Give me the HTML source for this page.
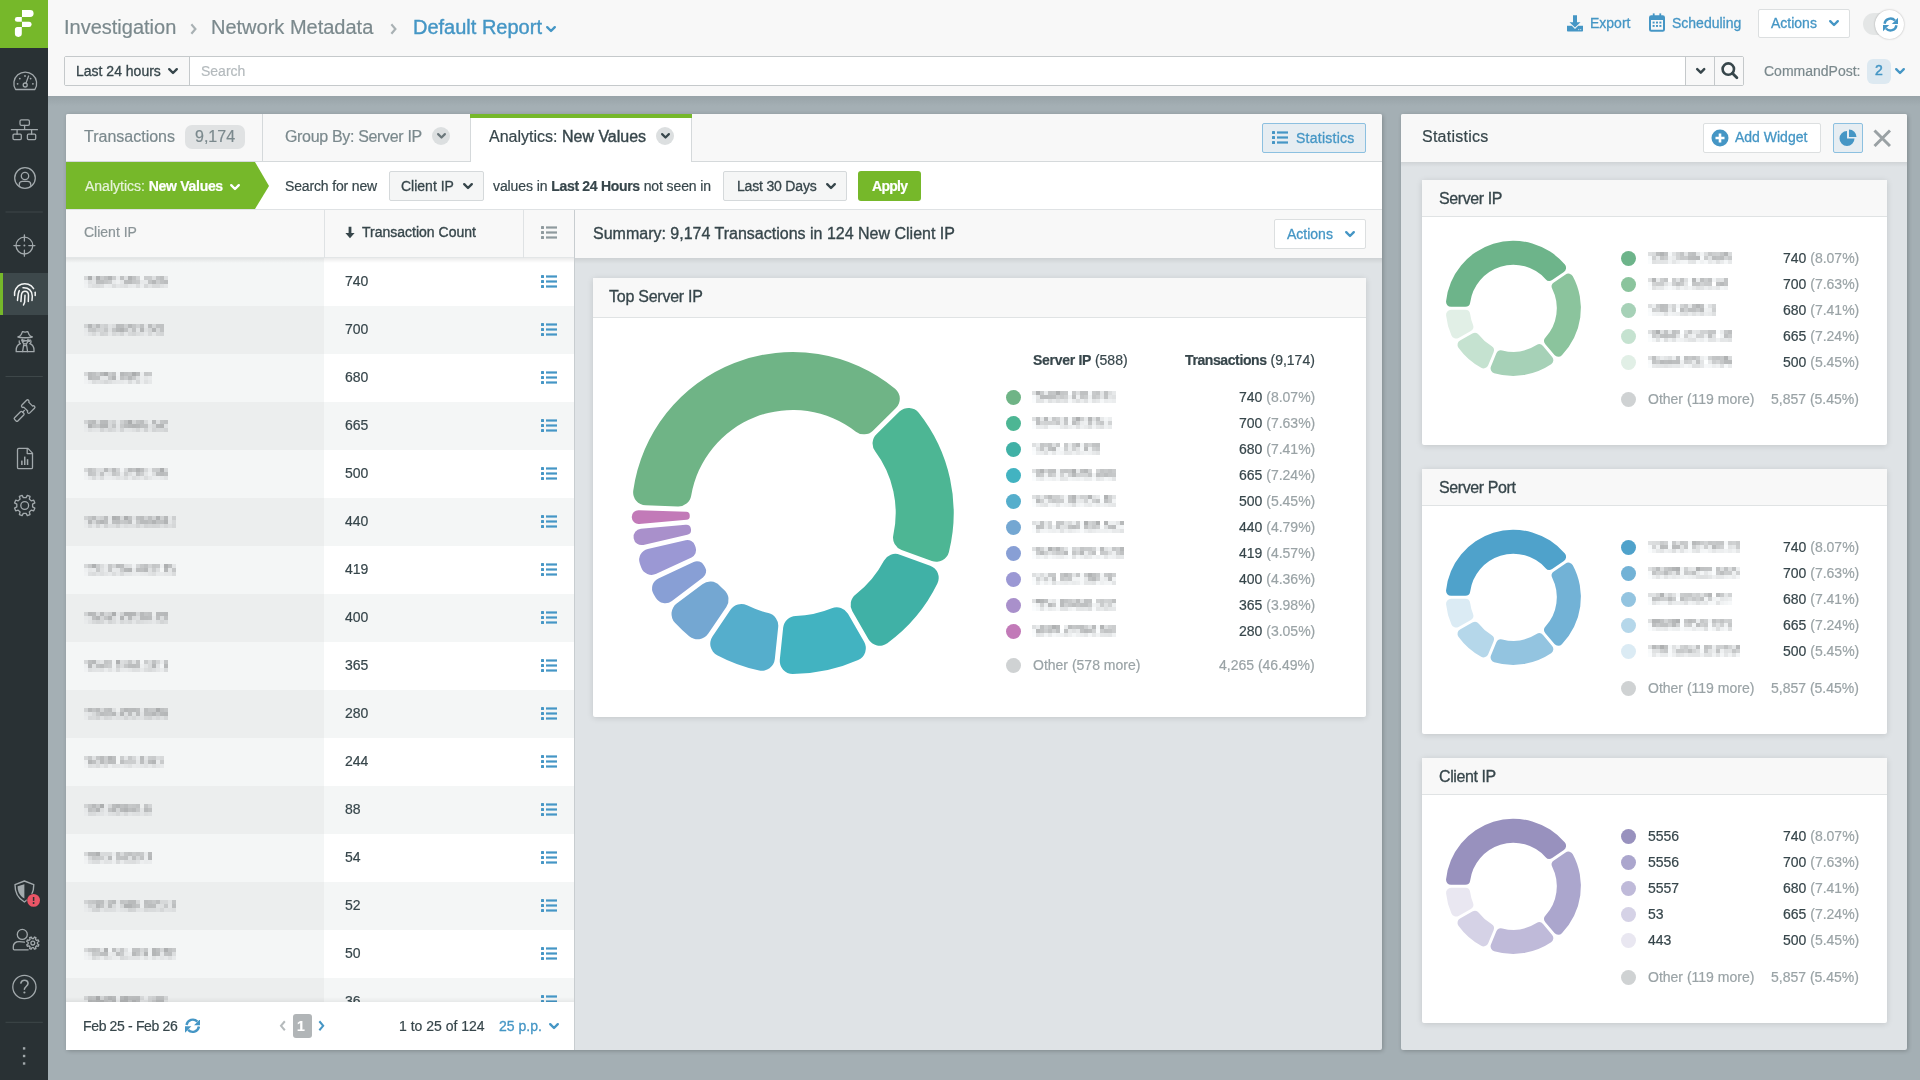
<!DOCTYPE html>
<html><head><meta charset="utf-8"><style>
html,body{margin:0;padding:0;width:1920px;height:1080px;overflow:hidden;font-family:"Liberation Sans", sans-serif;}
.b{position:absolute;}
.t{position:absolute;white-space:nowrap;-webkit-text-stroke:0.2px currentColor;will-change:transform;}
.blur{filter:blur(1.6px);opacity:.75}
b{font-weight:bold}
</style></head><body>
<div class="b" style="left:0;top:0;width:1920px;height:1080px;background:#a4afb4"></div>
<div class="b" style="left:48px;top:96px;width:1872px;height:10px;background:linear-gradient(#98a3a8,#a4afb4)"></div>
<div class="b" style="left:48px;top:0px;width:1872px;height:96px;background:#f8f8f8"></div>
<div class="t " style="left:64.0px;top:12.5px;height:28.0px;line-height:28.0px;font-size:20px;color:#7b898d;font-weight:normal;">Investigation</div>
<svg class="b" style="left:189.2px;top:21.5px" width="9.5" height="14.0" viewBox="0 0 9.5 14.0"><path d="M3.1 3.1L6.4 7.0L3.1 10.9" fill="none" stroke="#a9b1b4" stroke-width="2.2" stroke-linecap="square" stroke-linejoin="miter"/></svg>
<svg class="b" style="left:389.2px;top:21.5px" width="9.5" height="14.0" viewBox="0 0 9.5 14.0"><path d="M3.1 3.1L6.4 7.0L3.1 10.9" fill="none" stroke="#a9b1b4" stroke-width="2.2" stroke-linecap="square" stroke-linejoin="miter"/></svg>
<div class="t " style="left:211.0px;top:12.5px;height:28.0px;line-height:28.0px;font-size:20px;color:#7b898d;font-weight:normal;">Network Metadata</div>
<div class="t " style="left:413.0px;top:12.5px;height:28.0px;line-height:28.0px;font-size:20px;color:#4596c5;font-weight:normal;-webkit-text-stroke:0.4px #4596c5">Default Report</div>
<svg class="b" style="left:544.0px;top:23.9px" width="14.0" height="10.2" viewBox="0 0 14.0 10.2"><path d="M3.2 3.2L7.0 7.0L10.8 3.2" fill="none" stroke="#4596c5" stroke-width="2.4" stroke-linecap="round" stroke-linejoin="round"/></svg>
<div class="b" style="left:64px;top:56px;width:1680px;height:30px;background:#fff;border:1px solid #c5c9cb;border-radius:2px;box-sizing:border-box"></div>
<div class="b" style="left:65px;top:57px;width:124px;height:28px;background:#f8f8f8;border-right:1px solid #c5c9cb;"></div>
<div class="t " style="left:76.0px;top:62.2px;height:19.6px;line-height:19.6px;font-size:14px;color:#37464b;font-weight:normal;-webkit-text-stroke:0.3px #37464b">Last 24 hours</div>
<svg class="b" style="left:166.0px;top:66.4px" width="14.0" height="10.2" viewBox="0 0 14.0 10.2"><path d="M3.2 3.2L7.0 7.0L10.8 3.2" fill="none" stroke="#37464b" stroke-width="2.4" stroke-linecap="round" stroke-linejoin="round"/></svg>
<div class="t " style="left:201.0px;top:62.2px;height:19.6px;line-height:19.6px;font-size:14px;color:#b4babd;font-weight:normal;">Search</div>
<div class="b" style="left:1685px;top:57px;width:1px;height:28px;background:#c5c9cb"></div>
<div class="b" style="left:1686px;top:57px;width:28px;height:28px;background:#f8f8f8"></div>
<svg class="b" style="left:1694.0px;top:66.1px" width="13.5" height="9.9" viewBox="0 0 13.5 9.9"><path d="M3.2 3.2L6.8 6.6L10.2 3.2" fill="none" stroke="#37464b" stroke-width="2.5" stroke-linecap="round" stroke-linejoin="round"/></svg>
<div class="b" style="left:1714px;top:57px;width:1px;height:28px;background:#c5c9cb"></div>
<div class="b" style="left:1715px;top:57px;width:28px;height:28px;background:#f8f8f8"></div>
<svg class="b" style="left:1715px;top:57px" width="28" height="28"><circle cx="13.3" cy="12.1" r="5.7" fill="none" stroke="#37464b" stroke-width="2.6"/><path d="M17.4 16.3L21.9 20.8" stroke="#37464b" stroke-width="2.8" stroke-linecap="round"/></svg>
<div class="t " style="left:1764.0px;top:62.2px;height:19.6px;line-height:19.6px;font-size:14px;color:#7b898d;font-weight:normal;">CommandPost:</div>
<div class="b" style="left:1867px;top:59px;width:24px;height:25px;background:#dde9f1;border-radius:6px"></div>
<div class="t " style="left:1875.0px;top:61.2px;height:19.6px;line-height:19.6px;font-size:14px;color:#4596c5;font-weight:normal;-webkit-text-stroke:0.5px #4596c5">2</div>
<svg class="b" style="left:1893.0px;top:65.9px" width="14.0" height="10.2" viewBox="0 0 14.0 10.2"><path d="M3.2 3.2L7.0 7.0L10.8 3.2" fill="none" stroke="#4596c5" stroke-width="2.4" stroke-linecap="round" stroke-linejoin="round"/></svg>
<svg class="b" style="left:1567px;top:15px" width="16" height="17" viewBox="0 0 16 17"><path d="M6 0.3H10V7.3H13.5L8 12.6L2.5 7.3H6Z" fill="#4596c5"/><path d="M0 10.8H4.8L8 14L11.2 10.8H16V15.8Q16 16.6 15.2 16.6H0.8Q0 16.6 0 15.8Z" fill="#4596c5"/><rect x="11.3" y="14.2" width="0.9" height="0.9" fill="#f8f8f8"/><rect x="13.3" y="14.2" width="0.9" height="0.9" fill="#f8f8f8"/></svg>
<svg class="b" style="left:1649px;top:13px" width="16" height="19" viewBox="0 0 16 19"><rect x="1" y="3.2" width="14" height="14.6" rx="1.3" fill="none" stroke="#4596c5" stroke-width="2"/><rect x="1" y="3.2" width="14" height="3.8" fill="#4596c5"/><rect x="3.8" y="0.4" width="1.8" height="3.6" fill="#4596c5"/><rect x="10.4" y="0.4" width="1.8" height="3.6" fill="#4596c5"/><g fill="#4596c5"><rect x="3.6" y="8.6" width="2" height="1.9"/><rect x="7" y="8.6" width="2" height="1.9"/><rect x="10.4" y="8.6" width="2" height="1.9"/><rect x="3.6" y="12" width="2" height="1.9"/><rect x="7" y="12" width="2" height="1.9"/><rect x="10.4" y="12" width="2" height="1.9"/></g></svg>
<div class="t " style="left:1590.0px;top:14.2px;height:19.6px;line-height:19.6px;font-size:14px;color:#4596c5;font-weight:normal;-webkit-text-stroke:0.3px #4596c5">Export</div>
<div class="t " style="left:1672.0px;top:14.2px;height:19.6px;line-height:19.6px;font-size:14px;color:#4596c5;font-weight:normal;-webkit-text-stroke:0.3px #4596c5">Scheduling</div>
<div class="b" style="left:1758px;top:9px;width:92px;height:29px;background:#fff;border:1px solid #dcdfe0;border-radius:2px;box-sizing:border-box"></div>
<div class="t " style="left:1771.0px;top:14.2px;height:19.6px;line-height:19.6px;font-size:14px;color:#4596c5;font-weight:normal;-webkit-text-stroke:0.3px #4596c5">Actions</div>
<svg class="b" style="left:1827.0px;top:18.2px" width="14.0" height="10.2" viewBox="0 0 14.0 10.2"><path d="M3.2 3.2L7.0 7.0L10.8 3.2" fill="none" stroke="#4596c5" stroke-width="2.4" stroke-linecap="round" stroke-linejoin="round"/></svg>
<div class="b" style="left:1863px;top:12.5px;width:36px;height:22.5px;background:#e4e6e6;border-radius:11px"></div>
<div class="b" style="left:1875px;top:9.5px;width:29px;height:29px;background:#fff;border-radius:50%;box-shadow:0 0 2px rgba(0,0,0,.3)"></div>
<svg style="position:absolute;left:1882.50px;top:16.50px" width="15.00" height="15.00" viewBox="0 0 16 16"><g fill="none" stroke="#4596c5" stroke-width="2.5"><path d="M1.6 7.2A6.5 6.5 0 0 1 12.8 3.8"/><path d="M14.4 8.8A6.5 6.5 0 0 1 3.2 12.2"/></g><path d="M16 0.8V7.4H9.4Z" fill="#4596c5"/><path d="M0 15.2V8.6H6.6Z" fill="#4596c5"/></svg>
<div class="b" style="left:0px;top:0px;width:48px;height:1080px;background:#293134"></div>
<div class="b" style="left:0px;top:0px;width:48px;height:48px;background:#76b82a"></div>
<svg style="position:absolute;left:0;top:0" width="48" height="1080"><g transform="translate(8,64)" fill="none" stroke="#a2a9ac" stroke-width="1.3" stroke-linecap="round" stroke-linejoin="round"><path d="M7.6 25.5A11.4 11.4 0 1 1 26.9 25.5Z"/><circle cx="17.2" cy="21" r="2"/><path d="M18 19.1L20.6 12"/></g><circle cx="19.8" cy="78.6" r="0.9" fill="#a2a9ac"/><circle cx="25.0" cy="76.0" r="0.9" fill="#a2a9ac"/><circle cx="30.6" cy="78.6" r="0.9" fill="#a2a9ac"/><circle cx="17.6" cy="83.8" r="0.9" fill="#a2a9ac"/><circle cx="32.9" cy="83.8" r="0.9" fill="#a2a9ac"/><g transform="translate(8,112)" fill="none" stroke="#a2a9ac" stroke-width="1.3" stroke-linecap="round" stroke-linejoin="round"><rect x="12" y="7.8" width="9.4" height="5.6" rx="1.4"/><path d="M16.6 13.4V17.7M3.4 17.7H29.4M9.1 17.7V22.2M23.6 17.7V22.2"/><rect x="5" y="22.2" width="8.3" height="5.5" rx="1.1"/><rect x="19.4" y="22.2" width="8.3" height="5.5" rx="1.1"/></g><g transform="translate(8,162)" fill="none" stroke="#a2a9ac" stroke-width="1.3" stroke-linecap="round" stroke-linejoin="round"><circle cx="17" cy="16" r="10.3"/><circle cx="17" cy="14" r="3.7"/><path d="M11.3 23.3V22.2C11.3 20.3 12.8 19.3 14.5 19.3H19.5C21.2 19.3 22.7 20.3 22.7 22.2V23.3"/></g><rect x="5.5" y="211.5" width="37.3" height="1" fill="#3e4749"/><g transform="translate(8,229)" fill="none" stroke="#a2a9ac" stroke-width="1.3" stroke-linecap="round" stroke-linejoin="round"><circle cx="16.4" cy="16.6" r="8.4"/><path d="M16.4 6V12M16.4 21.2V27.2M5.9 16.6H12M20.8 16.6H26.9"/></g><circle cx="24.4" cy="245.6" r="1" fill="#a2a9ac"/><rect x="0" y="273" width="48" height="42" fill="#3d484b"/><rect x="0" y="273" width="3" height="42" fill="#76b82a"/><g transform="translate(8,278)" fill="none" stroke="#f2f4f4" stroke-width="1.5" stroke-linecap="round"><path d="M6.6 17.4A10.3 10.3 0 0 1 25.6 10.6"/><path d="M27.2 14.3V17.6"/><path d="M15 9.8C20.6 9.4 24.4 13 24.3 18.2L24 22.5"/><path d="M11.3 12.6C9.9 15.2 9.9 19 9.5 22.4"/><path d="M12.9 23.6L13.4 17C13.8 14.4 15.6 13.3 17 13.3C18.6 13.3 20.5 14.6 20.5 17.6L20.3 23.6"/><path d="M17 17.3L16.6 24.3L15.5 27"/></g><g transform="translate(8,326)" fill="none" stroke="#a2a9ac" stroke-width="1.3" stroke-linecap="round" stroke-linejoin="round"><path d="M9.8 10.9C11.5 10.6 12.6 10 13.2 8.6L14.4 5.7C15.3 5.3 16.2 6.2 17.1 6.2C18 6.2 18.9 5.3 19.8 5.7L21 8.6C21.6 10 22.7 10.6 24.4 10.9C22 12 12.2 12 9.8 10.9Z"/><path d="M14.2 13.2C14.2 15.5 15.2 17.8 17.1 17.8C19 17.8 20 15.5 20 13.2"/><path d="M11.2 14.8C11 16 11.4 17 12.2 17.6M23 14.8C23.2 16 22.8 17 22 17.6"/><path d="M12.2 17.6C9.6 18.6 8.2 21.2 8.2 24.2V25.7H26V24.2C26 21.2 24.6 18.6 22 17.6"/><path d="M15.7 18.6L14.6 25.6M18.5 18.6L19.6 25.6M16 19.5H18.2"/></g><path d="M21 339.4H24.1L25.1 340H26.9L27.9 339.4H31C30.9 340.9 30.1 342 28.9 342C27.9 342 27.4 341.5 26 341.5C24.6 341.5 24.1 342 23.1 342C21.9 342 21.1 340.9 21 339.4Z" fill="#a2a9ac"/><rect x="5.5" y="376" width="37.3" height="1" fill="#3e4749"/><g transform="translate(8,394)" fill="none" stroke="#a2a9ac" stroke-width="1.3" stroke-linecap="round" stroke-linejoin="round"><g transform="rotate(45 20.2 12.6)"><path d="M14.6 9.3Q14.6 7.9 16 7.9Q17.4 7.9 17.4 9.1H23Q23 7.9 24.4 7.9Q25.8 7.9 25.8 9.3V15.9Q25.8 17.3 24.4 17.3Q23 17.3 23 16.1H17.4Q17.4 17.3 16 17.3Q14.6 17.3 14.6 15.9Z"/></g><path d="M16.4 16.4L14.6 18.2"/><g transform="rotate(45 11.3 22.2)"><rect x="9" y="17" width="4.6" height="10.8" rx="1.2"/></g></g><g transform="translate(8,442)" fill="none" stroke="#a2a9ac" stroke-width="1.3" stroke-linecap="round" stroke-linejoin="round"><path d="M10.8 6.4H19.9L24.5 11.1V25.4Q24.5 26.7 23.2 26.7H10.8Q9.5 26.7 9.5 25.4V7.7Q9.5 6.4 10.8 6.4Z"/><path d="M19.2 6.6V11.6H24.3"/></g><g fill="#a2a9ac"><rect x="21.1" y="460.6" width="1.5" height="4.4"/><rect x="24" y="456.6" width="1.5" height="8.4"/><rect x="26.8" y="459.2" width="1.5" height="5.8"/></g><g transform="translate(8,489)" fill="none" stroke="#a2a9ac" stroke-width="1.3" stroke-linecap="round" stroke-linejoin="round"><path d="M18.08 8.62L19.31 6.33L22.04 7.46L21.30 9.95L23.25 11.90L25.74 11.16L26.87 13.89L24.58 15.12L24.58 17.88L26.87 19.11L25.74 21.84L23.25 21.10L21.30 23.05L22.04 25.54L19.31 26.67L18.08 24.38L15.32 24.38L14.09 26.67L11.36 25.54L12.10 23.05L10.15 21.10L7.66 21.84L6.53 19.11L8.82 17.88L8.82 15.12L6.53 13.89L7.66 11.16L10.15 11.90L12.10 9.95L11.36 7.46L14.09 6.33L15.32 8.62Z"/><circle cx="16.7" cy="16.5" r="3.9"/></g><g transform="translate(8,874)"><path d="M16.4 7L25.8 10.6C25.9 18.5 23 24.5 16.4 28C9.8 24.5 6.9 18.5 7 10.6Z" fill="none" stroke="#a2a9ac" stroke-width="1.4" stroke-linejoin="round"/><path d="M16.4 10.2V24.6C11.6 21.8 9.5 17.4 9.6 12.3Z" fill="#a2a9ac"/><circle cx="25.6" cy="26.4" r="6.9" fill="#293033"/><circle cx="25.6" cy="26.4" r="6.4" fill="#ea5566"/><rect x="24.85" y="23" width="1.5" height="3.9" fill="#293033"/><circle cx="25.6" cy="29" r="0.95" fill="#293033"/></g><g transform="translate(8,922)" fill="none" stroke="#a2a9ac" stroke-width="1.3" stroke-linecap="round" stroke-linejoin="round"><circle cx="14.3" cy="12.4" r="5"/><path d="M16.4 20.2C15 19.9 13.6 19.6 11.2 19.6C7.8 19.6 5.3 21.5 5.3 24.6V26.8C5.3 27.3 5.6 27.8 6.3 27.8H20.2"/><path d="M25.64 16.48L26.41 15.01L27.96 15.65L27.47 17.23L28.67 18.43L30.25 17.94L30.89 19.49L29.42 20.26L29.42 21.94L30.89 22.71L30.25 24.26L28.67 23.77L27.47 24.97L27.96 26.55L26.41 27.19L25.64 25.72L23.96 25.72L23.19 27.19L21.64 26.55L22.13 24.97L20.93 23.77L19.35 24.26L18.71 22.71L20.18 21.94L20.18 20.26L18.71 19.49L19.35 17.94L20.93 18.43L22.13 17.23L21.64 15.65L23.19 15.01L23.96 16.48Z"/><circle cx="24.8" cy="21.1" r="1.9"/></g><g transform="translate(4,967)" fill="none" stroke="#a2a9ac" stroke-width="1.3" stroke-linecap="round" stroke-linejoin="round"><circle cx="20.4" cy="20" r="11.6"/><path d="M16.9 15.9C17.5 14 18.9 13.3 20.4 13.3C22.5 13.3 24 14.6 24 16.6C24 19.3 20.4 19.7 20.4 22.3" stroke-width="1.6"/></g><circle cx="24.4" cy="992.5" r="1.1" fill="#a2a9ac"/><rect x="5.5" y="1021.8" width="37.3" height="1" fill="#3e4749"/><rect x="22.9" y="1047.2" width="2.4" height="2.4" fill="#a2a9ac"/><rect x="22.9" y="1054.8" width="2.4" height="2.4" fill="#a2a9ac"/><rect x="22.9" y="1062.3" width="2.4" height="2.4" fill="#a2a9ac"/><g fill="#fff"><path d="M22 10.1H30.2A3.4 3.4 0 0 1 30.2 16.9H22Z"/><path d="M21.8 17.1V21.8H17.2A2.35 2.35 0 0 1 17.2 17.1Z"/><path d="M22 21.8H29A2.55 2.55 0 0 1 29 26.9H22Z"/><path d="M21.8 26.9V33.6A3.3 3.3 0 0 1 18.5 36.9H18.2A3.3 3.3 0 0 1 14.9 33.6V29.4A2.5 2.5 0 0 1 17.4 26.9Z"/></g></svg>
<div class="b" style="left:66px;top:114px;width:1316px;height:936px;background:#dfe3e6;border-radius:2px;box-shadow:1px 1px 4px rgba(0,0,0,.22)"></div>
<div class="b" style="left:66px;top:114px;width:1316px;height:48px;background:#f8f8f8;border-bottom:1px solid #d5d9db;box-sizing:border-box;border-radius:2px 2px 0 0"></div>
<div class="b" style="left:262px;top:114px;width:1px;height:48px;background:#d5d9db"></div>
<div class="b" style="left:470px;top:114px;width:222px;height:48px;background:#fff;border-left:1px solid #d5d9db;border-right:1px solid #d5d9db;box-sizing:border-box"></div>
<div class="b" style="left:470px;top:114px;width:222px;height:4px;background:#76b82a"></div>
<div class="t " style="left:84.0px;top:125.8px;height:22.4px;line-height:22.4px;font-size:16px;color:#7b898d;font-weight:normal;">Transactions</div>
<div class="b" style="left:185px;top:125px;width:60px;height:24px;background:#e0e2e3;border-radius:7px"></div>
<div class="t " style="left:195.0px;top:125.8px;height:22.4px;line-height:22.4px;font-size:16px;color:#7b898d;font-weight:normal;">9,174</div>
<div class="t " style="left:285.0px;top:125.8px;height:22.4px;line-height:22.4px;font-size:16px;color:#7b898d;font-weight:normal;letter-spacing:-0.33px">Group By: Server IP</div>
<div class="b" style="left:432px;top:127px;width:18px;height:18px;background:#dcdfe0;border-radius:9px"></div>
<svg class="b" style="left:434.5px;top:131.2px" width="13.0" height="9.6" viewBox="0 0 13.0 9.6"><path d="M3.1 3.1L6.5 6.5L9.9 3.1" fill="none" stroke="#6b777b" stroke-width="2.2" stroke-linecap="round" stroke-linejoin="round"/></svg>
<div class="t " style="left:489.0px;top:125.8px;height:22.4px;line-height:22.4px;font-size:16px;color:#37464b;font-weight:normal;">Analytics: <span style="-webkit-text-stroke:0.4px #37464b">New Values</span></div>
<div class="b" style="left:656px;top:127px;width:18px;height:18px;background:#dcdfe0;border-radius:9px"></div>
<svg class="b" style="left:658.5px;top:131.2px" width="13.0" height="9.6" viewBox="0 0 13.0 9.6"><path d="M3.1 3.1L6.5 6.5L9.9 3.1" fill="none" stroke="#37464b" stroke-width="2.2" stroke-linecap="round" stroke-linejoin="round"/></svg>
<div class="b" style="left:1262px;top:123px;width:104px;height:30px;background:#e6edf2;border:1px solid #8cc0e0;border-radius:2px;box-sizing:border-box"></div>
<svg class="b" style="left:1272px;top:131px" width="16" height="13" viewBox="0 0 16 13"><rect x="0" y="0.0" width="3" height="3" rx="0.6" fill="#4596c5"/><rect x="5" y="0.3999999999999999" width="11" height="2.2" fill="#4596c5"/><rect x="0" y="5.0" width="3" height="3" rx="0.6" fill="#4596c5"/><rect x="5" y="5.4" width="11" height="2.2" fill="#4596c5"/><rect x="0" y="10.0" width="3" height="3" rx="0.6" fill="#4596c5"/><rect x="5" y="10.4" width="11" height="2.2" fill="#4596c5"/></svg>
<div class="t " style="left:1296.0px;top:129.2px;height:19.6px;line-height:19.6px;font-size:14px;color:#4596c5;font-weight:normal;letter-spacing:0.25px;-webkit-text-stroke:0.3px #4596c5">Statistics</div>
<div class="b" style="left:66px;top:162px;width:1316px;height:48px;background:#fff;border-bottom:1px solid #dfe2e4;box-sizing:border-box"></div>
<svg class="b" style="left:66px;top:162px" width="204" height="48"><path d="M0 0H189L203 24L189 47H0Z" fill="#76b82a"/></svg>
<div class="t " style="left:85.0px;top:177.2px;height:19.6px;line-height:19.6px;font-size:14px;color:#e6f2d9;font-weight:normal;">Analytics: <b style="color:#fff;letter-spacing:-0.3px">New Values</b></div>
<svg class="b" style="left:228.0px;top:181.6px" width="14.0" height="10.2" viewBox="0 0 14.0 10.2"><path d="M3.2 3.2L7.0 7.0L10.8 3.2" fill="none" stroke="#fff" stroke-width="2.4" stroke-linecap="round" stroke-linejoin="round"/></svg>
<div class="t " style="left:285.0px;top:177.2px;height:19.6px;line-height:19.6px;font-size:14px;color:#37464b;font-weight:normal;letter-spacing:-0.15px">Search for new</div>
<div class="b" style="left:389px;top:171px;width:95px;height:30px;background:#f5f6f6;border:1px solid #d5d9db;border-radius:2px;box-sizing:border-box"></div>
<div class="t " style="left:401.0px;top:177.2px;height:19.6px;line-height:19.6px;font-size:14px;color:#37464b;font-weight:normal;-webkit-text-stroke:0.3px #37464b">Client IP</div>
<svg class="b" style="left:461.4px;top:181.4px" width="14.0" height="10.2" viewBox="0 0 14.0 10.2"><path d="M3.2 3.2L7.0 7.0L10.8 3.2" fill="none" stroke="#37464b" stroke-width="2.4" stroke-linecap="round" stroke-linejoin="round"/></svg>
<div class="t " style="left:493.0px;top:177.2px;height:19.6px;line-height:19.6px;font-size:14px;color:#37464b;font-weight:normal;letter-spacing:-0.1px">values in <b style="letter-spacing:-0.3px">Last 24 Hours</b> not seen in</div>
<div class="b" style="left:723px;top:171px;width:124px;height:30px;background:#f5f6f6;border:1px solid #d5d9db;border-radius:2px;box-sizing:border-box"></div>
<div class="t " style="left:737.0px;top:177.2px;height:19.6px;line-height:19.6px;font-size:14px;color:#37464b;font-weight:normal;letter-spacing:-0.18px;-webkit-text-stroke:0.3px #37464b">Last 30 Days</div>
<svg class="b" style="left:824.3px;top:181.2px" width="14.0" height="10.2" viewBox="0 0 14.0 10.2"><path d="M3.2 3.2L7.0 7.0L10.8 3.2" fill="none" stroke="#37464b" stroke-width="2.4" stroke-linecap="round" stroke-linejoin="round"/></svg>
<div class="b" style="left:858px;top:171px;width:63px;height:30px;background:#76b82a;border-radius:3px"></div>
<div class="t " style="left:872.0px;top:177.2px;height:19.6px;line-height:19.6px;font-size:14px;color:#fff;font-weight:normal;letter-spacing:-0.7px"><b>Apply</b></div>
<div class="b" style="left:66px;top:210px;width:508px;height:48px;background:#f8f8f8;border-bottom:1px solid #e3e6e7;box-sizing:border-box"></div>
<div class="b" style="left:324px;top:210px;width:1px;height:48px;background:#dfe2e4"></div>
<div class="b" style="left:523px;top:210px;width:1px;height:48px;background:#dfe2e4"></div>
<div class="t " style="left:84.0px;top:223.2px;height:19.6px;line-height:19.6px;font-size:14px;color:#8a9497;font-weight:normal;">Client IP</div>
<div class="t " style="left:362.0px;top:223.2px;height:19.6px;line-height:19.6px;font-size:14px;color:#37464b;font-weight:normal;-webkit-text-stroke:0.35px #37464b">Transaction Count</div>
<svg class="b" style="left:344px;top:226px" width="12" height="13" viewBox="0 0 12 13"><path d="M4.6 0.8H7.4V7H10.6L6 12.2L1.4 7H4.6Z" fill="#37464b"/></svg>
<svg class="b" style="left:541px;top:226px" width="16" height="13" viewBox="0 0 16 13"><rect x="0" y="0.0" width="3" height="3" rx="0.6" fill="#8f9a9e"/><rect x="5" y="0.3999999999999999" width="11" height="2.2" fill="#8f9a9e"/><rect x="0" y="5.0" width="3" height="3" rx="0.6" fill="#8f9a9e"/><rect x="5" y="5.4" width="11" height="2.2" fill="#8f9a9e"/><rect x="0" y="10.0" width="3" height="3" rx="0.6" fill="#8f9a9e"/><rect x="5" y="10.4" width="11" height="2.2" fill="#8f9a9e"/></svg>
<div class="b" style="left:66px;top:258px;width:258px;height:48px;background:#f4f6f6"></div>
<div class="b" style="left:324px;top:258px;width:250px;height:48px;background:#ffffff"></div>
<svg style="position:absolute;left:84px;top:276px;filter:blur(0.3px)" width="84" height="12"><rect x="0" y="0" width="4" height="4" fill="rgb(214,216,217)"/><rect x="0" y="4" width="4" height="4" fill="rgb(238,240,241)"/><rect x="0" y="8" width="4" height="4" fill="rgb(240,242,243)"/><rect x="4" y="0" width="4" height="4" fill="rgb(174,176,177)"/><rect x="4" y="4" width="4" height="4" fill="rgb(220,222,223)"/><rect x="4" y="8" width="4" height="4" fill="rgb(227,229,230)"/><rect x="8" y="0" width="4" height="4" fill="rgb(222,224,225)"/><rect x="8" y="4" width="4" height="4" fill="rgb(226,228,229)"/><rect x="8" y="8" width="4" height="4" fill="rgb(221,223,224)"/><rect x="12" y="0" width="4" height="4" fill="rgb(175,177,178)"/><rect x="12" y="4" width="4" height="4" fill="rgb(189,191,192)"/><rect x="12" y="8" width="4" height="4" fill="rgb(218,220,221)"/><rect x="16" y="0" width="4" height="4" fill="rgb(201,203,204)"/><rect x="16" y="4" width="4" height="4" fill="rgb(189,191,192)"/><rect x="16" y="8" width="4" height="4" fill="rgb(221,223,224)"/><rect x="20" y="0" width="4" height="4" fill="rgb(191,193,194)"/><rect x="20" y="4" width="4" height="4" fill="rgb(196,198,199)"/><rect x="20" y="8" width="4" height="4" fill="rgb(235,237,238)"/><rect x="24" y="0" width="4" height="4" fill="rgb(178,180,181)"/><rect x="24" y="4" width="4" height="4" fill="rgb(201,203,204)"/><rect x="24" y="8" width="4" height="4" fill="rgb(233,235,236)"/><rect x="28" y="0" width="4" height="4" fill="rgb(203,205,206)"/><rect x="28" y="4" width="4" height="4" fill="rgb(232,234,235)"/><rect x="28" y="8" width="4" height="4" fill="rgb(219,221,222)"/><rect x="32" y="0" width="4" height="4" fill="rgb(234,236,237)"/><rect x="32" y="4" width="4" height="4" fill="rgb(238,240,241)"/><rect x="32" y="8" width="4" height="4" fill="rgb(228,230,231)"/><rect x="36" y="0" width="4" height="4" fill="rgb(192,194,195)"/><rect x="36" y="4" width="4" height="4" fill="rgb(229,231,232)"/><rect x="36" y="8" width="4" height="4" fill="rgb(225,227,228)"/><rect x="40" y="0" width="4" height="4" fill="rgb(222,224,225)"/><rect x="40" y="4" width="4" height="4" fill="rgb(188,190,191)"/><rect x="40" y="8" width="4" height="4" fill="rgb(221,223,224)"/><rect x="44" y="0" width="4" height="4" fill="rgb(178,180,181)"/><rect x="44" y="4" width="4" height="4" fill="rgb(186,188,189)"/><rect x="44" y="8" width="4" height="4" fill="rgb(231,233,234)"/><rect x="48" y="0" width="4" height="4" fill="rgb(193,195,196)"/><rect x="48" y="4" width="4" height="4" fill="rgb(197,199,200)"/><rect x="48" y="8" width="4" height="4" fill="rgb(233,235,236)"/><rect x="52" y="0" width="4" height="4" fill="rgb(210,212,213)"/><rect x="52" y="4" width="4" height="4" fill="rgb(201,203,204)"/><rect x="52" y="8" width="4" height="4" fill="rgb(220,222,223)"/><rect x="56" y="4" width="4" height="4" fill="rgb(231,233,234)"/><rect x="56" y="8" width="4" height="4" fill="rgb(235,237,238)"/><rect x="60" y="0" width="4" height="4" fill="rgb(203,205,206)"/><rect x="60" y="4" width="4" height="4" fill="rgb(231,233,234)"/><rect x="60" y="8" width="4" height="4" fill="rgb(214,216,217)"/><rect x="64" y="0" width="4" height="4" fill="rgb(203,205,206)"/><rect x="64" y="4" width="4" height="4" fill="rgb(195,197,198)"/><rect x="64" y="8" width="4" height="4" fill="rgb(225,227,228)"/><rect x="68" y="0" width="4" height="4" fill="rgb(222,224,225)"/><rect x="68" y="4" width="4" height="4" fill="rgb(182,184,185)"/><rect x="68" y="8" width="4" height="4" fill="rgb(215,217,218)"/><rect x="72" y="0" width="4" height="4" fill="rgb(195,197,198)"/><rect x="72" y="4" width="4" height="4" fill="rgb(203,205,206)"/><rect x="72" y="8" width="4" height="4" fill="rgb(215,217,218)"/><rect x="76" y="0" width="4" height="4" fill="rgb(189,191,192)"/><rect x="76" y="4" width="4" height="4" fill="rgb(192,194,195)"/><rect x="76" y="8" width="4" height="4" fill="rgb(223,225,226)"/><rect x="80" y="0" width="4" height="4" fill="rgb(221,223,224)"/><rect x="80" y="4" width="4" height="4" fill="rgb(188,190,191)"/><rect x="80" y="8" width="4" height="4" fill="rgb(228,230,231)"/></svg>
<div class="t " style="left:345.0px;top:272.2px;height:19.6px;line-height:19.6px;font-size:14px;color:#37464b;font-weight:normal;">740</div>
<svg class="b" style="left:541px;top:275px" width="16" height="13" viewBox="0 0 16 13"><rect x="0" y="0.0" width="3" height="3" rx="0.6" fill="#4596c5"/><rect x="5" y="0.3999999999999999" width="11" height="2.2" fill="#4596c5"/><rect x="0" y="5.0" width="3" height="3" rx="0.6" fill="#4596c5"/><rect x="5" y="5.4" width="11" height="2.2" fill="#4596c5"/><rect x="0" y="10.0" width="3" height="3" rx="0.6" fill="#4596c5"/><rect x="5" y="10.4" width="11" height="2.2" fill="#4596c5"/></svg>
<div class="b" style="left:66px;top:306px;width:258px;height:48px;background:#eceeee"></div>
<div class="b" style="left:324px;top:306px;width:250px;height:48px;background:#f4f6f6"></div>
<svg style="position:absolute;left:84px;top:324px;filter:blur(0.3px)" width="80" height="12"><rect x="0" y="0" width="4" height="4" fill="rgb(209,211,212)"/><rect x="0" y="4" width="4" height="4" fill="rgb(230,232,233)"/><rect x="0" y="8" width="4" height="4" fill="rgb(232,234,235)"/><rect x="4" y="0" width="4" height="4" fill="rgb(180,182,183)"/><rect x="4" y="4" width="4" height="4" fill="rgb(199,201,202)"/><rect x="4" y="8" width="4" height="4" fill="rgb(224,226,227)"/><rect x="8" y="0" width="4" height="4" fill="rgb(206,208,209)"/><rect x="8" y="4" width="4" height="4" fill="rgb(195,197,198)"/><rect x="8" y="8" width="4" height="4" fill="rgb(215,217,218)"/><rect x="12" y="0" width="4" height="4" fill="rgb(185,187,188)"/><rect x="12" y="4" width="4" height="4" fill="rgb(209,211,212)"/><rect x="12" y="8" width="4" height="4" fill="rgb(227,229,230)"/><rect x="16" y="0" width="4" height="4" fill="rgb(211,213,214)"/><rect x="16" y="4" width="4" height="4" fill="rgb(212,214,215)"/><rect x="16" y="8" width="4" height="4" fill="rgb(209,211,212)"/><rect x="20" y="0" width="4" height="4" fill="rgb(205,207,208)"/><rect x="20" y="4" width="4" height="4" fill="rgb(197,199,200)"/><rect x="20" y="8" width="4" height="4" fill="rgb(212,214,215)"/><rect x="24" y="0" width="4" height="4" fill="rgb(225,227,228)"/><rect x="24" y="4" width="4" height="4" fill="rgb(223,225,226)"/><rect x="24" y="8" width="4" height="4" fill="rgb(229,231,232)"/><rect x="28" y="0" width="4" height="4" fill="rgb(218,220,221)"/><rect x="28" y="4" width="4" height="4" fill="rgb(196,198,199)"/><rect x="28" y="8" width="4" height="4" fill="rgb(214,216,217)"/><rect x="32" y="0" width="4" height="4" fill="rgb(186,188,189)"/><rect x="32" y="4" width="4" height="4" fill="rgb(182,184,185)"/><rect x="32" y="8" width="4" height="4" fill="rgb(220,222,223)"/><rect x="36" y="0" width="4" height="4" fill="rgb(188,190,191)"/><rect x="36" y="4" width="4" height="4" fill="rgb(177,179,180)"/><rect x="36" y="8" width="4" height="4" fill="rgb(211,213,214)"/><rect x="40" y="0" width="4" height="4" fill="rgb(206,208,209)"/><rect x="40" y="4" width="4" height="4" fill="rgb(192,194,195)"/><rect x="40" y="8" width="4" height="4" fill="rgb(228,230,231)"/><rect x="44" y="0" width="4" height="4" fill="rgb(183,185,186)"/><rect x="44" y="4" width="4" height="4" fill="rgb(219,221,222)"/><rect x="44" y="8" width="4" height="4" fill="rgb(215,217,218)"/><rect x="48" y="0" width="4" height="4" fill="rgb(196,198,199)"/><rect x="48" y="4" width="4" height="4" fill="rgb(193,195,196)"/><rect x="48" y="8" width="4" height="4" fill="rgb(211,213,214)"/><rect x="52" y="0" width="4" height="4" fill="rgb(208,210,211)"/><rect x="52" y="4" width="4" height="4" fill="rgb(226,228,229)"/><rect x="52" y="8" width="4" height="4" fill="rgb(219,221,222)"/><rect x="56" y="0" width="4" height="4" fill="rgb(192,194,195)"/><rect x="56" y="4" width="4" height="4" fill="rgb(182,184,185)"/><rect x="56" y="8" width="4" height="4" fill="rgb(223,225,226)"/><rect x="60" y="0" width="4" height="4" fill="rgb(228,230,231)"/><rect x="60" y="4" width="4" height="4" fill="rgb(222,224,225)"/><rect x="60" y="8" width="4" height="4" fill="rgb(230,232,233)"/><rect x="64" y="0" width="4" height="4" fill="rgb(187,189,190)"/><rect x="64" y="4" width="4" height="4" fill="rgb(212,214,215)"/><rect x="64" y="8" width="4" height="4" fill="rgb(215,217,218)"/><rect x="68" y="0" width="4" height="4" fill="rgb(212,214,215)"/><rect x="68" y="4" width="4" height="4" fill="rgb(180,182,183)"/><rect x="68" y="8" width="4" height="4" fill="rgb(228,230,231)"/><rect x="72" y="0" width="4" height="4" fill="rgb(192,194,195)"/><rect x="72" y="4" width="4" height="4" fill="rgb(215,217,218)"/><rect x="72" y="8" width="4" height="4" fill="rgb(214,216,217)"/><rect x="76" y="0" width="4" height="4" fill="rgb(192,194,195)"/><rect x="76" y="4" width="4" height="4" fill="rgb(193,195,196)"/><rect x="76" y="8" width="4" height="4" fill="rgb(211,213,214)"/></svg>
<div class="t " style="left:345.0px;top:320.2px;height:19.6px;line-height:19.6px;font-size:14px;color:#37464b;font-weight:normal;">700</div>
<svg class="b" style="left:541px;top:323px" width="16" height="13" viewBox="0 0 16 13"><rect x="0" y="0.0" width="3" height="3" rx="0.6" fill="#4596c5"/><rect x="5" y="0.3999999999999999" width="11" height="2.2" fill="#4596c5"/><rect x="0" y="5.0" width="3" height="3" rx="0.6" fill="#4596c5"/><rect x="5" y="5.4" width="11" height="2.2" fill="#4596c5"/><rect x="0" y="10.0" width="3" height="3" rx="0.6" fill="#4596c5"/><rect x="5" y="10.4" width="11" height="2.2" fill="#4596c5"/></svg>
<div class="b" style="left:66px;top:354px;width:258px;height:48px;background:#f4f6f6"></div>
<div class="b" style="left:324px;top:354px;width:250px;height:48px;background:#ffffff"></div>
<svg style="position:absolute;left:84px;top:372px;filter:blur(0.3px)" width="68" height="12"><rect x="0" y="0" width="4" height="4" fill="rgb(214,216,217)"/><rect x="0" y="4" width="4" height="4" fill="rgb(238,240,241)"/><rect x="0" y="8" width="4" height="4" fill="rgb(240,242,243)"/><rect x="4" y="0" width="4" height="4" fill="rgb(186,188,189)"/><rect x="4" y="4" width="4" height="4" fill="rgb(185,187,188)"/><rect x="4" y="8" width="4" height="4" fill="rgb(234,236,237)"/><rect x="8" y="0" width="4" height="4" fill="rgb(191,193,194)"/><rect x="8" y="4" width="4" height="4" fill="rgb(191,193,194)"/><rect x="8" y="8" width="4" height="4" fill="rgb(219,221,222)"/><rect x="12" y="0" width="4" height="4" fill="rgb(202,204,205)"/><rect x="12" y="4" width="4" height="4" fill="rgb(191,193,194)"/><rect x="12" y="8" width="4" height="4" fill="rgb(224,226,227)"/><rect x="16" y="0" width="4" height="4" fill="rgb(185,187,188)"/><rect x="16" y="4" width="4" height="4" fill="rgb(229,231,232)"/><rect x="16" y="8" width="4" height="4" fill="rgb(221,223,224)"/><rect x="20" y="0" width="4" height="4" fill="rgb(171,173,174)"/><rect x="20" y="4" width="4" height="4" fill="rgb(229,231,232)"/><rect x="20" y="8" width="4" height="4" fill="rgb(214,216,217)"/><rect x="24" y="0" width="4" height="4" fill="rgb(202,204,205)"/><rect x="24" y="4" width="4" height="4" fill="rgb(198,200,201)"/><rect x="24" y="8" width="4" height="4" fill="rgb(220,222,223)"/><rect x="28" y="0" width="4" height="4" fill="rgb(192,194,195)"/><rect x="28" y="4" width="4" height="4" fill="rgb(180,182,183)"/><rect x="28" y="8" width="4" height="4" fill="rgb(227,229,230)"/><rect x="32" y="0" width="4" height="4" fill="rgb(240,242,243)"/><rect x="32" y="4" width="4" height="4" fill="rgb(237,239,240)"/><rect x="32" y="8" width="4" height="4" fill="rgb(229,231,232)"/><rect x="36" y="0" width="4" height="4" fill="rgb(182,184,185)"/><rect x="36" y="4" width="4" height="4" fill="rgb(192,194,195)"/><rect x="36" y="8" width="4" height="4" fill="rgb(230,232,233)"/><rect x="40" y="0" width="4" height="4" fill="rgb(189,191,192)"/><rect x="40" y="4" width="4" height="4" fill="rgb(201,203,204)"/><rect x="40" y="8" width="4" height="4" fill="rgb(234,236,237)"/><rect x="44" y="0" width="4" height="4" fill="rgb(193,195,196)"/><rect x="44" y="4" width="4" height="4" fill="rgb(184,186,187)"/><rect x="44" y="8" width="4" height="4" fill="rgb(218,220,221)"/><rect x="48" y="0" width="4" height="4" fill="rgb(171,173,174)"/><rect x="48" y="4" width="4" height="4" fill="rgb(199,201,202)"/><rect x="48" y="8" width="4" height="4" fill="rgb(232,234,235)"/><rect x="52" y="0" width="4" height="4" fill="rgb(185,187,188)"/><rect x="52" y="4" width="4" height="4" fill="rgb(222,224,225)"/><rect x="52" y="8" width="4" height="4" fill="rgb(214,216,217)"/><rect x="56" y="0" width="4" height="4" fill="rgb(236,238,239)"/><rect x="56" y="4" width="4" height="4" fill="rgb(235,237,238)"/><rect x="56" y="8" width="4" height="4" fill="rgb(235,237,238)"/><rect x="60" y="0" width="4" height="4" fill="rgb(197,199,200)"/><rect x="60" y="4" width="4" height="4" fill="rgb(228,230,231)"/><rect x="60" y="8" width="4" height="4" fill="rgb(223,225,226)"/><rect x="64" y="0" width="4" height="4" fill="rgb(200,202,203)"/><rect x="64" y="4" width="4" height="4" fill="rgb(233,235,236)"/><rect x="64" y="8" width="4" height="4" fill="rgb(230,232,233)"/></svg>
<div class="t " style="left:345.0px;top:368.2px;height:19.6px;line-height:19.6px;font-size:14px;color:#37464b;font-weight:normal;">680</div>
<svg class="b" style="left:541px;top:371px" width="16" height="13" viewBox="0 0 16 13"><rect x="0" y="0.0" width="3" height="3" rx="0.6" fill="#4596c5"/><rect x="5" y="0.3999999999999999" width="11" height="2.2" fill="#4596c5"/><rect x="0" y="5.0" width="3" height="3" rx="0.6" fill="#4596c5"/><rect x="5" y="5.4" width="11" height="2.2" fill="#4596c5"/><rect x="0" y="10.0" width="3" height="3" rx="0.6" fill="#4596c5"/><rect x="5" y="10.4" width="11" height="2.2" fill="#4596c5"/></svg>
<div class="b" style="left:66px;top:402px;width:258px;height:48px;background:#eceeee"></div>
<div class="b" style="left:324px;top:402px;width:250px;height:48px;background:#f4f6f6"></div>
<svg style="position:absolute;left:84px;top:420px;filter:blur(0.3px)" width="84" height="12"><rect x="0" y="0" width="4" height="4" fill="rgb(209,211,212)"/><rect x="0" y="4" width="4" height="4" fill="rgb(230,232,233)"/><rect x="0" y="8" width="4" height="4" fill="rgb(232,234,235)"/><rect x="4" y="0" width="4" height="4" fill="rgb(190,192,193)"/><rect x="4" y="4" width="4" height="4" fill="rgb(177,179,180)"/><rect x="4" y="8" width="4" height="4" fill="rgb(222,224,225)"/><rect x="8" y="0" width="4" height="4" fill="rgb(185,187,188)"/><rect x="8" y="4" width="4" height="4" fill="rgb(194,196,197)"/><rect x="8" y="8" width="4" height="4" fill="rgb(227,229,230)"/><rect x="12" y="0" width="4" height="4" fill="rgb(217,219,220)"/><rect x="12" y="4" width="4" height="4" fill="rgb(199,201,202)"/><rect x="12" y="8" width="4" height="4" fill="rgb(228,230,231)"/><rect x="16" y="0" width="4" height="4" fill="rgb(185,187,188)"/><rect x="16" y="4" width="4" height="4" fill="rgb(180,182,183)"/><rect x="16" y="8" width="4" height="4" fill="rgb(211,213,214)"/><rect x="20" y="0" width="4" height="4" fill="rgb(184,186,187)"/><rect x="20" y="4" width="4" height="4" fill="rgb(179,181,182)"/><rect x="20" y="8" width="4" height="4" fill="rgb(221,223,224)"/><rect x="24" y="0" width="4" height="4" fill="rgb(215,217,218)"/><rect x="24" y="4" width="4" height="4" fill="rgb(215,217,218)"/><rect x="24" y="8" width="4" height="4" fill="rgb(212,214,215)"/><rect x="28" y="0" width="4" height="4" fill="rgb(207,209,210)"/><rect x="28" y="4" width="4" height="4" fill="rgb(196,198,199)"/><rect x="28" y="8" width="4" height="4" fill="rgb(217,219,220)"/><rect x="32" y="0" width="4" height="4" fill="rgb(229,231,232)"/><rect x="32" y="4" width="4" height="4" fill="rgb(227,229,230)"/><rect x="32" y="8" width="4" height="4" fill="rgb(227,229,230)"/><rect x="36" y="0" width="4" height="4" fill="rgb(206,208,209)"/><rect x="36" y="4" width="4" height="4" fill="rgb(199,201,202)"/><rect x="36" y="8" width="4" height="4" fill="rgb(211,213,214)"/><rect x="40" y="0" width="4" height="4" fill="rgb(193,195,196)"/><rect x="40" y="4" width="4" height="4" fill="rgb(187,189,190)"/><rect x="40" y="8" width="4" height="4" fill="rgb(228,230,231)"/><rect x="44" y="0" width="4" height="4" fill="rgb(172,174,175)"/><rect x="44" y="4" width="4" height="4" fill="rgb(182,184,185)"/><rect x="44" y="8" width="4" height="4" fill="rgb(227,229,230)"/><rect x="48" y="0" width="4" height="4" fill="rgb(210,212,213)"/><rect x="48" y="4" width="4" height="4" fill="rgb(179,181,182)"/><rect x="48" y="8" width="4" height="4" fill="rgb(222,224,225)"/><rect x="52" y="0" width="4" height="4" fill="rgb(193,195,196)"/><rect x="52" y="4" width="4" height="4" fill="rgb(181,183,184)"/><rect x="52" y="8" width="4" height="4" fill="rgb(213,215,216)"/><rect x="56" y="0" width="4" height="4" fill="rgb(188,190,191)"/><rect x="56" y="4" width="4" height="4" fill="rgb(190,192,193)"/><rect x="56" y="8" width="4" height="4" fill="rgb(227,229,230)"/><rect x="60" y="0" width="4" height="4" fill="rgb(216,218,219)"/><rect x="60" y="4" width="4" height="4" fill="rgb(191,193,194)"/><rect x="60" y="8" width="4" height="4" fill="rgb(209,211,212)"/><rect x="64" y="0" width="4" height="4" fill="rgb(232,234,235)"/><rect x="64" y="4" width="4" height="4" fill="rgb(224,226,227)"/><rect x="64" y="8" width="4" height="4" fill="rgb(227,229,230)"/><rect x="68" y="0" width="4" height="4" fill="rgb(185,187,188)"/><rect x="68" y="4" width="4" height="4" fill="rgb(214,216,217)"/><rect x="68" y="8" width="4" height="4" fill="rgb(210,212,213)"/><rect x="72" y="0" width="4" height="4" fill="rgb(222,224,225)"/><rect x="72" y="4" width="4" height="4" fill="rgb(183,185,186)"/><rect x="72" y="8" width="4" height="4" fill="rgb(215,217,218)"/><rect x="76" y="0" width="4" height="4" fill="rgb(195,197,198)"/><rect x="76" y="4" width="4" height="4" fill="rgb(180,182,183)"/><rect x="76" y="8" width="4" height="4" fill="rgb(215,217,218)"/><rect x="80" y="0" width="4" height="4" fill="rgb(192,194,195)"/><rect x="80" y="4" width="4" height="4" fill="rgb(224,226,227)"/><rect x="80" y="8" width="4" height="4" fill="rgb(210,212,213)"/></svg>
<div class="t " style="left:345.0px;top:416.2px;height:19.6px;line-height:19.6px;font-size:14px;color:#37464b;font-weight:normal;">665</div>
<svg class="b" style="left:541px;top:419px" width="16" height="13" viewBox="0 0 16 13"><rect x="0" y="0.0" width="3" height="3" rx="0.6" fill="#4596c5"/><rect x="5" y="0.3999999999999999" width="11" height="2.2" fill="#4596c5"/><rect x="0" y="5.0" width="3" height="3" rx="0.6" fill="#4596c5"/><rect x="5" y="5.4" width="11" height="2.2" fill="#4596c5"/><rect x="0" y="10.0" width="3" height="3" rx="0.6" fill="#4596c5"/><rect x="5" y="10.4" width="11" height="2.2" fill="#4596c5"/></svg>
<div class="b" style="left:66px;top:450px;width:258px;height:48px;background:#f4f6f6"></div>
<div class="b" style="left:324px;top:450px;width:250px;height:48px;background:#ffffff"></div>
<svg style="position:absolute;left:84px;top:468px;filter:blur(0.3px)" width="84" height="12"><rect x="0" y="0" width="4" height="4" fill="rgb(214,216,217)"/><rect x="0" y="4" width="4" height="4" fill="rgb(238,240,241)"/><rect x="0" y="8" width="4" height="4" fill="rgb(240,242,243)"/><rect x="4" y="0" width="4" height="4" fill="rgb(193,195,196)"/><rect x="4" y="4" width="4" height="4" fill="rgb(195,197,198)"/><rect x="4" y="8" width="4" height="4" fill="rgb(231,233,234)"/><rect x="8" y="0" width="4" height="4" fill="rgb(203,205,206)"/><rect x="8" y="4" width="4" height="4" fill="rgb(199,201,202)"/><rect x="8" y="8" width="4" height="4" fill="rgb(217,219,220)"/><rect x="12" y="0" width="4" height="4" fill="rgb(220,222,223)"/><rect x="12" y="4" width="4" height="4" fill="rgb(223,225,226)"/><rect x="12" y="8" width="4" height="4" fill="rgb(230,232,233)"/><rect x="16" y="0" width="4" height="4" fill="rgb(221,223,224)"/><rect x="16" y="4" width="4" height="4" fill="rgb(194,196,197)"/><rect x="16" y="8" width="4" height="4" fill="rgb(219,221,222)"/><rect x="20" y="0" width="4" height="4" fill="rgb(185,187,188)"/><rect x="20" y="4" width="4" height="4" fill="rgb(229,231,232)"/><rect x="20" y="8" width="4" height="4" fill="rgb(235,237,238)"/><rect x="24" y="0" width="4" height="4" fill="rgb(212,214,215)"/><rect x="24" y="4" width="4" height="4" fill="rgb(226,228,229)"/><rect x="24" y="8" width="4" height="4" fill="rgb(235,237,238)"/><rect x="28" y="0" width="4" height="4" fill="rgb(186,188,189)"/><rect x="28" y="4" width="4" height="4" fill="rgb(196,198,199)"/><rect x="28" y="8" width="4" height="4" fill="rgb(232,234,235)"/><rect x="32" y="0" width="4" height="4" fill="rgb(210,212,213)"/><rect x="32" y="4" width="4" height="4" fill="rgb(204,206,207)"/><rect x="32" y="8" width="4" height="4" fill="rgb(225,227,228)"/><rect x="36" y="0" width="4" height="4" fill="rgb(241,243,244)"/><rect x="36" y="4" width="4" height="4" fill="rgb(233,235,236)"/><rect x="36" y="8" width="4" height="4" fill="rgb(228,230,231)"/><rect x="40" y="0" width="4" height="4" fill="rgb(215,217,218)"/><rect x="40" y="4" width="4" height="4" fill="rgb(204,206,207)"/><rect x="40" y="8" width="4" height="4" fill="rgb(220,222,223)"/><rect x="44" y="0" width="4" height="4" fill="rgb(186,188,189)"/><rect x="44" y="4" width="4" height="4" fill="rgb(220,222,223)"/><rect x="44" y="8" width="4" height="4" fill="rgb(233,235,236)"/><rect x="48" y="0" width="4" height="4" fill="rgb(194,196,197)"/><rect x="48" y="4" width="4" height="4" fill="rgb(231,233,234)"/><rect x="48" y="8" width="4" height="4" fill="rgb(220,222,223)"/><rect x="52" y="0" width="4" height="4" fill="rgb(177,179,180)"/><rect x="52" y="4" width="4" height="4" fill="rgb(192,194,195)"/><rect x="52" y="8" width="4" height="4" fill="rgb(225,227,228)"/><rect x="56" y="0" width="4" height="4" fill="rgb(189,191,192)"/><rect x="56" y="4" width="4" height="4" fill="rgb(204,206,207)"/><rect x="56" y="8" width="4" height="4" fill="rgb(231,233,234)"/><rect x="60" y="0" width="4" height="4" fill="rgb(216,218,219)"/><rect x="60" y="4" width="4" height="4" fill="rgb(228,230,231)"/><rect x="60" y="8" width="4" height="4" fill="rgb(219,221,222)"/><rect x="64" y="0" width="4" height="4" fill="rgb(234,236,237)"/><rect x="64" y="4" width="4" height="4" fill="rgb(238,240,241)"/><rect x="64" y="8" width="4" height="4" fill="rgb(229,231,232)"/><rect x="68" y="0" width="4" height="4" fill="rgb(203,205,206)"/><rect x="68" y="4" width="4" height="4" fill="rgb(221,223,224)"/><rect x="68" y="8" width="4" height="4" fill="rgb(235,237,238)"/><rect x="72" y="0" width="4" height="4" fill="rgb(201,203,204)"/><rect x="72" y="4" width="4" height="4" fill="rgb(188,190,191)"/><rect x="72" y="8" width="4" height="4" fill="rgb(235,237,238)"/><rect x="76" y="0" width="4" height="4" fill="rgb(172,174,175)"/><rect x="76" y="4" width="4" height="4" fill="rgb(185,187,188)"/><rect x="76" y="8" width="4" height="4" fill="rgb(231,233,234)"/><rect x="80" y="0" width="4" height="4" fill="rgb(214,216,217)"/><rect x="80" y="4" width="4" height="4" fill="rgb(190,192,193)"/><rect x="80" y="8" width="4" height="4" fill="rgb(225,227,228)"/></svg>
<div class="t " style="left:345.0px;top:464.2px;height:19.6px;line-height:19.6px;font-size:14px;color:#37464b;font-weight:normal;">500</div>
<svg class="b" style="left:541px;top:467px" width="16" height="13" viewBox="0 0 16 13"><rect x="0" y="0.0" width="3" height="3" rx="0.6" fill="#4596c5"/><rect x="5" y="0.3999999999999999" width="11" height="2.2" fill="#4596c5"/><rect x="0" y="5.0" width="3" height="3" rx="0.6" fill="#4596c5"/><rect x="5" y="5.4" width="11" height="2.2" fill="#4596c5"/><rect x="0" y="10.0" width="3" height="3" rx="0.6" fill="#4596c5"/><rect x="5" y="10.4" width="11" height="2.2" fill="#4596c5"/></svg>
<div class="b" style="left:66px;top:498px;width:258px;height:48px;background:#eceeee"></div>
<div class="b" style="left:324px;top:498px;width:250px;height:48px;background:#f4f6f6"></div>
<svg style="position:absolute;left:84px;top:516px;filter:blur(0.3px)" width="92" height="12"><rect x="0" y="0" width="4" height="4" fill="rgb(209,211,212)"/><rect x="0" y="4" width="4" height="4" fill="rgb(230,232,233)"/><rect x="0" y="8" width="4" height="4" fill="rgb(232,234,235)"/><rect x="4" y="0" width="4" height="4" fill="rgb(198,200,201)"/><rect x="4" y="4" width="4" height="4" fill="rgb(184,186,187)"/><rect x="4" y="8" width="4" height="4" fill="rgb(216,218,219)"/><rect x="8" y="0" width="4" height="4" fill="rgb(186,188,189)"/><rect x="8" y="4" width="4" height="4" fill="rgb(213,215,216)"/><rect x="8" y="8" width="4" height="4" fill="rgb(228,230,231)"/><rect x="12" y="0" width="4" height="4" fill="rgb(213,215,216)"/><rect x="12" y="4" width="4" height="4" fill="rgb(188,190,191)"/><rect x="12" y="8" width="4" height="4" fill="rgb(211,213,214)"/><rect x="16" y="0" width="4" height="4" fill="rgb(208,210,211)"/><rect x="16" y="4" width="4" height="4" fill="rgb(180,182,183)"/><rect x="16" y="8" width="4" height="4" fill="rgb(228,230,231)"/><rect x="20" y="0" width="4" height="4" fill="rgb(187,189,190)"/><rect x="20" y="4" width="4" height="4" fill="rgb(189,191,192)"/><rect x="20" y="8" width="4" height="4" fill="rgb(210,212,213)"/><rect x="24" y="0" width="4" height="4" fill="rgb(230,232,233)"/><rect x="24" y="4" width="4" height="4" fill="rgb(231,233,234)"/><rect x="24" y="8" width="4" height="4" fill="rgb(222,224,225)"/><rect x="28" y="0" width="4" height="4" fill="rgb(174,176,177)"/><rect x="28" y="4" width="4" height="4" fill="rgb(190,192,193)"/><rect x="28" y="8" width="4" height="4" fill="rgb(221,223,224)"/><rect x="32" y="0" width="4" height="4" fill="rgb(179,181,182)"/><rect x="32" y="4" width="4" height="4" fill="rgb(188,190,191)"/><rect x="32" y="8" width="4" height="4" fill="rgb(210,212,213)"/><rect x="36" y="0" width="4" height="4" fill="rgb(215,217,218)"/><rect x="36" y="4" width="4" height="4" fill="rgb(199,201,202)"/><rect x="36" y="8" width="4" height="4" fill="rgb(225,227,228)"/><rect x="40" y="0" width="4" height="4" fill="rgb(172,174,175)"/><rect x="40" y="4" width="4" height="4" fill="rgb(196,198,199)"/><rect x="40" y="8" width="4" height="4" fill="rgb(219,221,222)"/><rect x="44" y="0" width="4" height="4" fill="rgb(193,195,196)"/><rect x="44" y="4" width="4" height="4" fill="rgb(186,188,189)"/><rect x="44" y="8" width="4" height="4" fill="rgb(222,224,225)"/><rect x="48" y="0" width="4" height="4" fill="rgb(225,227,228)"/><rect x="48" y="4" width="4" height="4" fill="rgb(232,234,235)"/><rect x="48" y="8" width="4" height="4" fill="rgb(222,224,225)"/><rect x="52" y="0" width="4" height="4" fill="rgb(190,192,193)"/><rect x="52" y="4" width="4" height="4" fill="rgb(199,201,202)"/><rect x="52" y="8" width="4" height="4" fill="rgb(211,213,214)"/><rect x="56" y="0" width="4" height="4" fill="rgb(187,189,190)"/><rect x="56" y="4" width="4" height="4" fill="rgb(185,187,188)"/><rect x="56" y="8" width="4" height="4" fill="rgb(220,222,223)"/><rect x="60" y="0" width="4" height="4" fill="rgb(208,210,211)"/><rect x="60" y="4" width="4" height="4" fill="rgb(185,187,188)"/><rect x="60" y="8" width="4" height="4" fill="rgb(209,211,212)"/><rect x="64" y="0" width="4" height="4" fill="rgb(190,192,193)"/><rect x="64" y="4" width="4" height="4" fill="rgb(190,192,193)"/><rect x="64" y="8" width="4" height="4" fill="rgb(212,214,215)"/><rect x="68" y="0" width="4" height="4" fill="rgb(208,210,211)"/><rect x="68" y="4" width="4" height="4" fill="rgb(178,180,181)"/><rect x="68" y="8" width="4" height="4" fill="rgb(210,212,213)"/><rect x="72" y="0" width="4" height="4" fill="rgb(176,178,179)"/><rect x="72" y="4" width="4" height="4" fill="rgb(192,194,195)"/><rect x="72" y="8" width="4" height="4" fill="rgb(211,213,214)"/><rect x="76" y="0" width="4" height="4" fill="rgb(207,209,210)"/><rect x="76" y="4" width="4" height="4" fill="rgb(191,193,194)"/><rect x="76" y="8" width="4" height="4" fill="rgb(220,222,223)"/><rect x="80" y="0" width="4" height="4" fill="rgb(183,185,186)"/><rect x="80" y="4" width="4" height="4" fill="rgb(178,180,181)"/><rect x="80" y="8" width="4" height="4" fill="rgb(213,215,216)"/><rect x="84" y="0" width="4" height="4" fill="rgb(230,232,233)"/><rect x="84" y="4" width="4" height="4" fill="rgb(227,229,230)"/><rect x="84" y="8" width="4" height="4" fill="rgb(220,222,223)"/><rect x="88" y="0" width="4" height="4" fill="rgb(205,207,208)"/><rect x="88" y="4" width="4" height="4" fill="rgb(215,217,218)"/><rect x="88" y="8" width="4" height="4" fill="rgb(213,215,216)"/></svg>
<div class="t " style="left:345.0px;top:512.2px;height:19.6px;line-height:19.6px;font-size:14px;color:#37464b;font-weight:normal;">440</div>
<svg class="b" style="left:541px;top:515px" width="16" height="13" viewBox="0 0 16 13"><rect x="0" y="0.0" width="3" height="3" rx="0.6" fill="#4596c5"/><rect x="5" y="0.3999999999999999" width="11" height="2.2" fill="#4596c5"/><rect x="0" y="5.0" width="3" height="3" rx="0.6" fill="#4596c5"/><rect x="5" y="5.4" width="11" height="2.2" fill="#4596c5"/><rect x="0" y="10.0" width="3" height="3" rx="0.6" fill="#4596c5"/><rect x="5" y="10.4" width="11" height="2.2" fill="#4596c5"/></svg>
<div class="b" style="left:66px;top:546px;width:258px;height:48px;background:#f4f6f6"></div>
<div class="b" style="left:324px;top:546px;width:250px;height:48px;background:#ffffff"></div>
<svg style="position:absolute;left:84px;top:564px;filter:blur(0.3px)" width="92" height="12"><rect x="0" y="0" width="4" height="4" fill="rgb(214,216,217)"/><rect x="0" y="4" width="4" height="4" fill="rgb(238,240,241)"/><rect x="0" y="8" width="4" height="4" fill="rgb(240,242,243)"/><rect x="4" y="0" width="4" height="4" fill="rgb(198,200,201)"/><rect x="4" y="4" width="4" height="4" fill="rgb(229,231,232)"/><rect x="4" y="8" width="4" height="4" fill="rgb(221,223,224)"/><rect x="8" y="0" width="4" height="4" fill="rgb(175,177,178)"/><rect x="8" y="4" width="4" height="4" fill="rgb(232,234,235)"/><rect x="8" y="8" width="4" height="4" fill="rgb(218,220,221)"/><rect x="12" y="0" width="4" height="4" fill="rgb(202,204,205)"/><rect x="12" y="4" width="4" height="4" fill="rgb(200,202,203)"/><rect x="12" y="8" width="4" height="4" fill="rgb(225,227,228)"/><rect x="16" y="0" width="4" height="4" fill="rgb(219,221,222)"/><rect x="16" y="4" width="4" height="4" fill="rgb(223,225,226)"/><rect x="16" y="8" width="4" height="4" fill="rgb(221,223,224)"/><rect x="20" y="0" width="4" height="4" fill="rgb(232,234,235)"/><rect x="20" y="4" width="4" height="4" fill="rgb(233,235,236)"/><rect x="20" y="8" width="4" height="4" fill="rgb(227,229,230)"/><rect x="24" y="0" width="4" height="4" fill="rgb(198,200,201)"/><rect x="24" y="4" width="4" height="4" fill="rgb(198,200,201)"/><rect x="24" y="8" width="4" height="4" fill="rgb(231,233,234)"/><rect x="28" y="0" width="4" height="4" fill="rgb(212,214,215)"/><rect x="28" y="4" width="4" height="4" fill="rgb(231,233,234)"/><rect x="28" y="8" width="4" height="4" fill="rgb(219,221,222)"/><rect x="32" y="0" width="4" height="4" fill="rgb(185,187,188)"/><rect x="32" y="4" width="4" height="4" fill="rgb(230,232,233)"/><rect x="32" y="8" width="4" height="4" fill="rgb(229,231,232)"/><rect x="36" y="0" width="4" height="4" fill="rgb(189,191,192)"/><rect x="36" y="4" width="4" height="4" fill="rgb(202,204,205)"/><rect x="36" y="8" width="4" height="4" fill="rgb(217,219,220)"/><rect x="40" y="0" width="4" height="4" fill="rgb(221,223,224)"/><rect x="40" y="4" width="4" height="4" fill="rgb(183,185,186)"/><rect x="40" y="8" width="4" height="4" fill="rgb(228,230,231)"/><rect x="44" y="0" width="4" height="4" fill="rgb(223,225,226)"/><rect x="44" y="4" width="4" height="4" fill="rgb(180,182,183)"/><rect x="44" y="8" width="4" height="4" fill="rgb(228,230,231)"/><rect x="48" y="0" width="4" height="4" fill="rgb(240,242,243)"/><rect x="48" y="4" width="4" height="4" fill="rgb(232,234,235)"/><rect x="48" y="8" width="4" height="4" fill="rgb(233,235,236)"/><rect x="52" y="0" width="4" height="4" fill="rgb(212,214,215)"/><rect x="52" y="4" width="4" height="4" fill="rgb(189,191,192)"/><rect x="52" y="8" width="4" height="4" fill="rgb(234,236,237)"/><rect x="56" y="0" width="4" height="4" fill="rgb(198,200,201)"/><rect x="56" y="4" width="4" height="4" fill="rgb(191,193,194)"/><rect x="56" y="8" width="4" height="4" fill="rgb(231,233,234)"/><rect x="60" y="0" width="4" height="4" fill="rgb(191,193,194)"/><rect x="60" y="4" width="4" height="4" fill="rgb(183,185,186)"/><rect x="60" y="8" width="4" height="4" fill="rgb(230,232,233)"/><rect x="64" y="0" width="4" height="4" fill="rgb(210,212,213)"/><rect x="64" y="4" width="4" height="4" fill="rgb(223,225,226)"/><rect x="64" y="8" width="4" height="4" fill="rgb(225,227,228)"/><rect x="68" y="0" width="4" height="4" fill="rgb(196,198,199)"/><rect x="68" y="4" width="4" height="4" fill="rgb(203,205,206)"/><rect x="68" y="8" width="4" height="4" fill="rgb(221,223,224)"/><rect x="72" y="0" width="4" height="4" fill="rgb(199,201,202)"/><rect x="72" y="4" width="4" height="4" fill="rgb(222,224,225)"/><rect x="72" y="8" width="4" height="4" fill="rgb(232,234,235)"/><rect x="76" y="0" width="4" height="4" fill="rgb(237,239,240)"/><rect x="76" y="8" width="4" height="4" fill="rgb(232,234,235)"/><rect x="80" y="0" width="4" height="4" fill="rgb(174,176,177)"/><rect x="80" y="4" width="4" height="4" fill="rgb(183,185,186)"/><rect x="80" y="8" width="4" height="4" fill="rgb(229,231,232)"/><rect x="84" y="0" width="4" height="4" fill="rgb(190,192,193)"/><rect x="84" y="4" width="4" height="4" fill="rgb(228,230,231)"/><rect x="84" y="8" width="4" height="4" fill="rgb(229,231,232)"/><rect x="88" y="0" width="4" height="4" fill="rgb(227,229,230)"/><rect x="88" y="4" width="4" height="4" fill="rgb(197,199,200)"/><rect x="88" y="8" width="4" height="4" fill="rgb(218,220,221)"/></svg>
<div class="t " style="left:345.0px;top:560.2px;height:19.6px;line-height:19.6px;font-size:14px;color:#37464b;font-weight:normal;">419</div>
<svg class="b" style="left:541px;top:563px" width="16" height="13" viewBox="0 0 16 13"><rect x="0" y="0.0" width="3" height="3" rx="0.6" fill="#4596c5"/><rect x="5" y="0.3999999999999999" width="11" height="2.2" fill="#4596c5"/><rect x="0" y="5.0" width="3" height="3" rx="0.6" fill="#4596c5"/><rect x="5" y="5.4" width="11" height="2.2" fill="#4596c5"/><rect x="0" y="10.0" width="3" height="3" rx="0.6" fill="#4596c5"/><rect x="5" y="10.4" width="11" height="2.2" fill="#4596c5"/></svg>
<div class="b" style="left:66px;top:594px;width:258px;height:48px;background:#eceeee"></div>
<div class="b" style="left:324px;top:594px;width:250px;height:48px;background:#f4f6f6"></div>
<svg style="position:absolute;left:84px;top:612px;filter:blur(0.3px)" width="84" height="12"><rect x="0" y="0" width="4" height="4" fill="rgb(209,211,212)"/><rect x="0" y="4" width="4" height="4" fill="rgb(230,232,233)"/><rect x="0" y="8" width="4" height="4" fill="rgb(232,234,235)"/><rect x="4" y="0" width="4" height="4" fill="rgb(182,184,185)"/><rect x="4" y="4" width="4" height="4" fill="rgb(226,228,229)"/><rect x="4" y="8" width="4" height="4" fill="rgb(224,226,227)"/><rect x="8" y="0" width="4" height="4" fill="rgb(185,187,188)"/><rect x="8" y="4" width="4" height="4" fill="rgb(190,192,193)"/><rect x="8" y="8" width="4" height="4" fill="rgb(215,217,218)"/><rect x="12" y="0" width="4" height="4" fill="rgb(217,219,220)"/><rect x="12" y="4" width="4" height="4" fill="rgb(180,182,183)"/><rect x="12" y="8" width="4" height="4" fill="rgb(210,212,213)"/><rect x="16" y="0" width="4" height="4" fill="rgb(185,187,188)"/><rect x="16" y="4" width="4" height="4" fill="rgb(213,215,216)"/><rect x="16" y="8" width="4" height="4" fill="rgb(213,215,216)"/><rect x="20" y="0" width="4" height="4" fill="rgb(211,213,214)"/><rect x="20" y="4" width="4" height="4" fill="rgb(195,197,198)"/><rect x="20" y="8" width="4" height="4" fill="rgb(226,228,229)"/><rect x="24" y="0" width="4" height="4" fill="rgb(205,207,208)"/><rect x="24" y="4" width="4" height="4" fill="rgb(180,182,183)"/><rect x="24" y="8" width="4" height="4" fill="rgb(211,213,214)"/><rect x="28" y="0" width="4" height="4" fill="rgb(172,174,175)"/><rect x="28" y="4" width="4" height="4" fill="rgb(219,221,222)"/><rect x="28" y="8" width="4" height="4" fill="rgb(218,220,221)"/><rect x="32" y="0" width="4" height="4" fill="rgb(227,229,230)"/><rect x="32" y="4" width="4" height="4" fill="rgb(231,233,234)"/><rect x="32" y="8" width="4" height="4" fill="rgb(229,231,232)"/><rect x="36" y="0" width="4" height="4" fill="rgb(209,211,212)"/><rect x="36" y="4" width="4" height="4" fill="rgb(179,181,182)"/><rect x="36" y="8" width="4" height="4" fill="rgb(214,216,217)"/><rect x="40" y="0" width="4" height="4" fill="rgb(178,180,181)"/><rect x="40" y="4" width="4" height="4" fill="rgb(224,226,227)"/><rect x="40" y="8" width="4" height="4" fill="rgb(220,222,223)"/><rect x="44" y="0" width="4" height="4" fill="rgb(179,181,182)"/><rect x="44" y="4" width="4" height="4" fill="rgb(184,186,187)"/><rect x="44" y="8" width="4" height="4" fill="rgb(215,217,218)"/><rect x="48" y="0" width="4" height="4" fill="rgb(181,183,184)"/><rect x="48" y="4" width="4" height="4" fill="rgb(218,220,221)"/><rect x="48" y="8" width="4" height="4" fill="rgb(227,229,230)"/><rect x="52" y="0" width="4" height="4" fill="rgb(212,214,215)"/><rect x="52" y="4" width="4" height="4" fill="rgb(222,224,225)"/><rect x="52" y="8" width="4" height="4" fill="rgb(216,218,219)"/><rect x="56" y="0" width="4" height="4" fill="rgb(184,186,187)"/><rect x="56" y="4" width="4" height="4" fill="rgb(184,186,187)"/><rect x="56" y="8" width="4" height="4" fill="rgb(219,221,222)"/><rect x="60" y="0" width="4" height="4" fill="rgb(194,196,197)"/><rect x="60" y="4" width="4" height="4" fill="rgb(185,187,188)"/><rect x="60" y="8" width="4" height="4" fill="rgb(222,224,225)"/><rect x="64" y="0" width="4" height="4" fill="rgb(191,193,194)"/><rect x="64" y="4" width="4" height="4" fill="rgb(187,189,190)"/><rect x="64" y="8" width="4" height="4" fill="rgb(224,226,227)"/><rect x="68" y="4" width="4" height="4" fill="rgb(231,233,234)"/><rect x="68" y="8" width="4" height="4" fill="rgb(229,231,232)"/><rect x="72" y="0" width="4" height="4" fill="rgb(185,187,188)"/><rect x="72" y="4" width="4" height="4" fill="rgb(189,191,192)"/><rect x="72" y="8" width="4" height="4" fill="rgb(221,223,224)"/><rect x="76" y="0" width="4" height="4" fill="rgb(184,186,187)"/><rect x="76" y="4" width="4" height="4" fill="rgb(219,221,222)"/><rect x="76" y="8" width="4" height="4" fill="rgb(211,213,214)"/><rect x="80" y="0" width="4" height="4" fill="rgb(182,184,185)"/><rect x="80" y="4" width="4" height="4" fill="rgb(190,192,193)"/><rect x="80" y="8" width="4" height="4" fill="rgb(216,218,219)"/></svg>
<div class="t " style="left:345.0px;top:608.2px;height:19.6px;line-height:19.6px;font-size:14px;color:#37464b;font-weight:normal;">400</div>
<svg class="b" style="left:541px;top:611px" width="16" height="13" viewBox="0 0 16 13"><rect x="0" y="0.0" width="3" height="3" rx="0.6" fill="#4596c5"/><rect x="5" y="0.3999999999999999" width="11" height="2.2" fill="#4596c5"/><rect x="0" y="5.0" width="3" height="3" rx="0.6" fill="#4596c5"/><rect x="5" y="5.4" width="11" height="2.2" fill="#4596c5"/><rect x="0" y="10.0" width="3" height="3" rx="0.6" fill="#4596c5"/><rect x="5" y="10.4" width="11" height="2.2" fill="#4596c5"/></svg>
<div class="b" style="left:66px;top:642px;width:258px;height:48px;background:#f4f6f6"></div>
<div class="b" style="left:324px;top:642px;width:250px;height:48px;background:#ffffff"></div>
<svg style="position:absolute;left:84px;top:660px;filter:blur(0.3px)" width="84" height="12"><rect x="0" y="0" width="4" height="4" fill="rgb(214,216,217)"/><rect x="0" y="4" width="4" height="4" fill="rgb(238,240,241)"/><rect x="0" y="8" width="4" height="4" fill="rgb(240,242,243)"/><rect x="4" y="0" width="4" height="4" fill="rgb(189,191,192)"/><rect x="4" y="4" width="4" height="4" fill="rgb(183,185,186)"/><rect x="4" y="8" width="4" height="4" fill="rgb(221,223,224)"/><rect x="8" y="0" width="4" height="4" fill="rgb(183,185,186)"/><rect x="8" y="4" width="4" height="4" fill="rgb(224,226,227)"/><rect x="8" y="8" width="4" height="4" fill="rgb(225,227,228)"/><rect x="12" y="0" width="4" height="4" fill="rgb(221,223,224)"/><rect x="12" y="4" width="4" height="4" fill="rgb(192,194,195)"/><rect x="12" y="8" width="4" height="4" fill="rgb(226,228,229)"/><rect x="16" y="0" width="4" height="4" fill="rgb(227,229,230)"/><rect x="16" y="4" width="4" height="4" fill="rgb(187,189,190)"/><rect x="16" y="8" width="4" height="4" fill="rgb(224,226,227)"/><rect x="20" y="0" width="4" height="4" fill="rgb(195,197,198)"/><rect x="20" y="4" width="4" height="4" fill="rgb(199,201,202)"/><rect x="20" y="8" width="4" height="4" fill="rgb(234,236,237)"/><rect x="24" y="0" width="4" height="4" fill="rgb(199,201,202)"/><rect x="24" y="4" width="4" height="4" fill="rgb(203,205,206)"/><rect x="24" y="8" width="4" height="4" fill="rgb(225,227,228)"/><rect x="28" y="0" width="4" height="4" fill="rgb(239,241,242)"/><rect x="28" y="4" width="4" height="4" fill="rgb(238,240,241)"/><rect x="28" y="8" width="4" height="4" fill="rgb(235,237,238)"/><rect x="32" y="0" width="4" height="4" fill="rgb(174,176,177)"/><rect x="32" y="4" width="4" height="4" fill="rgb(204,206,207)"/><rect x="32" y="8" width="4" height="4" fill="rgb(217,219,220)"/><rect x="36" y="0" width="4" height="4" fill="rgb(220,222,223)"/><rect x="36" y="4" width="4" height="4" fill="rgb(218,220,221)"/><rect x="36" y="8" width="4" height="4" fill="rgb(232,234,235)"/><rect x="40" y="0" width="4" height="4" fill="rgb(215,217,218)"/><rect x="40" y="4" width="4" height="4" fill="rgb(198,200,201)"/><rect x="40" y="8" width="4" height="4" fill="rgb(233,235,236)"/><rect x="44" y="0" width="4" height="4" fill="rgb(198,200,201)"/><rect x="44" y="4" width="4" height="4" fill="rgb(188,190,191)"/><rect x="44" y="8" width="4" height="4" fill="rgb(229,231,232)"/><rect x="48" y="0" width="4" height="4" fill="rgb(223,225,226)"/><rect x="48" y="4" width="4" height="4" fill="rgb(187,189,190)"/><rect x="48" y="8" width="4" height="4" fill="rgb(222,224,225)"/><rect x="52" y="0" width="4" height="4" fill="rgb(192,194,195)"/><rect x="52" y="4" width="4" height="4" fill="rgb(190,192,193)"/><rect x="52" y="8" width="4" height="4" fill="rgb(223,225,226)"/><rect x="56" y="0" width="4" height="4" fill="rgb(242,244,245)"/><rect x="56" y="4" width="4" height="4" fill="rgb(237,239,240)"/><rect x="56" y="8" width="4" height="4" fill="rgb(231,233,234)"/><rect x="60" y="0" width="4" height="4" fill="rgb(202,204,205)"/><rect x="60" y="4" width="4" height="4" fill="rgb(227,229,230)"/><rect x="60" y="8" width="4" height="4" fill="rgb(220,222,223)"/><rect x="64" y="0" width="4" height="4" fill="rgb(218,220,221)"/><rect x="64" y="4" width="4" height="4" fill="rgb(216,218,219)"/><rect x="64" y="8" width="4" height="4" fill="rgb(216,218,219)"/><rect x="68" y="0" width="4" height="4" fill="rgb(192,194,195)"/><rect x="68" y="4" width="4" height="4" fill="rgb(182,184,185)"/><rect x="68" y="8" width="4" height="4" fill="rgb(221,223,224)"/><rect x="72" y="0" width="4" height="4" fill="rgb(211,213,214)"/><rect x="72" y="4" width="4" height="4" fill="rgb(225,227,228)"/><rect x="72" y="8" width="4" height="4" fill="rgb(228,230,231)"/><rect x="76" y="0" width="4" height="4" fill="rgb(233,235,236)"/><rect x="76" y="4" width="4" height="4" fill="rgb(242,244,245)"/><rect x="76" y="8" width="4" height="4" fill="rgb(234,236,237)"/><rect x="80" y="0" width="4" height="4" fill="rgb(196,198,199)"/><rect x="80" y="4" width="4" height="4" fill="rgb(183,185,186)"/><rect x="80" y="8" width="4" height="4" fill="rgb(217,219,220)"/></svg>
<div class="t " style="left:345.0px;top:656.2px;height:19.6px;line-height:19.6px;font-size:14px;color:#37464b;font-weight:normal;">365</div>
<svg class="b" style="left:541px;top:659px" width="16" height="13" viewBox="0 0 16 13"><rect x="0" y="0.0" width="3" height="3" rx="0.6" fill="#4596c5"/><rect x="5" y="0.3999999999999999" width="11" height="2.2" fill="#4596c5"/><rect x="0" y="5.0" width="3" height="3" rx="0.6" fill="#4596c5"/><rect x="5" y="5.4" width="11" height="2.2" fill="#4596c5"/><rect x="0" y="10.0" width="3" height="3" rx="0.6" fill="#4596c5"/><rect x="5" y="10.4" width="11" height="2.2" fill="#4596c5"/></svg>
<div class="b" style="left:66px;top:690px;width:258px;height:48px;background:#eceeee"></div>
<div class="b" style="left:324px;top:690px;width:250px;height:48px;background:#f4f6f6"></div>
<svg style="position:absolute;left:84px;top:708px;filter:blur(0.3px)" width="84" height="12"><rect x="0" y="0" width="4" height="4" fill="rgb(209,211,212)"/><rect x="0" y="4" width="4" height="4" fill="rgb(230,232,233)"/><rect x="0" y="8" width="4" height="4" fill="rgb(232,234,235)"/><rect x="4" y="0" width="4" height="4" fill="rgb(184,186,187)"/><rect x="4" y="4" width="4" height="4" fill="rgb(226,228,229)"/><rect x="4" y="8" width="4" height="4" fill="rgb(215,217,218)"/><rect x="8" y="0" width="4" height="4" fill="rgb(195,197,198)"/><rect x="8" y="4" width="4" height="4" fill="rgb(216,218,219)"/><rect x="8" y="8" width="4" height="4" fill="rgb(217,219,220)"/><rect x="12" y="0" width="4" height="4" fill="rgb(185,187,188)"/><rect x="12" y="4" width="4" height="4" fill="rgb(199,201,202)"/><rect x="12" y="8" width="4" height="4" fill="rgb(210,212,213)"/><rect x="16" y="0" width="4" height="4" fill="rgb(212,214,215)"/><rect x="16" y="4" width="4" height="4" fill="rgb(187,189,190)"/><rect x="16" y="8" width="4" height="4" fill="rgb(224,226,227)"/><rect x="20" y="0" width="4" height="4" fill="rgb(191,193,194)"/><rect x="20" y="4" width="4" height="4" fill="rgb(191,193,194)"/><rect x="20" y="8" width="4" height="4" fill="rgb(213,215,216)"/><rect x="24" y="0" width="4" height="4" fill="rgb(187,189,190)"/><rect x="24" y="4" width="4" height="4" fill="rgb(193,195,196)"/><rect x="24" y="8" width="4" height="4" fill="rgb(216,218,219)"/><rect x="28" y="0" width="4" height="4" fill="rgb(221,223,224)"/><rect x="28" y="4" width="4" height="4" fill="rgb(183,185,186)"/><rect x="28" y="8" width="4" height="4" fill="rgb(226,228,229)"/><rect x="32" y="4" width="4" height="4" fill="rgb(223,225,226)"/><rect x="32" y="8" width="4" height="4" fill="rgb(222,224,225)"/><rect x="36" y="0" width="4" height="4" fill="rgb(195,197,198)"/><rect x="36" y="4" width="4" height="4" fill="rgb(181,183,184)"/><rect x="36" y="8" width="4" height="4" fill="rgb(223,225,226)"/><rect x="40" y="0" width="4" height="4" fill="rgb(181,183,184)"/><rect x="40" y="4" width="4" height="4" fill="rgb(220,222,223)"/><rect x="40" y="8" width="4" height="4" fill="rgb(211,213,214)"/><rect x="44" y="0" width="4" height="4" fill="rgb(185,187,188)"/><rect x="44" y="4" width="4" height="4" fill="rgb(188,190,191)"/><rect x="44" y="8" width="4" height="4" fill="rgb(221,223,224)"/><rect x="48" y="0" width="4" height="4" fill="rgb(184,186,187)"/><rect x="48" y="4" width="4" height="4" fill="rgb(223,225,226)"/><rect x="48" y="8" width="4" height="4" fill="rgb(214,216,217)"/><rect x="52" y="0" width="4" height="4" fill="rgb(189,191,192)"/><rect x="52" y="4" width="4" height="4" fill="rgb(187,189,190)"/><rect x="52" y="8" width="4" height="4" fill="rgb(223,225,226)"/><rect x="56" y="0" width="4" height="4" fill="rgb(229,231,232)"/><rect x="56" y="4" width="4" height="4" fill="rgb(225,227,228)"/><rect x="56" y="8" width="4" height="4" fill="rgb(224,226,227)"/><rect x="60" y="0" width="4" height="4" fill="rgb(188,190,191)"/><rect x="60" y="4" width="4" height="4" fill="rgb(190,192,193)"/><rect x="60" y="8" width="4" height="4" fill="rgb(212,214,215)"/><rect x="64" y="0" width="4" height="4" fill="rgb(197,199,200)"/><rect x="64" y="4" width="4" height="4" fill="rgb(190,192,193)"/><rect x="64" y="8" width="4" height="4" fill="rgb(209,211,212)"/><rect x="68" y="0" width="4" height="4" fill="rgb(198,200,201)"/><rect x="68" y="4" width="4" height="4" fill="rgb(181,183,184)"/><rect x="68" y="8" width="4" height="4" fill="rgb(221,223,224)"/><rect x="72" y="0" width="4" height="4" fill="rgb(172,174,175)"/><rect x="72" y="4" width="4" height="4" fill="rgb(196,198,199)"/><rect x="72" y="8" width="4" height="4" fill="rgb(214,216,217)"/><rect x="76" y="0" width="4" height="4" fill="rgb(190,192,193)"/><rect x="76" y="4" width="4" height="4" fill="rgb(183,185,186)"/><rect x="76" y="8" width="4" height="4" fill="rgb(222,224,225)"/><rect x="80" y="0" width="4" height="4" fill="rgb(195,197,198)"/><rect x="80" y="4" width="4" height="4" fill="rgb(181,183,184)"/><rect x="80" y="8" width="4" height="4" fill="rgb(212,214,215)"/></svg>
<div class="t " style="left:345.0px;top:704.2px;height:19.6px;line-height:19.6px;font-size:14px;color:#37464b;font-weight:normal;">280</div>
<svg class="b" style="left:541px;top:707px" width="16" height="13" viewBox="0 0 16 13"><rect x="0" y="0.0" width="3" height="3" rx="0.6" fill="#4596c5"/><rect x="5" y="0.3999999999999999" width="11" height="2.2" fill="#4596c5"/><rect x="0" y="5.0" width="3" height="3" rx="0.6" fill="#4596c5"/><rect x="5" y="5.4" width="11" height="2.2" fill="#4596c5"/><rect x="0" y="10.0" width="3" height="3" rx="0.6" fill="#4596c5"/><rect x="5" y="10.4" width="11" height="2.2" fill="#4596c5"/></svg>
<div class="b" style="left:66px;top:738px;width:258px;height:48px;background:#f4f6f6"></div>
<div class="b" style="left:324px;top:738px;width:250px;height:48px;background:#ffffff"></div>
<svg style="position:absolute;left:84px;top:756px;filter:blur(0.3px)" width="80" height="12"><rect x="0" y="0" width="4" height="4" fill="rgb(214,216,217)"/><rect x="0" y="4" width="4" height="4" fill="rgb(238,240,241)"/><rect x="0" y="8" width="4" height="4" fill="rgb(240,242,243)"/><rect x="4" y="0" width="4" height="4" fill="rgb(198,200,201)"/><rect x="4" y="4" width="4" height="4" fill="rgb(181,183,184)"/><rect x="4" y="8" width="4" height="4" fill="rgb(221,223,224)"/><rect x="8" y="0" width="4" height="4" fill="rgb(224,226,227)"/><rect x="8" y="4" width="4" height="4" fill="rgb(191,193,194)"/><rect x="8" y="8" width="4" height="4" fill="rgb(224,226,227)"/><rect x="12" y="0" width="4" height="4" fill="rgb(196,198,199)"/><rect x="12" y="4" width="4" height="4" fill="rgb(217,219,220)"/><rect x="12" y="8" width="4" height="4" fill="rgb(217,219,220)"/><rect x="16" y="0" width="4" height="4" fill="rgb(186,188,189)"/><rect x="16" y="4" width="4" height="4" fill="rgb(186,188,189)"/><rect x="16" y="8" width="4" height="4" fill="rgb(229,231,232)"/><rect x="20" y="0" width="4" height="4" fill="rgb(204,206,207)"/><rect x="20" y="4" width="4" height="4" fill="rgb(203,205,206)"/><rect x="20" y="8" width="4" height="4" fill="rgb(219,221,222)"/><rect x="24" y="0" width="4" height="4" fill="rgb(179,181,182)"/><rect x="24" y="4" width="4" height="4" fill="rgb(187,189,190)"/><rect x="24" y="8" width="4" height="4" fill="rgb(236,238,239)"/><rect x="28" y="0" width="4" height="4" fill="rgb(190,192,193)"/><rect x="28" y="4" width="4" height="4" fill="rgb(188,190,191)"/><rect x="28" y="8" width="4" height="4" fill="rgb(227,229,230)"/><rect x="32" y="8" width="4" height="4" fill="rgb(228,230,231)"/><rect x="36" y="0" width="4" height="4" fill="rgb(203,205,206)"/><rect x="36" y="4" width="4" height="4" fill="rgb(190,192,193)"/><rect x="36" y="8" width="4" height="4" fill="rgb(232,234,235)"/><rect x="40" y="0" width="4" height="4" fill="rgb(228,230,231)"/><rect x="40" y="4" width="4" height="4" fill="rgb(203,205,206)"/><rect x="40" y="8" width="4" height="4" fill="rgb(228,230,231)"/><rect x="44" y="0" width="4" height="4" fill="rgb(199,201,202)"/><rect x="44" y="4" width="4" height="4" fill="rgb(204,206,207)"/><rect x="44" y="8" width="4" height="4" fill="rgb(223,225,226)"/><rect x="48" y="0" width="4" height="4" fill="rgb(214,216,217)"/><rect x="48" y="4" width="4" height="4" fill="rgb(204,206,207)"/><rect x="48" y="8" width="4" height="4" fill="rgb(233,235,236)"/><rect x="52" y="0" width="4" height="4" fill="rgb(234,236,237)"/><rect x="52" y="4" width="4" height="4" fill="rgb(230,232,233)"/><rect x="52" y="8" width="4" height="4" fill="rgb(231,233,234)"/><rect x="56" y="0" width="4" height="4" fill="rgb(186,188,189)"/><rect x="56" y="4" width="4" height="4" fill="rgb(189,191,192)"/><rect x="56" y="8" width="4" height="4" fill="rgb(229,231,232)"/><rect x="60" y="0" width="4" height="4" fill="rgb(227,229,230)"/><rect x="60" y="4" width="4" height="4" fill="rgb(222,224,225)"/><rect x="60" y="8" width="4" height="4" fill="rgb(224,226,227)"/><rect x="64" y="0" width="4" height="4" fill="rgb(203,205,206)"/><rect x="64" y="4" width="4" height="4" fill="rgb(187,189,190)"/><rect x="64" y="8" width="4" height="4" fill="rgb(231,233,234)"/><rect x="68" y="0" width="4" height="4" fill="rgb(201,203,204)"/><rect x="68" y="4" width="4" height="4" fill="rgb(180,182,183)"/><rect x="68" y="8" width="4" height="4" fill="rgb(221,223,224)"/><rect x="72" y="0" width="4" height="4" fill="rgb(219,221,222)"/><rect x="72" y="4" width="4" height="4" fill="rgb(233,235,236)"/><rect x="72" y="8" width="4" height="4" fill="rgb(228,230,231)"/><rect x="76" y="0" width="4" height="4" fill="rgb(215,217,218)"/><rect x="76" y="4" width="4" height="4" fill="rgb(201,203,204)"/><rect x="76" y="8" width="4" height="4" fill="rgb(231,233,234)"/></svg>
<div class="t " style="left:345.0px;top:752.2px;height:19.6px;line-height:19.6px;font-size:14px;color:#37464b;font-weight:normal;">244</div>
<svg class="b" style="left:541px;top:755px" width="16" height="13" viewBox="0 0 16 13"><rect x="0" y="0.0" width="3" height="3" rx="0.6" fill="#4596c5"/><rect x="5" y="0.3999999999999999" width="11" height="2.2" fill="#4596c5"/><rect x="0" y="5.0" width="3" height="3" rx="0.6" fill="#4596c5"/><rect x="5" y="5.4" width="11" height="2.2" fill="#4596c5"/><rect x="0" y="10.0" width="3" height="3" rx="0.6" fill="#4596c5"/><rect x="5" y="10.4" width="11" height="2.2" fill="#4596c5"/></svg>
<div class="b" style="left:66px;top:786px;width:258px;height:48px;background:#eceeee"></div>
<div class="b" style="left:324px;top:786px;width:250px;height:48px;background:#f4f6f6"></div>
<svg style="position:absolute;left:84px;top:804px;filter:blur(0.3px)" width="68" height="12"><rect x="0" y="0" width="4" height="4" fill="rgb(209,211,212)"/><rect x="0" y="4" width="4" height="4" fill="rgb(230,232,233)"/><rect x="0" y="8" width="4" height="4" fill="rgb(232,234,235)"/><rect x="4" y="0" width="4" height="4" fill="rgb(197,199,200)"/><rect x="4" y="4" width="4" height="4" fill="rgb(191,193,194)"/><rect x="4" y="8" width="4" height="4" fill="rgb(216,218,219)"/><rect x="8" y="0" width="4" height="4" fill="rgb(184,186,187)"/><rect x="8" y="4" width="4" height="4" fill="rgb(197,199,200)"/><rect x="8" y="8" width="4" height="4" fill="rgb(217,219,220)"/><rect x="12" y="0" width="4" height="4" fill="rgb(199,201,202)"/><rect x="12" y="4" width="4" height="4" fill="rgb(180,182,183)"/><rect x="12" y="8" width="4" height="4" fill="rgb(224,226,227)"/><rect x="16" y="0" width="4" height="4" fill="rgb(173,175,176)"/><rect x="16" y="4" width="4" height="4" fill="rgb(220,222,223)"/><rect x="16" y="8" width="4" height="4" fill="rgb(225,227,228)"/><rect x="20" y="0" width="4" height="4" fill="rgb(231,233,234)"/><rect x="20" y="4" width="4" height="4" fill="rgb(230,232,233)"/><rect x="20" y="8" width="4" height="4" fill="rgb(231,233,234)"/><rect x="24" y="0" width="4" height="4" fill="rgb(214,216,217)"/><rect x="24" y="4" width="4" height="4" fill="rgb(194,196,197)"/><rect x="24" y="8" width="4" height="4" fill="rgb(223,225,226)"/><rect x="28" y="0" width="4" height="4" fill="rgb(187,189,190)"/><rect x="28" y="4" width="4" height="4" fill="rgb(181,183,184)"/><rect x="28" y="8" width="4" height="4" fill="rgb(221,223,224)"/><rect x="32" y="0" width="4" height="4" fill="rgb(181,183,184)"/><rect x="32" y="4" width="4" height="4" fill="rgb(212,214,215)"/><rect x="32" y="8" width="4" height="4" fill="rgb(213,215,216)"/><rect x="36" y="0" width="4" height="4" fill="rgb(191,193,194)"/><rect x="36" y="4" width="4" height="4" fill="rgb(184,186,187)"/><rect x="36" y="8" width="4" height="4" fill="rgb(224,226,227)"/><rect x="40" y="0" width="4" height="4" fill="rgb(186,188,189)"/><rect x="40" y="4" width="4" height="4" fill="rgb(178,180,181)"/><rect x="40" y="8" width="4" height="4" fill="rgb(215,217,218)"/><rect x="44" y="0" width="4" height="4" fill="rgb(198,200,201)"/><rect x="44" y="4" width="4" height="4" fill="rgb(189,191,192)"/><rect x="44" y="8" width="4" height="4" fill="rgb(226,228,229)"/><rect x="48" y="0" width="4" height="4" fill="rgb(196,198,199)"/><rect x="48" y="4" width="4" height="4" fill="rgb(184,186,187)"/><rect x="48" y="8" width="4" height="4" fill="rgb(222,224,225)"/><rect x="52" y="0" width="4" height="4" fill="rgb(192,194,195)"/><rect x="52" y="4" width="4" height="4" fill="rgb(198,200,201)"/><rect x="52" y="8" width="4" height="4" fill="rgb(221,223,224)"/><rect x="56" y="4" width="4" height="4" fill="rgb(227,229,230)"/><rect x="56" y="8" width="4" height="4" fill="rgb(226,228,229)"/><rect x="60" y="0" width="4" height="4" fill="rgb(195,197,198)"/><rect x="60" y="4" width="4" height="4" fill="rgb(185,187,188)"/><rect x="60" y="8" width="4" height="4" fill="rgb(219,221,222)"/><rect x="64" y="0" width="4" height="4" fill="rgb(210,212,213)"/><rect x="64" y="4" width="4" height="4" fill="rgb(192,194,195)"/><rect x="64" y="8" width="4" height="4" fill="rgb(222,224,225)"/></svg>
<div class="t " style="left:345.0px;top:800.2px;height:19.6px;line-height:19.6px;font-size:14px;color:#37464b;font-weight:normal;">88</div>
<svg class="b" style="left:541px;top:803px" width="16" height="13" viewBox="0 0 16 13"><rect x="0" y="0.0" width="3" height="3" rx="0.6" fill="#4596c5"/><rect x="5" y="0.3999999999999999" width="11" height="2.2" fill="#4596c5"/><rect x="0" y="5.0" width="3" height="3" rx="0.6" fill="#4596c5"/><rect x="5" y="5.4" width="11" height="2.2" fill="#4596c5"/><rect x="0" y="10.0" width="3" height="3" rx="0.6" fill="#4596c5"/><rect x="5" y="10.4" width="11" height="2.2" fill="#4596c5"/></svg>
<div class="b" style="left:66px;top:834px;width:258px;height:48px;background:#f4f6f6"></div>
<div class="b" style="left:324px;top:834px;width:250px;height:48px;background:#ffffff"></div>
<svg style="position:absolute;left:84px;top:852px;filter:blur(0.3px)" width="68" height="12"><rect x="0" y="0" width="4" height="4" fill="rgb(214,216,217)"/><rect x="0" y="4" width="4" height="4" fill="rgb(238,240,241)"/><rect x="0" y="8" width="4" height="4" fill="rgb(240,242,243)"/><rect x="4" y="0" width="4" height="4" fill="rgb(186,188,189)"/><rect x="4" y="4" width="4" height="4" fill="rgb(215,217,218)"/><rect x="4" y="8" width="4" height="4" fill="rgb(226,228,229)"/><rect x="8" y="0" width="4" height="4" fill="rgb(186,188,189)"/><rect x="8" y="4" width="4" height="4" fill="rgb(199,201,202)"/><rect x="8" y="8" width="4" height="4" fill="rgb(219,221,222)"/><rect x="12" y="0" width="4" height="4" fill="rgb(175,177,178)"/><rect x="12" y="4" width="4" height="4" fill="rgb(202,204,205)"/><rect x="12" y="8" width="4" height="4" fill="rgb(218,220,221)"/><rect x="16" y="0" width="4" height="4" fill="rgb(217,219,220)"/><rect x="16" y="4" width="4" height="4" fill="rgb(204,206,207)"/><rect x="16" y="8" width="4" height="4" fill="rgb(232,234,235)"/><rect x="20" y="0" width="4" height="4" fill="rgb(216,218,219)"/><rect x="20" y="4" width="4" height="4" fill="rgb(226,228,229)"/><rect x="20" y="8" width="4" height="4" fill="rgb(225,227,228)"/><rect x="24" y="0" width="4" height="4" fill="rgb(216,218,219)"/><rect x="24" y="4" width="4" height="4" fill="rgb(187,189,190)"/><rect x="24" y="8" width="4" height="4" fill="rgb(226,228,229)"/><rect x="28" y="0" width="4" height="4" fill="rgb(234,236,237)"/><rect x="28" y="4" width="4" height="4" fill="rgb(238,240,241)"/><rect x="28" y="8" width="4" height="4" fill="rgb(236,238,239)"/><rect x="32" y="0" width="4" height="4" fill="rgb(193,195,196)"/><rect x="32" y="4" width="4" height="4" fill="rgb(195,197,198)"/><rect x="32" y="8" width="4" height="4" fill="rgb(216,218,219)"/><rect x="36" y="0" width="4" height="4" fill="rgb(216,218,219)"/><rect x="36" y="4" width="4" height="4" fill="rgb(194,196,197)"/><rect x="36" y="8" width="4" height="4" fill="rgb(232,234,235)"/><rect x="40" y="0" width="4" height="4" fill="rgb(196,198,199)"/><rect x="40" y="4" width="4" height="4" fill="rgb(191,193,194)"/><rect x="40" y="8" width="4" height="4" fill="rgb(221,223,224)"/><rect x="44" y="0" width="4" height="4" fill="rgb(191,193,194)"/><rect x="44" y="4" width="4" height="4" fill="rgb(223,225,226)"/><rect x="44" y="8" width="4" height="4" fill="rgb(220,222,223)"/><rect x="48" y="0" width="4" height="4" fill="rgb(200,202,203)"/><rect x="48" y="4" width="4" height="4" fill="rgb(190,192,193)"/><rect x="48" y="8" width="4" height="4" fill="rgb(219,221,222)"/><rect x="52" y="0" width="4" height="4" fill="rgb(195,197,198)"/><rect x="52" y="4" width="4" height="4" fill="rgb(214,216,217)"/><rect x="52" y="8" width="4" height="4" fill="rgb(225,227,228)"/><rect x="56" y="0" width="4" height="4" fill="rgb(200,202,203)"/><rect x="56" y="4" width="4" height="4" fill="rgb(194,196,197)"/><rect x="56" y="8" width="4" height="4" fill="rgb(236,238,239)"/><rect x="60" y="0" width="4" height="4" fill="rgb(232,234,235)"/><rect x="60" y="4" width="4" height="4" fill="rgb(235,237,238)"/><rect x="60" y="8" width="4" height="4" fill="rgb(233,235,236)"/><rect x="64" y="0" width="4" height="4" fill="rgb(185,187,188)"/><rect x="64" y="4" width="4" height="4" fill="rgb(182,184,185)"/><rect x="64" y="8" width="4" height="4" fill="rgb(234,236,237)"/></svg>
<div class="t " style="left:345.0px;top:848.2px;height:19.6px;line-height:19.6px;font-size:14px;color:#37464b;font-weight:normal;">54</div>
<svg class="b" style="left:541px;top:851px" width="16" height="13" viewBox="0 0 16 13"><rect x="0" y="0.0" width="3" height="3" rx="0.6" fill="#4596c5"/><rect x="5" y="0.3999999999999999" width="11" height="2.2" fill="#4596c5"/><rect x="0" y="5.0" width="3" height="3" rx="0.6" fill="#4596c5"/><rect x="5" y="5.4" width="11" height="2.2" fill="#4596c5"/><rect x="0" y="10.0" width="3" height="3" rx="0.6" fill="#4596c5"/><rect x="5" y="10.4" width="11" height="2.2" fill="#4596c5"/></svg>
<div class="b" style="left:66px;top:882px;width:258px;height:48px;background:#eceeee"></div>
<div class="b" style="left:324px;top:882px;width:250px;height:48px;background:#f4f6f6"></div>
<svg style="position:absolute;left:84px;top:900px;filter:blur(0.3px)" width="92" height="12"><rect x="0" y="0" width="4" height="4" fill="rgb(209,211,212)"/><rect x="0" y="4" width="4" height="4" fill="rgb(230,232,233)"/><rect x="0" y="8" width="4" height="4" fill="rgb(232,234,235)"/><rect x="4" y="0" width="4" height="4" fill="rgb(199,201,202)"/><rect x="4" y="4" width="4" height="4" fill="rgb(209,211,212)"/><rect x="4" y="8" width="4" height="4" fill="rgb(227,229,230)"/><rect x="8" y="0" width="4" height="4" fill="rgb(196,198,199)"/><rect x="8" y="4" width="4" height="4" fill="rgb(214,216,217)"/><rect x="8" y="8" width="4" height="4" fill="rgb(211,213,214)"/><rect x="12" y="0" width="4" height="4" fill="rgb(187,189,190)"/><rect x="12" y="4" width="4" height="4" fill="rgb(182,184,185)"/><rect x="12" y="8" width="4" height="4" fill="rgb(209,211,212)"/><rect x="16" y="0" width="4" height="4" fill="rgb(189,191,192)"/><rect x="16" y="4" width="4" height="4" fill="rgb(194,196,197)"/><rect x="16" y="8" width="4" height="4" fill="rgb(226,228,229)"/><rect x="20" y="0" width="4" height="4" fill="rgb(220,222,223)"/><rect x="20" y="4" width="4" height="4" fill="rgb(222,224,225)"/><rect x="20" y="8" width="4" height="4" fill="rgb(219,221,222)"/><rect x="24" y="0" width="4" height="4" fill="rgb(192,194,195)"/><rect x="24" y="4" width="4" height="4" fill="rgb(186,188,189)"/><rect x="24" y="8" width="4" height="4" fill="rgb(220,222,223)"/><rect x="28" y="0" width="4" height="4" fill="rgb(185,187,188)"/><rect x="28" y="4" width="4" height="4" fill="rgb(216,218,219)"/><rect x="28" y="8" width="4" height="4" fill="rgb(221,223,224)"/><rect x="32" y="0" width="4" height="4" fill="rgb(227,229,230)"/><rect x="32" y="4" width="4" height="4" fill="rgb(229,231,232)"/><rect x="32" y="8" width="4" height="4" fill="rgb(229,231,232)"/><rect x="36" y="0" width="4" height="4" fill="rgb(193,195,196)"/><rect x="36" y="4" width="4" height="4" fill="rgb(213,215,216)"/><rect x="36" y="8" width="4" height="4" fill="rgb(225,227,228)"/><rect x="40" y="0" width="4" height="4" fill="rgb(196,198,199)"/><rect x="40" y="4" width="4" height="4" fill="rgb(177,179,180)"/><rect x="40" y="8" width="4" height="4" fill="rgb(223,225,226)"/><rect x="44" y="0" width="4" height="4" fill="rgb(185,187,188)"/><rect x="44" y="4" width="4" height="4" fill="rgb(177,179,180)"/><rect x="44" y="8" width="4" height="4" fill="rgb(209,211,212)"/><rect x="48" y="0" width="4" height="4" fill="rgb(185,187,188)"/><rect x="48" y="4" width="4" height="4" fill="rgb(187,189,190)"/><rect x="48" y="8" width="4" height="4" fill="rgb(211,213,214)"/><rect x="52" y="0" width="4" height="4" fill="rgb(214,216,217)"/><rect x="52" y="4" width="4" height="4" fill="rgb(193,195,196)"/><rect x="52" y="8" width="4" height="4" fill="rgb(225,227,228)"/><rect x="56" y="0" width="4" height="4" fill="rgb(234,236,237)"/><rect x="56" y="4" width="4" height="4" fill="rgb(234,236,237)"/><rect x="56" y="8" width="4" height="4" fill="rgb(227,229,230)"/><rect x="60" y="0" width="4" height="4" fill="rgb(188,190,191)"/><rect x="60" y="4" width="4" height="4" fill="rgb(191,193,194)"/><rect x="60" y="8" width="4" height="4" fill="rgb(214,216,217)"/><rect x="64" y="0" width="4" height="4" fill="rgb(192,194,195)"/><rect x="64" y="4" width="4" height="4" fill="rgb(187,189,190)"/><rect x="64" y="8" width="4" height="4" fill="rgb(217,219,220)"/><rect x="68" y="0" width="4" height="4" fill="rgb(198,200,201)"/><rect x="68" y="4" width="4" height="4" fill="rgb(188,190,191)"/><rect x="68" y="8" width="4" height="4" fill="rgb(217,219,220)"/><rect x="72" y="0" width="4" height="4" fill="rgb(189,191,192)"/><rect x="72" y="4" width="4" height="4" fill="rgb(223,225,226)"/><rect x="72" y="8" width="4" height="4" fill="rgb(221,223,224)"/><rect x="76" y="0" width="4" height="4" fill="rgb(214,216,217)"/><rect x="76" y="4" width="4" height="4" fill="rgb(221,223,224)"/><rect x="76" y="8" width="4" height="4" fill="rgb(213,215,216)"/><rect x="80" y="0" width="4" height="4" fill="rgb(214,216,217)"/><rect x="80" y="4" width="4" height="4" fill="rgb(199,201,202)"/><rect x="80" y="8" width="4" height="4" fill="rgb(224,226,227)"/><rect x="84" y="0" width="4" height="4" fill="rgb(225,227,228)"/><rect x="84" y="4" width="4" height="4" fill="rgb(227,229,230)"/><rect x="84" y="8" width="4" height="4" fill="rgb(223,225,226)"/><rect x="88" y="0" width="4" height="4" fill="rgb(194,196,197)"/><rect x="88" y="4" width="4" height="4" fill="rgb(189,191,192)"/><rect x="88" y="8" width="4" height="4" fill="rgb(220,222,223)"/></svg>
<div class="t " style="left:345.0px;top:896.2px;height:19.6px;line-height:19.6px;font-size:14px;color:#37464b;font-weight:normal;">52</div>
<svg class="b" style="left:541px;top:899px" width="16" height="13" viewBox="0 0 16 13"><rect x="0" y="0.0" width="3" height="3" rx="0.6" fill="#4596c5"/><rect x="5" y="0.3999999999999999" width="11" height="2.2" fill="#4596c5"/><rect x="0" y="5.0" width="3" height="3" rx="0.6" fill="#4596c5"/><rect x="5" y="5.4" width="11" height="2.2" fill="#4596c5"/><rect x="0" y="10.0" width="3" height="3" rx="0.6" fill="#4596c5"/><rect x="5" y="10.4" width="11" height="2.2" fill="#4596c5"/></svg>
<div class="b" style="left:66px;top:930px;width:258px;height:48px;background:#f4f6f6"></div>
<div class="b" style="left:324px;top:930px;width:250px;height:48px;background:#ffffff"></div>
<svg style="position:absolute;left:84px;top:948px;filter:blur(0.3px)" width="92" height="12"><rect x="0" y="0" width="4" height="4" fill="rgb(214,216,217)"/><rect x="0" y="4" width="4" height="4" fill="rgb(238,240,241)"/><rect x="0" y="8" width="4" height="4" fill="rgb(240,242,243)"/><rect x="4" y="0" width="4" height="4" fill="rgb(198,200,201)"/><rect x="4" y="4" width="4" height="4" fill="rgb(228,230,231)"/><rect x="4" y="8" width="4" height="4" fill="rgb(236,238,239)"/><rect x="8" y="0" width="4" height="4" fill="rgb(191,193,194)"/><rect x="8" y="4" width="4" height="4" fill="rgb(200,202,203)"/><rect x="8" y="8" width="4" height="4" fill="rgb(216,218,219)"/><rect x="12" y="0" width="4" height="4" fill="rgb(196,198,199)"/><rect x="12" y="4" width="4" height="4" fill="rgb(202,204,205)"/><rect x="12" y="8" width="4" height="4" fill="rgb(224,226,227)"/><rect x="16" y="0" width="4" height="4" fill="rgb(226,228,229)"/><rect x="16" y="4" width="4" height="4" fill="rgb(190,192,193)"/><rect x="16" y="8" width="4" height="4" fill="rgb(234,236,237)"/><rect x="20" y="0" width="4" height="4" fill="rgb(175,177,178)"/><rect x="20" y="4" width="4" height="4" fill="rgb(188,190,191)"/><rect x="20" y="8" width="4" height="4" fill="rgb(220,222,223)"/><rect x="24" y="0" width="4" height="4" fill="rgb(242,244,245)"/><rect x="24" y="4" width="4" height="4" fill="rgb(233,235,236)"/><rect x="24" y="8" width="4" height="4" fill="rgb(227,229,230)"/><rect x="28" y="0" width="4" height="4" fill="rgb(190,192,193)"/><rect x="28" y="4" width="4" height="4" fill="rgb(230,232,233)"/><rect x="28" y="8" width="4" height="4" fill="rgb(234,236,237)"/><rect x="32" y="0" width="4" height="4" fill="rgb(220,222,223)"/><rect x="32" y="4" width="4" height="4" fill="rgb(188,190,191)"/><rect x="32" y="8" width="4" height="4" fill="rgb(235,237,238)"/><rect x="36" y="0" width="4" height="4" fill="rgb(197,199,200)"/><rect x="36" y="4" width="4" height="4" fill="rgb(201,203,204)"/><rect x="36" y="8" width="4" height="4" fill="rgb(216,218,219)"/><rect x="40" y="0" width="4" height="4" fill="rgb(225,227,228)"/><rect x="40" y="4" width="4" height="4" fill="rgb(231,233,234)"/><rect x="40" y="8" width="4" height="4" fill="rgb(220,222,223)"/><rect x="44" y="0" width="4" height="4" fill="rgb(241,243,244)"/><rect x="44" y="4" width="4" height="4" fill="rgb(235,237,238)"/><rect x="44" y="8" width="4" height="4" fill="rgb(227,229,230)"/><rect x="48" y="0" width="4" height="4" fill="rgb(192,194,195)"/><rect x="48" y="4" width="4" height="4" fill="rgb(183,185,186)"/><rect x="48" y="8" width="4" height="4" fill="rgb(226,228,229)"/><rect x="52" y="0" width="4" height="4" fill="rgb(192,194,195)"/><rect x="52" y="4" width="4" height="4" fill="rgb(195,197,198)"/><rect x="52" y="8" width="4" height="4" fill="rgb(226,228,229)"/><rect x="56" y="0" width="4" height="4" fill="rgb(212,214,215)"/><rect x="56" y="4" width="4" height="4" fill="rgb(218,220,221)"/><rect x="56" y="8" width="4" height="4" fill="rgb(235,237,238)"/><rect x="60" y="0" width="4" height="4" fill="rgb(198,200,201)"/><rect x="60" y="4" width="4" height="4" fill="rgb(180,182,183)"/><rect x="60" y="8" width="4" height="4" fill="rgb(225,227,228)"/><rect x="64" y="0" width="4" height="4" fill="rgb(238,240,241)"/><rect x="64" y="4" width="4" height="4" fill="rgb(239,241,242)"/><rect x="64" y="8" width="4" height="4" fill="rgb(236,238,239)"/><rect x="68" y="0" width="4" height="4" fill="rgb(181,183,184)"/><rect x="68" y="4" width="4" height="4" fill="rgb(180,182,183)"/><rect x="68" y="8" width="4" height="4" fill="rgb(224,226,227)"/><rect x="72" y="0" width="4" height="4" fill="rgb(190,192,193)"/><rect x="72" y="4" width="4" height="4" fill="rgb(186,188,189)"/><rect x="72" y="8" width="4" height="4" fill="rgb(233,235,236)"/><rect x="76" y="0" width="4" height="4" fill="rgb(211,213,214)"/><rect x="76" y="4" width="4" height="4" fill="rgb(228,230,231)"/><rect x="76" y="8" width="4" height="4" fill="rgb(227,229,230)"/><rect x="80" y="0" width="4" height="4" fill="rgb(174,176,177)"/><rect x="80" y="4" width="4" height="4" fill="rgb(192,194,195)"/><rect x="80" y="8" width="4" height="4" fill="rgb(231,233,234)"/><rect x="84" y="0" width="4" height="4" fill="rgb(192,194,195)"/><rect x="84" y="4" width="4" height="4" fill="rgb(189,191,192)"/><rect x="84" y="8" width="4" height="4" fill="rgb(222,224,225)"/><rect x="88" y="0" width="4" height="4" fill="rgb(199,201,202)"/><rect x="88" y="4" width="4" height="4" fill="rgb(220,222,223)"/><rect x="88" y="8" width="4" height="4" fill="rgb(232,234,235)"/></svg>
<div class="t " style="left:345.0px;top:944.2px;height:19.6px;line-height:19.6px;font-size:14px;color:#37464b;font-weight:normal;">50</div>
<svg class="b" style="left:541px;top:947px" width="16" height="13" viewBox="0 0 16 13"><rect x="0" y="0.0" width="3" height="3" rx="0.6" fill="#4596c5"/><rect x="5" y="0.3999999999999999" width="11" height="2.2" fill="#4596c5"/><rect x="0" y="5.0" width="3" height="3" rx="0.6" fill="#4596c5"/><rect x="5" y="5.4" width="11" height="2.2" fill="#4596c5"/><rect x="0" y="10.0" width="3" height="3" rx="0.6" fill="#4596c5"/><rect x="5" y="10.4" width="11" height="2.2" fill="#4596c5"/></svg>
<div class="b" style="left:66px;top:978px;width:258px;height:48px;background:#eceeee"></div>
<div class="b" style="left:324px;top:978px;width:250px;height:48px;background:#f4f6f6"></div>
<svg style="position:absolute;left:84px;top:996px;filter:blur(0.3px)" width="84" height="12"><rect x="0" y="0" width="4" height="4" fill="rgb(209,211,212)"/><rect x="0" y="4" width="4" height="4" fill="rgb(230,232,233)"/><rect x="0" y="8" width="4" height="4" fill="rgb(232,234,235)"/><rect x="4" y="0" width="4" height="4" fill="rgb(190,192,193)"/><rect x="4" y="4" width="4" height="4" fill="rgb(182,184,185)"/><rect x="4" y="8" width="4" height="4" fill="rgb(228,230,231)"/><rect x="8" y="0" width="4" height="4" fill="rgb(193,195,196)"/><rect x="8" y="4" width="4" height="4" fill="rgb(185,187,188)"/><rect x="8" y="8" width="4" height="4" fill="rgb(225,227,228)"/><rect x="12" y="0" width="4" height="4" fill="rgb(169,171,172)"/><rect x="12" y="4" width="4" height="4" fill="rgb(180,182,183)"/><rect x="12" y="8" width="4" height="4" fill="rgb(223,225,226)"/><rect x="16" y="0" width="4" height="4" fill="rgb(211,213,214)"/><rect x="16" y="4" width="4" height="4" fill="rgb(178,180,181)"/><rect x="16" y="8" width="4" height="4" fill="rgb(214,216,217)"/><rect x="20" y="0" width="4" height="4" fill="rgb(191,193,194)"/><rect x="20" y="4" width="4" height="4" fill="rgb(191,193,194)"/><rect x="20" y="8" width="4" height="4" fill="rgb(223,225,226)"/><rect x="24" y="0" width="4" height="4" fill="rgb(180,182,183)"/><rect x="24" y="4" width="4" height="4" fill="rgb(196,198,199)"/><rect x="24" y="8" width="4" height="4" fill="rgb(219,221,222)"/><rect x="28" y="0" width="4" height="4" fill="rgb(185,187,188)"/><rect x="28" y="4" width="4" height="4" fill="rgb(182,184,185)"/><rect x="28" y="8" width="4" height="4" fill="rgb(212,214,215)"/><rect x="32" y="0" width="4" height="4" fill="rgb(234,236,237)"/><rect x="32" y="4" width="4" height="4" fill="rgb(231,233,234)"/><rect x="32" y="8" width="4" height="4" fill="rgb(228,230,231)"/><rect x="36" y="0" width="4" height="4" fill="rgb(183,185,186)"/><rect x="36" y="4" width="4" height="4" fill="rgb(178,180,181)"/><rect x="36" y="8" width="4" height="4" fill="rgb(218,220,221)"/><rect x="40" y="0" width="4" height="4" fill="rgb(175,177,178)"/><rect x="40" y="4" width="4" height="4" fill="rgb(178,180,181)"/><rect x="40" y="8" width="4" height="4" fill="rgb(222,224,225)"/><rect x="44" y="0" width="4" height="4" fill="rgb(187,189,190)"/><rect x="44" y="4" width="4" height="4" fill="rgb(196,198,199)"/><rect x="44" y="8" width="4" height="4" fill="rgb(223,225,226)"/><rect x="48" y="0" width="4" height="4" fill="rgb(186,188,189)"/><rect x="48" y="4" width="4" height="4" fill="rgb(179,181,182)"/><rect x="48" y="8" width="4" height="4" fill="rgb(213,215,216)"/><rect x="52" y="0" width="4" height="4" fill="rgb(185,187,188)"/><rect x="52" y="4" width="4" height="4" fill="rgb(188,190,191)"/><rect x="52" y="8" width="4" height="4" fill="rgb(226,228,229)"/><rect x="56" y="0" width="4" height="4" fill="rgb(215,217,218)"/><rect x="56" y="4" width="4" height="4" fill="rgb(226,228,229)"/><rect x="56" y="8" width="4" height="4" fill="rgb(224,226,227)"/><rect x="60" y="0" width="4" height="4" fill="rgb(231,233,234)"/><rect x="60" y="4" width="4" height="4" fill="rgb(224,226,227)"/><rect x="60" y="8" width="4" height="4" fill="rgb(230,232,233)"/><rect x="64" y="0" width="4" height="4" fill="rgb(210,212,213)"/><rect x="64" y="4" width="4" height="4" fill="rgb(211,213,214)"/><rect x="64" y="8" width="4" height="4" fill="rgb(219,221,222)"/><rect x="68" y="0" width="4" height="4" fill="rgb(206,208,209)"/><rect x="68" y="4" width="4" height="4" fill="rgb(198,200,201)"/><rect x="68" y="8" width="4" height="4" fill="rgb(227,229,230)"/><rect x="72" y="0" width="4" height="4" fill="rgb(189,191,192)"/><rect x="72" y="4" width="4" height="4" fill="rgb(184,186,187)"/><rect x="72" y="8" width="4" height="4" fill="rgb(215,217,218)"/><rect x="76" y="0" width="4" height="4" fill="rgb(190,192,193)"/><rect x="76" y="4" width="4" height="4" fill="rgb(184,186,187)"/><rect x="76" y="8" width="4" height="4" fill="rgb(221,223,224)"/><rect x="80" y="0" width="4" height="4" fill="rgb(211,213,214)"/><rect x="80" y="4" width="4" height="4" fill="rgb(223,225,226)"/><rect x="80" y="8" width="4" height="4" fill="rgb(221,223,224)"/></svg>
<div class="t " style="left:345.0px;top:992.2px;height:19.6px;line-height:19.6px;font-size:14px;color:#37464b;font-weight:normal;">36</div>
<svg class="b" style="left:541px;top:995px" width="16" height="13" viewBox="0 0 16 13"><rect x="0" y="0.0" width="3" height="3" rx="0.6" fill="#4596c5"/><rect x="5" y="0.3999999999999999" width="11" height="2.2" fill="#4596c5"/><rect x="0" y="5.0" width="3" height="3" rx="0.6" fill="#4596c5"/><rect x="5" y="5.4" width="11" height="2.2" fill="#4596c5"/><rect x="0" y="10.0" width="3" height="3" rx="0.6" fill="#4596c5"/><rect x="5" y="10.4" width="11" height="2.2" fill="#4596c5"/></svg>
<div class="b" style="left:66px;top:258px;width:508px;height:5px;background:linear-gradient(rgba(0,0,0,.08),rgba(0,0,0,0))"></div>
<div class="b" style="left:574px;top:210px;width:1px;height:840px;background:#c8cdd0"></div>
<div class="b" style="left:66px;top:997px;width:508px;height:5px;background:linear-gradient(rgba(0,0,0,0),rgba(0,0,0,.05))"></div>
<div class="b" style="left:66px;top:1002px;width:508px;height:48px;background:#fff"></div>
<div class="t " style="left:83.0px;top:1017.2px;height:19.6px;line-height:19.6px;font-size:14px;color:#37464b;font-weight:normal;letter-spacing:-0.35px">Feb 25 - Feb 26</div>
<svg style="position:absolute;left:184.95px;top:1018.45px" width="15.50" height="15.50" viewBox="0 0 16 16"><g fill="none" stroke="#4596c5" stroke-width="2.5"><path d="M1.6 7.2A6.5 6.5 0 0 1 12.8 3.8"/><path d="M14.4 8.8A6.5 6.5 0 0 1 3.2 12.2"/></g><path d="M16 0.8V7.4H9.4Z" fill="#4596c5"/><path d="M0 15.2V8.6H6.6Z" fill="#4596c5"/></svg>
<svg class="b" style="left:277.9px;top:1019.2px" width="9.2" height="13.5" viewBox="0 0 9.2 13.5"><path d="M6.2 3.0L3.0 6.8L6.2 10.5" fill="none" stroke="#b5babc" stroke-width="2" stroke-linecap="square" stroke-linejoin="miter"/></svg>
<svg class="b" style="left:316.9px;top:1019.2px" width="9.2" height="13.5" viewBox="0 0 9.2 13.5"><path d="M3.0 3.0L6.2 6.8L3.0 10.5" fill="none" stroke="#4596c5" stroke-width="2" stroke-linecap="square" stroke-linejoin="miter"/></svg>
<div class="b" style="left:292.5px;top:1014px;width:19px;height:24px;background:#b1b5b7;border-radius:3px"></div>
<div class="t " style="left:297.0px;top:1017.2px;height:19.6px;line-height:19.6px;font-size:14px;color:#fff;font-weight:normal;"><b>1</b></div>
<div class="t " style="left:399.0px;top:1017.2px;height:19.6px;line-height:19.6px;font-size:14px;color:#37464b;font-weight:normal;">1 to 25 of 124</div>
<div class="t " style="left:499.0px;top:1017.2px;height:19.6px;line-height:19.6px;font-size:14px;color:#4596c5;font-weight:normal;-webkit-text-stroke:0.3px #4596c5">25 p.p.</div>
<svg class="b" style="left:547.0px;top:1020.9px" width="14.0" height="10.2" viewBox="0 0 14.0 10.2"><path d="M3.2 3.2L7.0 7.0L10.8 3.2" fill="none" stroke="#4596c5" stroke-width="2.4" stroke-linecap="round" stroke-linejoin="round"/></svg>
<div class="b" style="left:575px;top:210px;width:807px;height:48px;background:#f8f8f8"></div>
<div class="b" style="left:575px;top:258px;width:807px;height:6px;background:linear-gradient(rgba(0,0,0,.08),rgba(0,0,0,0))"></div>
<div class="t " style="left:593.0px;top:222.8px;height:22.4px;line-height:22.4px;font-size:16px;color:#37464b;font-weight:normal;-webkit-text-stroke:0.35px #37464b">Summary: 9,174 Transactions in 124 New Client IP</div>
<div class="b" style="left:1274px;top:219px;width:92px;height:30px;background:#fff;border:1px solid #dcdfe0;border-radius:2px;box-sizing:border-box"></div>
<div class="t " style="left:1287.0px;top:225.2px;height:19.6px;line-height:19.6px;font-size:14px;color:#4596c5;font-weight:normal;-webkit-text-stroke:0.3px #4596c5">Actions</div>
<svg class="b" style="left:1343.0px;top:229.2px" width="14.0" height="10.2" viewBox="0 0 14.0 10.2"><path d="M3.2 3.2L7.0 7.0L10.8 3.2" fill="none" stroke="#4596c5" stroke-width="2.4" stroke-linecap="round" stroke-linejoin="round"/></svg>
<div class="b" style="left:593px;top:278px;width:773px;height:439px;background:#fff;border-radius:2px;box-shadow:0 1px 6px rgba(0,0,0,.13)"></div>
<div class="b" style="left:593px;top:278px;width:773px;height:40px;background:#f8f8f8;border-bottom:1px solid #e0e3e4;box-sizing:border-box"></div>
<div class="t " style="left:609.0px;top:285.8px;height:22.4px;line-height:22.4px;font-size:16px;color:#37464b;font-weight:normal;letter-spacing:-0.25px;-webkit-text-stroke:0.3px #37464b">Top Server IP</div>
<svg class="b" style="left:0;top:0" width="1920" height="1080"><path fill="#6fb486" d="M645.69 505.36A13.00 13.00 0 0 1 633.27 490.56A161.00 161.00 0 0 1 895.08 388.75A13.00 13.00 0 0 1 895.93 408.05L872.94 430.64A13.00 13.00 0 0 1 855.86 431.64A103.00 103.00 0 0 0 691.17 495.68A13.00 13.00 0 0 1 677.90 506.49Z"/><path fill="#4db694" d="M899.43 411.62A13.00 13.00 0 0 1 918.72 412.80A161.00 161.00 0 0 1 948.93 551.92A13.00 13.00 0 0 1 931.86 560.99L901.58 549.97A13.00 13.00 0 0 1 893.33 534.98A103.00 103.00 0 0 0 875.15 451.27A13.00 13.00 0 0 1 876.45 434.21Z"/><path fill="#40b1a6" d="M930.15 565.69A13.00 13.00 0 0 1 937.39 583.61A161.00 161.00 0 0 1 887.36 643.23A13.00 13.00 0 0 1 868.46 639.22L852.34 611.31A13.00 13.00 0 0 1 855.66 594.52A103.00 103.00 0 0 0 883.91 560.85A13.00 13.00 0 0 1 899.87 554.67Z"/><path fill="#42b3c1" d="M864.13 641.72A13.00 13.00 0 0 1 858.15 660.09A161.00 161.00 0 0 1 792.73 674.00A13.00 13.00 0 0 1 779.80 659.64L783.17 627.59A13.00 13.00 0 0 1 795.72 615.96A103.00 103.00 0 0 0 831.82 608.28A13.00 13.00 0 0 1 848.01 613.81Z"/><path fill="#55aecc" d="M774.83 659.12A13.00 13.00 0 0 1 759.19 670.47A161.00 161.00 0 0 1 717.14 655.17A13.00 13.00 0 0 1 712.47 636.42L730.49 609.70A13.00 13.00 0 0 1 747.03 605.32A103.00 103.00 0 0 0 768.34 613.08A13.00 13.00 0 0 1 778.20 627.07Z"/><path fill="#74a7d2" d="M708.32 633.62A13.00 13.00 0 0 1 689.19 636.31A161.00 161.00 0 0 1 674.97 622.83A13.00 13.00 0 0 1 676.66 603.58L702.39 584.18A13.00 13.00 0 0 1 719.46 585.42A103.00 103.00 0 0 0 724.21 589.93A13.00 13.00 0 0 1 726.34 606.91Z"/><path fill="#889fd5" d="M671.93 600.88A11.05 11.05 0 0 1 655.89 597.88A161.00 161.00 0 0 1 653.53 593.95A11.05 11.05 0 0 1 658.41 578.38L693.62 561.96A7.98 7.98 0 0 1 703.88 565.15A103.00 103.00 0 0 0 704.95 566.94A7.98 7.98 0 0 1 702.96 577.50Z"/><path fill="#9b98d4" d="M656.30 573.85A11.05 11.05 0 0 1 641.23 567.58A161.00 161.00 0 0 1 639.74 563.24A11.05 11.05 0 0 1 647.75 549.03L685.61 540.29A7.98 7.98 0 0 1 694.98 545.55A103.00 103.00 0 0 0 695.66 547.52A7.98 7.98 0 0 1 691.51 557.43Z"/><path fill="#a990cb" d="M643.39 544.90A7.98 7.98 0 0 1 633.71 538.38A161.00 161.00 0 0 1 633.65 537.99A7.98 7.98 0 0 1 640.84 528.80L685.68 524.87A4.90 4.90 0 0 1 690.95 529.00A103.00 103.00 0 0 0 690.99 529.23A4.90 4.90 0 0 1 687.25 534.78Z"/><path fill="#c27ab8" d="M639.13 523.93A6.79 6.79 0 0 1 631.76 517.35A161.00 161.00 0 0 1 631.75 517.08A6.79 6.79 0 0 1 638.77 510.13L686.31 511.79A3.54 3.54 0 0 1 689.72 515.25A103.00 103.00 0 0 0 689.75 516.14A3.54 3.54 0 0 1 686.52 519.78Z"/></svg>
<div class="t " style="left:1033.0px;top:351.2px;height:19.6px;line-height:19.6px;font-size:14px;color:#37464b;font-weight:normal;"><b style="letter-spacing:-0.3px">Server IP</b> (588)</div>
<div class="t" style="right:605.0px;top:351.2px;height:19.6px;line-height:19.6px;font-size:14px;color:#37464b;font-weight:normal;"><b style="letter-spacing:-0.4px">Transactions</b> (9,174)</div>
<div class="b" style="left:1006px;top:389.5px;width:15px;height:15px;background:#6fb486;border-radius:50%"></div>
<svg style="position:absolute;left:1032px;top:391px;filter:blur(0.3px)" width="84" height="12"><rect x="0" y="0" width="4" height="4" fill="rgb(222,224,225)"/><rect x="0" y="4" width="4" height="4" fill="rgb(248,250,251)"/><rect x="0" y="8" width="4" height="4" fill="rgb(250,252,253)"/><rect x="4" y="0" width="4" height="4" fill="rgb(176,178,179)"/><rect x="4" y="4" width="4" height="4" fill="rgb(228,230,231)"/><rect x="4" y="8" width="4" height="4" fill="rgb(225,227,228)"/><rect x="8" y="0" width="4" height="4" fill="rgb(202,204,205)"/><rect x="8" y="4" width="4" height="4" fill="rgb(187,189,190)"/><rect x="8" y="8" width="4" height="4" fill="rgb(226,228,229)"/><rect x="12" y="0" width="4" height="4" fill="rgb(234,236,237)"/><rect x="12" y="4" width="4" height="4" fill="rgb(187,189,190)"/><rect x="12" y="8" width="4" height="4" fill="rgb(241,243,244)"/><rect x="16" y="0" width="4" height="4" fill="rgb(195,197,198)"/><rect x="16" y="4" width="4" height="4" fill="rgb(189,191,192)"/><rect x="16" y="8" width="4" height="4" fill="rgb(223,225,226)"/><rect x="20" y="0" width="4" height="4" fill="rgb(197,199,200)"/><rect x="20" y="4" width="4" height="4" fill="rgb(190,192,193)"/><rect x="20" y="8" width="4" height="4" fill="rgb(231,233,234)"/><rect x="24" y="0" width="4" height="4" fill="rgb(175,177,178)"/><rect x="24" y="4" width="4" height="4" fill="rgb(208,210,211)"/><rect x="24" y="8" width="4" height="4" fill="rgb(222,224,225)"/><rect x="28" y="0" width="4" height="4" fill="rgb(197,199,200)"/><rect x="28" y="4" width="4" height="4" fill="rgb(201,203,204)"/><rect x="28" y="8" width="4" height="4" fill="rgb(228,230,231)"/><rect x="32" y="0" width="4" height="4" fill="rgb(199,201,202)"/><rect x="32" y="4" width="4" height="4" fill="rgb(208,210,211)"/><rect x="32" y="8" width="4" height="4" fill="rgb(223,225,226)"/><rect x="36" y="0" width="4" height="4" fill="rgb(251,253,254)"/><rect x="36" y="4" width="4" height="4" fill="rgb(240,242,243)"/><rect x="36" y="8" width="4" height="4" fill="rgb(246,248,249)"/><rect x="40" y="0" width="4" height="4" fill="rgb(199,201,202)"/><rect x="40" y="4" width="4" height="4" fill="rgb(191,193,194)"/><rect x="40" y="8" width="4" height="4" fill="rgb(233,235,236)"/><rect x="44" y="0" width="4" height="4" fill="rgb(221,223,224)"/><rect x="44" y="4" width="4" height="4" fill="rgb(238,240,241)"/><rect x="44" y="8" width="4" height="4" fill="rgb(222,224,225)"/><rect x="48" y="0" width="4" height="4" fill="rgb(191,193,194)"/><rect x="48" y="4" width="4" height="4" fill="rgb(196,198,199)"/><rect x="48" y="8" width="4" height="4" fill="rgb(234,236,237)"/><rect x="52" y="0" width="4" height="4" fill="rgb(191,193,194)"/><rect x="52" y="4" width="4" height="4" fill="rgb(202,204,205)"/><rect x="52" y="8" width="4" height="4" fill="rgb(223,225,226)"/><rect x="56" y="0" width="4" height="4" fill="rgb(246,248,249)"/><rect x="56" y="4" width="4" height="4" fill="rgb(240,242,243)"/><rect x="56" y="8" width="4" height="4" fill="rgb(243,245,246)"/><rect x="60" y="0" width="4" height="4" fill="rgb(200,202,203)"/><rect x="60" y="4" width="4" height="4" fill="rgb(198,200,201)"/><rect x="60" y="8" width="4" height="4" fill="rgb(226,228,229)"/><rect x="64" y="0" width="4" height="4" fill="rgb(195,197,198)"/><rect x="64" y="4" width="4" height="4" fill="rgb(205,207,208)"/><rect x="64" y="8" width="4" height="4" fill="rgb(231,233,234)"/><rect x="68" y="0" width="4" height="4" fill="rgb(227,229,230)"/><rect x="68" y="4" width="4" height="4" fill="rgb(227,229,230)"/><rect x="68" y="8" width="4" height="4" fill="rgb(245,247,248)"/><rect x="72" y="0" width="4" height="4" fill="rgb(192,194,195)"/><rect x="72" y="4" width="4" height="4" fill="rgb(194,196,197)"/><rect x="72" y="8" width="4" height="4" fill="rgb(235,237,238)"/><rect x="76" y="0" width="4" height="4" fill="rgb(220,222,223)"/><rect x="76" y="4" width="4" height="4" fill="rgb(228,230,231)"/><rect x="76" y="8" width="4" height="4" fill="rgb(238,240,241)"/><rect x="80" y="0" width="4" height="4" fill="rgb(231,233,234)"/><rect x="80" y="4" width="4" height="4" fill="rgb(224,226,227)"/><rect x="80" y="8" width="4" height="4" fill="rgb(235,237,238)"/></svg>
<div class="t" style="right:605.0px;top:388.2px;height:19.6px;line-height:19.6px;font-size:14px;color:#37464b;font-weight:normal;">740 <span style="color:#9aa3a6">(8.07%)</span></div>
<div class="b" style="left:1006px;top:415.5px;width:15px;height:15px;background:#4db694;border-radius:50%"></div>
<svg style="position:absolute;left:1032px;top:417px;filter:blur(0.3px)" width="80" height="12"><rect x="0" y="0" width="4" height="4" fill="rgb(222,224,225)"/><rect x="0" y="4" width="4" height="4" fill="rgb(248,250,251)"/><rect x="0" y="8" width="4" height="4" fill="rgb(250,252,253)"/><rect x="4" y="0" width="4" height="4" fill="rgb(190,192,193)"/><rect x="4" y="4" width="4" height="4" fill="rgb(189,191,192)"/><rect x="4" y="8" width="4" height="4" fill="rgb(235,237,238)"/><rect x="8" y="0" width="4" height="4" fill="rgb(230,232,233)"/><rect x="8" y="4" width="4" height="4" fill="rgb(211,213,214)"/><rect x="8" y="8" width="4" height="4" fill="rgb(234,236,237)"/><rect x="12" y="0" width="4" height="4" fill="rgb(183,185,186)"/><rect x="12" y="4" width="4" height="4" fill="rgb(208,210,211)"/><rect x="12" y="8" width="4" height="4" fill="rgb(228,230,231)"/><rect x="16" y="0" width="4" height="4" fill="rgb(237,239,240)"/><rect x="16" y="4" width="4" height="4" fill="rgb(207,209,210)"/><rect x="16" y="8" width="4" height="4" fill="rgb(245,247,248)"/><rect x="20" y="0" width="4" height="4" fill="rgb(199,201,202)"/><rect x="20" y="4" width="4" height="4" fill="rgb(210,212,213)"/><rect x="20" y="8" width="4" height="4" fill="rgb(245,247,248)"/><rect x="24" y="0" width="4" height="4" fill="rgb(207,209,210)"/><rect x="24" y="4" width="4" height="4" fill="rgb(197,199,200)"/><rect x="24" y="8" width="4" height="4" fill="rgb(244,246,247)"/><rect x="28" y="0" width="4" height="4" fill="rgb(232,234,235)"/><rect x="28" y="4" width="4" height="4" fill="rgb(233,235,236)"/><rect x="28" y="8" width="4" height="4" fill="rgb(233,235,236)"/><rect x="32" y="0" width="4" height="4" fill="rgb(194,196,197)"/><rect x="32" y="4" width="4" height="4" fill="rgb(198,200,201)"/><rect x="32" y="8" width="4" height="4" fill="rgb(227,229,230)"/><rect x="36" y="0" width="4" height="4" fill="rgb(247,249,250)"/><rect x="36" y="4" width="4" height="4" fill="rgb(246,248,249)"/><rect x="36" y="8" width="4" height="4" fill="rgb(236,238,239)"/><rect x="40" y="0" width="4" height="4" fill="rgb(202,204,205)"/><rect x="40" y="4" width="4" height="4" fill="rgb(189,191,192)"/><rect x="40" y="8" width="4" height="4" fill="rgb(241,243,244)"/><rect x="44" y="0" width="4" height="4" fill="rgb(173,175,176)"/><rect x="44" y="4" width="4" height="4" fill="rgb(207,209,210)"/><rect x="44" y="8" width="4" height="4" fill="rgb(225,227,228)"/><rect x="48" y="0" width="4" height="4" fill="rgb(206,208,209)"/><rect x="48" y="4" width="4" height="4" fill="rgb(234,236,237)"/><rect x="48" y="8" width="4" height="4" fill="rgb(238,240,241)"/><rect x="52" y="0" width="4" height="4" fill="rgb(232,234,235)"/><rect x="52" y="4" width="4" height="4" fill="rgb(238,240,241)"/><rect x="52" y="8" width="4" height="4" fill="rgb(233,235,236)"/><rect x="56" y="0" width="4" height="4" fill="rgb(181,183,184)"/><rect x="56" y="4" width="4" height="4" fill="rgb(195,197,198)"/><rect x="56" y="8" width="4" height="4" fill="rgb(223,225,226)"/><rect x="60" y="0" width="4" height="4" fill="rgb(221,223,224)"/><rect x="60" y="4" width="4" height="4" fill="rgb(234,236,237)"/><rect x="60" y="8" width="4" height="4" fill="rgb(241,243,244)"/><rect x="64" y="0" width="4" height="4" fill="rgb(190,192,193)"/><rect x="64" y="4" width="4" height="4" fill="rgb(206,208,209)"/><rect x="64" y="8" width="4" height="4" fill="rgb(229,231,232)"/><rect x="68" y="0" width="4" height="4" fill="rgb(231,233,234)"/><rect x="68" y="4" width="4" height="4" fill="rgb(197,199,200)"/><rect x="68" y="8" width="4" height="4" fill="rgb(224,226,227)"/><rect x="72" y="0" width="4" height="4" fill="rgb(243,245,246)"/><rect x="72" y="4" width="4" height="4" fill="rgb(238,240,241)"/><rect x="72" y="8" width="4" height="4" fill="rgb(239,241,242)"/><rect x="76" y="0" width="4" height="4" fill="rgb(236,238,239)"/><rect x="76" y="4" width="4" height="4" fill="rgb(210,212,213)"/><rect x="76" y="8" width="4" height="4" fill="rgb(234,236,237)"/></svg>
<div class="t" style="right:605.0px;top:414.2px;height:19.6px;line-height:19.6px;font-size:14px;color:#37464b;font-weight:normal;">700 <span style="color:#9aa3a6">(7.63%)</span></div>
<div class="b" style="left:1006px;top:441.5px;width:15px;height:15px;background:#40b1a6;border-radius:50%"></div>
<svg style="position:absolute;left:1032px;top:443px;filter:blur(0.3px)" width="68" height="12"><rect x="0" y="0" width="4" height="4" fill="rgb(222,224,225)"/><rect x="0" y="4" width="4" height="4" fill="rgb(248,250,251)"/><rect x="0" y="8" width="4" height="4" fill="rgb(250,252,253)"/><rect x="4" y="0" width="4" height="4" fill="rgb(234,236,237)"/><rect x="4" y="4" width="4" height="4" fill="rgb(223,225,226)"/><rect x="4" y="8" width="4" height="4" fill="rgb(236,238,239)"/><rect x="8" y="0" width="4" height="4" fill="rgb(196,198,199)"/><rect x="8" y="4" width="4" height="4" fill="rgb(197,199,200)"/><rect x="8" y="8" width="4" height="4" fill="rgb(235,237,238)"/><rect x="12" y="0" width="4" height="4" fill="rgb(202,204,205)"/><rect x="12" y="4" width="4" height="4" fill="rgb(230,232,233)"/><rect x="12" y="8" width="4" height="4" fill="rgb(224,226,227)"/><rect x="16" y="0" width="4" height="4" fill="rgb(194,196,197)"/><rect x="16" y="4" width="4" height="4" fill="rgb(191,193,194)"/><rect x="16" y="8" width="4" height="4" fill="rgb(243,245,246)"/><rect x="20" y="0" width="4" height="4" fill="rgb(222,224,225)"/><rect x="20" y="4" width="4" height="4" fill="rgb(184,186,187)"/><rect x="20" y="8" width="4" height="4" fill="rgb(230,232,233)"/><rect x="24" y="0" width="4" height="4" fill="rgb(198,200,201)"/><rect x="24" y="4" width="4" height="4" fill="rgb(242,244,245)"/><rect x="24" y="8" width="4" height="4" fill="rgb(244,246,247)"/><rect x="28" y="4" width="4" height="4" fill="rgb(247,249,250)"/><rect x="28" y="8" width="4" height="4" fill="rgb(242,244,245)"/><rect x="32" y="0" width="4" height="4" fill="rgb(200,202,203)"/><rect x="32" y="4" width="4" height="4" fill="rgb(206,208,209)"/><rect x="32" y="8" width="4" height="4" fill="rgb(228,230,231)"/><rect x="36" y="0" width="4" height="4" fill="rgb(233,235,236)"/><rect x="36" y="4" width="4" height="4" fill="rgb(235,237,238)"/><rect x="36" y="8" width="4" height="4" fill="rgb(229,231,232)"/><rect x="40" y="0" width="4" height="4" fill="rgb(203,205,206)"/><rect x="40" y="4" width="4" height="4" fill="rgb(207,209,210)"/><rect x="40" y="8" width="4" height="4" fill="rgb(238,240,241)"/><rect x="44" y="0" width="4" height="4" fill="rgb(185,187,188)"/><rect x="44" y="4" width="4" height="4" fill="rgb(226,228,229)"/><rect x="44" y="8" width="4" height="4" fill="rgb(230,232,233)"/><rect x="48" y="0" width="4" height="4" fill="rgb(242,244,245)"/><rect x="48" y="4" width="4" height="4" fill="rgb(245,247,248)"/><rect x="48" y="8" width="4" height="4" fill="rgb(237,239,240)"/><rect x="52" y="0" width="4" height="4" fill="rgb(197,199,200)"/><rect x="52" y="4" width="4" height="4" fill="rgb(186,188,189)"/><rect x="52" y="8" width="4" height="4" fill="rgb(240,242,243)"/><rect x="56" y="0" width="4" height="4" fill="rgb(210,212,213)"/><rect x="56" y="4" width="4" height="4" fill="rgb(239,241,242)"/><rect x="56" y="8" width="4" height="4" fill="rgb(238,240,241)"/><rect x="60" y="0" width="4" height="4" fill="rgb(194,196,197)"/><rect x="60" y="4" width="4" height="4" fill="rgb(207,209,210)"/><rect x="60" y="8" width="4" height="4" fill="rgb(231,233,234)"/><rect x="64" y="0" width="4" height="4" fill="rgb(192,194,195)"/><rect x="64" y="4" width="4" height="4" fill="rgb(201,203,204)"/><rect x="64" y="8" width="4" height="4" fill="rgb(226,228,229)"/></svg>
<div class="t" style="right:605.0px;top:440.2px;height:19.6px;line-height:19.6px;font-size:14px;color:#37464b;font-weight:normal;">680 <span style="color:#9aa3a6">(7.41%)</span></div>
<div class="b" style="left:1006px;top:467.5px;width:15px;height:15px;background:#42b3c1;border-radius:50%"></div>
<svg style="position:absolute;left:1032px;top:469px;filter:blur(0.3px)" width="84" height="12"><rect x="0" y="0" width="4" height="4" fill="rgb(222,224,225)"/><rect x="0" y="4" width="4" height="4" fill="rgb(248,250,251)"/><rect x="0" y="8" width="4" height="4" fill="rgb(250,252,253)"/><rect x="4" y="0" width="4" height="4" fill="rgb(195,197,198)"/><rect x="4" y="4" width="4" height="4" fill="rgb(197,199,200)"/><rect x="4" y="8" width="4" height="4" fill="rgb(238,240,241)"/><rect x="8" y="0" width="4" height="4" fill="rgb(179,181,182)"/><rect x="8" y="4" width="4" height="4" fill="rgb(202,204,205)"/><rect x="8" y="8" width="4" height="4" fill="rgb(233,235,236)"/><rect x="12" y="0" width="4" height="4" fill="rgb(209,211,212)"/><rect x="12" y="4" width="4" height="4" fill="rgb(239,241,242)"/><rect x="12" y="8" width="4" height="4" fill="rgb(244,246,247)"/><rect x="16" y="0" width="4" height="4" fill="rgb(191,193,194)"/><rect x="16" y="4" width="4" height="4" fill="rgb(199,201,202)"/><rect x="16" y="8" width="4" height="4" fill="rgb(242,244,245)"/><rect x="20" y="0" width="4" height="4" fill="rgb(190,192,193)"/><rect x="20" y="4" width="4" height="4" fill="rgb(208,210,211)"/><rect x="20" y="8" width="4" height="4" fill="rgb(238,240,241)"/><rect x="24" y="0" width="4" height="4" fill="rgb(244,246,247)"/><rect x="24" y="4" width="4" height="4" fill="rgb(243,245,246)"/><rect x="24" y="8" width="4" height="4" fill="rgb(244,246,247)"/><rect x="28" y="0" width="4" height="4" fill="rgb(197,199,200)"/><rect x="28" y="4" width="4" height="4" fill="rgb(210,212,213)"/><rect x="28" y="8" width="4" height="4" fill="rgb(228,230,231)"/><rect x="32" y="0" width="4" height="4" fill="rgb(195,197,198)"/><rect x="32" y="4" width="4" height="4" fill="rgb(237,239,240)"/><rect x="32" y="8" width="4" height="4" fill="rgb(230,232,233)"/><rect x="36" y="0" width="4" height="4" fill="rgb(198,200,201)"/><rect x="36" y="4" width="4" height="4" fill="rgb(208,210,211)"/><rect x="36" y="8" width="4" height="4" fill="rgb(243,245,246)"/><rect x="40" y="0" width="4" height="4" fill="rgb(174,176,177)"/><rect x="40" y="4" width="4" height="4" fill="rgb(184,186,187)"/><rect x="40" y="8" width="4" height="4" fill="rgb(240,242,243)"/><rect x="44" y="0" width="4" height="4" fill="rgb(231,233,234)"/><rect x="44" y="4" width="4" height="4" fill="rgb(207,209,210)"/><rect x="44" y="8" width="4" height="4" fill="rgb(238,240,241)"/><rect x="48" y="0" width="4" height="4" fill="rgb(190,192,193)"/><rect x="48" y="4" width="4" height="4" fill="rgb(210,212,213)"/><rect x="48" y="8" width="4" height="4" fill="rgb(242,244,245)"/><rect x="52" y="0" width="4" height="4" fill="rgb(183,185,186)"/><rect x="52" y="4" width="4" height="4" fill="rgb(210,212,213)"/><rect x="52" y="8" width="4" height="4" fill="rgb(235,237,238)"/><rect x="56" y="0" width="4" height="4" fill="rgb(208,210,211)"/><rect x="56" y="4" width="4" height="4" fill="rgb(195,197,198)"/><rect x="56" y="8" width="4" height="4" fill="rgb(236,238,239)"/><rect x="60" y="4" width="4" height="4" fill="rgb(240,242,243)"/><rect x="60" y="8" width="4" height="4" fill="rgb(247,249,250)"/><rect x="64" y="0" width="4" height="4" fill="rgb(209,211,212)"/><rect x="64" y="4" width="4" height="4" fill="rgb(191,193,194)"/><rect x="64" y="8" width="4" height="4" fill="rgb(230,232,233)"/><rect x="68" y="0" width="4" height="4" fill="rgb(195,197,198)"/><rect x="68" y="4" width="4" height="4" fill="rgb(197,199,200)"/><rect x="68" y="8" width="4" height="4" fill="rgb(234,236,237)"/><rect x="72" y="0" width="4" height="4" fill="rgb(199,201,202)"/><rect x="72" y="4" width="4" height="4" fill="rgb(189,191,192)"/><rect x="72" y="8" width="4" height="4" fill="rgb(244,246,247)"/><rect x="76" y="0" width="4" height="4" fill="rgb(194,196,197)"/><rect x="76" y="4" width="4" height="4" fill="rgb(196,198,199)"/><rect x="76" y="8" width="4" height="4" fill="rgb(240,242,243)"/><rect x="80" y="0" width="4" height="4" fill="rgb(201,203,204)"/><rect x="80" y="4" width="4" height="4" fill="rgb(198,200,201)"/><rect x="80" y="8" width="4" height="4" fill="rgb(228,230,231)"/></svg>
<div class="t" style="right:605.0px;top:466.2px;height:19.6px;line-height:19.6px;font-size:14px;color:#37464b;font-weight:normal;">665 <span style="color:#9aa3a6">(7.24%)</span></div>
<div class="b" style="left:1006px;top:493.5px;width:15px;height:15px;background:#55aecc;border-radius:50%"></div>
<svg style="position:absolute;left:1032px;top:495px;filter:blur(0.3px)" width="84" height="12"><rect x="0" y="0" width="4" height="4" fill="rgb(222,224,225)"/><rect x="0" y="4" width="4" height="4" fill="rgb(248,250,251)"/><rect x="0" y="8" width="4" height="4" fill="rgb(250,252,253)"/><rect x="4" y="0" width="4" height="4" fill="rgb(210,212,213)"/><rect x="4" y="4" width="4" height="4" fill="rgb(186,188,189)"/><rect x="4" y="8" width="4" height="4" fill="rgb(237,239,240)"/><rect x="8" y="0" width="4" height="4" fill="rgb(230,232,233)"/><rect x="8" y="4" width="4" height="4" fill="rgb(208,210,211)"/><rect x="8" y="8" width="4" height="4" fill="rgb(230,232,233)"/><rect x="12" y="0" width="4" height="4" fill="rgb(204,206,207)"/><rect x="12" y="4" width="4" height="4" fill="rgb(239,241,242)"/><rect x="12" y="8" width="4" height="4" fill="rgb(226,228,229)"/><rect x="16" y="0" width="4" height="4" fill="rgb(188,190,191)"/><rect x="16" y="4" width="4" height="4" fill="rgb(209,211,212)"/><rect x="16" y="8" width="4" height="4" fill="rgb(244,246,247)"/><rect x="20" y="0" width="4" height="4" fill="rgb(207,209,210)"/><rect x="20" y="4" width="4" height="4" fill="rgb(199,201,202)"/><rect x="20" y="8" width="4" height="4" fill="rgb(241,243,244)"/><rect x="24" y="0" width="4" height="4" fill="rgb(206,208,209)"/><rect x="24" y="4" width="4" height="4" fill="rgb(205,207,208)"/><rect x="24" y="8" width="4" height="4" fill="rgb(229,231,232)"/><rect x="28" y="0" width="4" height="4" fill="rgb(222,224,225)"/><rect x="28" y="4" width="4" height="4" fill="rgb(204,206,207)"/><rect x="28" y="8" width="4" height="4" fill="rgb(243,245,246)"/><rect x="32" y="0" width="4" height="4" fill="rgb(243,245,246)"/><rect x="32" y="4" width="4" height="4" fill="rgb(244,246,247)"/><rect x="32" y="8" width="4" height="4" fill="rgb(239,241,242)"/><rect x="36" y="0" width="4" height="4" fill="rgb(195,197,198)"/><rect x="36" y="4" width="4" height="4" fill="rgb(197,199,200)"/><rect x="36" y="8" width="4" height="4" fill="rgb(236,238,239)"/><rect x="40" y="0" width="4" height="4" fill="rgb(181,183,184)"/><rect x="40" y="4" width="4" height="4" fill="rgb(187,189,190)"/><rect x="40" y="8" width="4" height="4" fill="rgb(222,224,225)"/><rect x="44" y="0" width="4" height="4" fill="rgb(222,224,225)"/><rect x="44" y="4" width="4" height="4" fill="rgb(231,233,234)"/><rect x="44" y="8" width="4" height="4" fill="rgb(241,243,244)"/><rect x="48" y="0" width="4" height="4" fill="rgb(207,209,210)"/><rect x="48" y="4" width="4" height="4" fill="rgb(231,233,234)"/><rect x="48" y="8" width="4" height="4" fill="rgb(244,246,247)"/><rect x="52" y="0" width="4" height="4" fill="rgb(209,211,212)"/><rect x="52" y="4" width="4" height="4" fill="rgb(210,212,213)"/><rect x="52" y="8" width="4" height="4" fill="rgb(235,237,238)"/><rect x="56" y="0" width="4" height="4" fill="rgb(180,182,183)"/><rect x="56" y="4" width="4" height="4" fill="rgb(239,241,242)"/><rect x="56" y="8" width="4" height="4" fill="rgb(232,234,235)"/><rect x="60" y="0" width="4" height="4" fill="rgb(225,227,228)"/><rect x="60" y="4" width="4" height="4" fill="rgb(207,209,210)"/><rect x="60" y="8" width="4" height="4" fill="rgb(242,244,245)"/><rect x="64" y="0" width="4" height="4" fill="rgb(232,234,235)"/><rect x="64" y="4" width="4" height="4" fill="rgb(195,197,198)"/><rect x="64" y="8" width="4" height="4" fill="rgb(236,238,239)"/><rect x="68" y="0" width="4" height="4" fill="rgb(252,254,255)"/><rect x="68" y="4" width="4" height="4" fill="rgb(248,250,251)"/><rect x="68" y="8" width="4" height="4" fill="rgb(240,242,243)"/><rect x="72" y="0" width="4" height="4" fill="rgb(177,179,180)"/><rect x="72" y="4" width="4" height="4" fill="rgb(192,194,195)"/><rect x="72" y="8" width="4" height="4" fill="rgb(236,238,239)"/><rect x="76" y="0" width="4" height="4" fill="rgb(207,209,210)"/><rect x="76" y="4" width="4" height="4" fill="rgb(206,208,209)"/><rect x="76" y="8" width="4" height="4" fill="rgb(231,233,234)"/><rect x="80" y="0" width="4" height="4" fill="rgb(225,227,228)"/><rect x="80" y="4" width="4" height="4" fill="rgb(242,244,245)"/><rect x="80" y="8" width="4" height="4" fill="rgb(229,231,232)"/></svg>
<div class="t" style="right:605.0px;top:492.2px;height:19.6px;line-height:19.6px;font-size:14px;color:#37464b;font-weight:normal;">500 <span style="color:#9aa3a6">(5.45%)</span></div>
<div class="b" style="left:1006px;top:519.5px;width:15px;height:15px;background:#74a7d2;border-radius:50%"></div>
<svg style="position:absolute;left:1032px;top:521px;filter:blur(0.3px)" width="92" height="12"><rect x="0" y="0" width="4" height="4" fill="rgb(222,224,225)"/><rect x="0" y="4" width="4" height="4" fill="rgb(248,250,251)"/><rect x="0" y="8" width="4" height="4" fill="rgb(250,252,253)"/><rect x="4" y="0" width="4" height="4" fill="rgb(231,233,234)"/><rect x="4" y="4" width="4" height="4" fill="rgb(190,192,193)"/><rect x="4" y="8" width="4" height="4" fill="rgb(224,226,227)"/><rect x="8" y="0" width="4" height="4" fill="rgb(193,195,196)"/><rect x="8" y="4" width="4" height="4" fill="rgb(193,195,196)"/><rect x="8" y="8" width="4" height="4" fill="rgb(242,244,245)"/><rect x="12" y="0" width="4" height="4" fill="rgb(230,232,233)"/><rect x="12" y="4" width="4" height="4" fill="rgb(232,234,235)"/><rect x="12" y="8" width="4" height="4" fill="rgb(243,245,246)"/><rect x="16" y="0" width="4" height="4" fill="rgb(211,213,214)"/><rect x="16" y="4" width="4" height="4" fill="rgb(209,211,212)"/><rect x="16" y="8" width="4" height="4" fill="rgb(239,241,242)"/><rect x="20" y="4" width="4" height="4" fill="rgb(239,241,242)"/><rect x="20" y="8" width="4" height="4" fill="rgb(237,239,240)"/><rect x="24" y="0" width="4" height="4" fill="rgb(197,199,200)"/><rect x="24" y="4" width="4" height="4" fill="rgb(195,197,198)"/><rect x="24" y="8" width="4" height="4" fill="rgb(240,242,243)"/><rect x="28" y="0" width="4" height="4" fill="rgb(198,200,201)"/><rect x="28" y="4" width="4" height="4" fill="rgb(225,227,228)"/><rect x="28" y="8" width="4" height="4" fill="rgb(226,228,229)"/><rect x="32" y="0" width="4" height="4" fill="rgb(226,228,229)"/><rect x="32" y="4" width="4" height="4" fill="rgb(223,225,226)"/><rect x="32" y="8" width="4" height="4" fill="rgb(239,241,242)"/><rect x="36" y="0" width="4" height="4" fill="rgb(218,220,221)"/><rect x="36" y="4" width="4" height="4" fill="rgb(194,196,197)"/><rect x="36" y="8" width="4" height="4" fill="rgb(232,234,235)"/><rect x="40" y="0" width="4" height="4" fill="rgb(236,238,239)"/><rect x="40" y="4" width="4" height="4" fill="rgb(188,190,191)"/><rect x="40" y="8" width="4" height="4" fill="rgb(237,239,240)"/><rect x="44" y="0" width="4" height="4" fill="rgb(202,204,205)"/><rect x="44" y="4" width="4" height="4" fill="rgb(196,198,199)"/><rect x="44" y="8" width="4" height="4" fill="rgb(241,243,244)"/><rect x="48" y="0" width="4" height="4" fill="rgb(246,248,249)"/><rect x="48" y="4" width="4" height="4" fill="rgb(246,248,249)"/><rect x="48" y="8" width="4" height="4" fill="rgb(248,250,251)"/><rect x="52" y="0" width="4" height="4" fill="rgb(174,176,177)"/><rect x="52" y="4" width="4" height="4" fill="rgb(192,194,195)"/><rect x="52" y="8" width="4" height="4" fill="rgb(237,239,240)"/><rect x="56" y="0" width="4" height="4" fill="rgb(209,211,212)"/><rect x="56" y="4" width="4" height="4" fill="rgb(211,213,214)"/><rect x="56" y="8" width="4" height="4" fill="rgb(230,232,233)"/><rect x="60" y="0" width="4" height="4" fill="rgb(202,204,205)"/><rect x="60" y="4" width="4" height="4" fill="rgb(199,201,202)"/><rect x="60" y="8" width="4" height="4" fill="rgb(234,236,237)"/><rect x="64" y="0" width="4" height="4" fill="rgb(175,177,178)"/><rect x="64" y="4" width="4" height="4" fill="rgb(207,209,210)"/><rect x="64" y="8" width="4" height="4" fill="rgb(238,240,241)"/><rect x="68" y="4" width="4" height="4" fill="rgb(248,250,251)"/><rect x="68" y="8" width="4" height="4" fill="rgb(239,241,242)"/><rect x="72" y="0" width="4" height="4" fill="rgb(178,180,181)"/><rect x="72" y="4" width="4" height="4" fill="rgb(223,225,226)"/><rect x="72" y="8" width="4" height="4" fill="rgb(238,240,241)"/><rect x="76" y="0" width="4" height="4" fill="rgb(238,240,241)"/><rect x="76" y="4" width="4" height="4" fill="rgb(192,194,195)"/><rect x="76" y="8" width="4" height="4" fill="rgb(240,242,243)"/><rect x="80" y="0" width="4" height="4" fill="rgb(238,240,241)"/><rect x="80" y="4" width="4" height="4" fill="rgb(188,190,191)"/><rect x="80" y="8" width="4" height="4" fill="rgb(232,234,235)"/><rect x="84" y="0" width="4" height="4" fill="rgb(228,230,231)"/><rect x="84" y="4" width="4" height="4" fill="rgb(241,243,244)"/><rect x="84" y="8" width="4" height="4" fill="rgb(233,235,236)"/><rect x="88" y="0" width="4" height="4" fill="rgb(184,186,187)"/><rect x="88" y="4" width="4" height="4" fill="rgb(243,245,246)"/><rect x="88" y="8" width="4" height="4" fill="rgb(226,228,229)"/></svg>
<div class="t" style="right:605.0px;top:518.2px;height:19.6px;line-height:19.6px;font-size:14px;color:#37464b;font-weight:normal;">440 <span style="color:#9aa3a6">(4.79%)</span></div>
<div class="b" style="left:1006px;top:545.5px;width:15px;height:15px;background:#889fd5;border-radius:50%"></div>
<svg style="position:absolute;left:1032px;top:547px;filter:blur(0.3px)" width="92" height="12"><rect x="0" y="0" width="4" height="4" fill="rgb(222,224,225)"/><rect x="0" y="4" width="4" height="4" fill="rgb(248,250,251)"/><rect x="0" y="8" width="4" height="4" fill="rgb(250,252,253)"/><rect x="4" y="0" width="4" height="4" fill="rgb(193,195,196)"/><rect x="4" y="4" width="4" height="4" fill="rgb(202,204,205)"/><rect x="4" y="8" width="4" height="4" fill="rgb(239,241,242)"/><rect x="8" y="0" width="4" height="4" fill="rgb(209,211,212)"/><rect x="8" y="4" width="4" height="4" fill="rgb(186,188,189)"/><rect x="8" y="8" width="4" height="4" fill="rgb(243,245,246)"/><rect x="12" y="0" width="4" height="4" fill="rgb(233,235,236)"/><rect x="12" y="4" width="4" height="4" fill="rgb(207,209,210)"/><rect x="12" y="8" width="4" height="4" fill="rgb(234,236,237)"/><rect x="16" y="0" width="4" height="4" fill="rgb(176,178,179)"/><rect x="16" y="4" width="4" height="4" fill="rgb(223,225,226)"/><rect x="16" y="8" width="4" height="4" fill="rgb(246,248,249)"/><rect x="20" y="0" width="4" height="4" fill="rgb(199,201,202)"/><rect x="20" y="4" width="4" height="4" fill="rgb(210,212,213)"/><rect x="20" y="8" width="4" height="4" fill="rgb(241,243,244)"/><rect x="24" y="0" width="4" height="4" fill="rgb(182,184,185)"/><rect x="24" y="4" width="4" height="4" fill="rgb(201,203,204)"/><rect x="24" y="8" width="4" height="4" fill="rgb(237,239,240)"/><rect x="28" y="0" width="4" height="4" fill="rgb(207,209,210)"/><rect x="28" y="4" width="4" height="4" fill="rgb(205,207,208)"/><rect x="28" y="8" width="4" height="4" fill="rgb(235,237,238)"/><rect x="32" y="0" width="4" height="4" fill="rgb(226,228,229)"/><rect x="32" y="4" width="4" height="4" fill="rgb(186,188,189)"/><rect x="32" y="8" width="4" height="4" fill="rgb(243,245,246)"/><rect x="36" y="0" width="4" height="4" fill="rgb(250,252,253)"/><rect x="36" y="4" width="4" height="4" fill="rgb(251,253,254)"/><rect x="36" y="8" width="4" height="4" fill="rgb(248,250,251)"/><rect x="40" y="0" width="4" height="4" fill="rgb(210,212,213)"/><rect x="40" y="4" width="4" height="4" fill="rgb(197,199,200)"/><rect x="40" y="8" width="4" height="4" fill="rgb(227,229,230)"/><rect x="44" y="0" width="4" height="4" fill="rgb(217,219,220)"/><rect x="44" y="4" width="4" height="4" fill="rgb(211,213,214)"/><rect x="44" y="8" width="4" height="4" fill="rgb(245,247,248)"/><rect x="48" y="0" width="4" height="4" fill="rgb(195,197,198)"/><rect x="48" y="4" width="4" height="4" fill="rgb(184,186,187)"/><rect x="48" y="8" width="4" height="4" fill="rgb(239,241,242)"/><rect x="52" y="0" width="4" height="4" fill="rgb(201,203,204)"/><rect x="52" y="4" width="4" height="4" fill="rgb(233,235,236)"/><rect x="52" y="8" width="4" height="4" fill="rgb(229,231,232)"/><rect x="56" y="0" width="4" height="4" fill="rgb(200,202,203)"/><rect x="56" y="4" width="4" height="4" fill="rgb(210,212,213)"/><rect x="56" y="8" width="4" height="4" fill="rgb(233,235,236)"/><rect x="60" y="0" width="4" height="4" fill="rgb(210,212,213)"/><rect x="60" y="4" width="4" height="4" fill="rgb(193,195,196)"/><rect x="60" y="8" width="4" height="4" fill="rgb(244,246,247)"/><rect x="64" y="0" width="4" height="4" fill="rgb(242,244,245)"/><rect x="64" y="8" width="4" height="4" fill="rgb(239,241,242)"/><rect x="68" y="0" width="4" height="4" fill="rgb(185,187,188)"/><rect x="68" y="4" width="4" height="4" fill="rgb(199,201,202)"/><rect x="68" y="8" width="4" height="4" fill="rgb(245,247,248)"/><rect x="72" y="0" width="4" height="4" fill="rgb(225,227,228)"/><rect x="72" y="4" width="4" height="4" fill="rgb(201,203,204)"/><rect x="72" y="8" width="4" height="4" fill="rgb(230,232,233)"/><rect x="76" y="0" width="4" height="4" fill="rgb(233,235,236)"/><rect x="76" y="4" width="4" height="4" fill="rgb(222,224,225)"/><rect x="76" y="8" width="4" height="4" fill="rgb(241,243,244)"/><rect x="80" y="0" width="4" height="4" fill="rgb(197,199,200)"/><rect x="80" y="4" width="4" height="4" fill="rgb(237,239,240)"/><rect x="80" y="8" width="4" height="4" fill="rgb(239,241,242)"/><rect x="84" y="0" width="4" height="4" fill="rgb(205,207,208)"/><rect x="84" y="4" width="4" height="4" fill="rgb(204,206,207)"/><rect x="84" y="8" width="4" height="4" fill="rgb(229,231,232)"/><rect x="88" y="0" width="4" height="4" fill="rgb(183,185,186)"/><rect x="88" y="4" width="4" height="4" fill="rgb(192,194,195)"/><rect x="88" y="8" width="4" height="4" fill="rgb(230,232,233)"/></svg>
<div class="t" style="right:605.0px;top:544.2px;height:19.6px;line-height:19.6px;font-size:14px;color:#37464b;font-weight:normal;">419 <span style="color:#9aa3a6">(4.57%)</span></div>
<div class="b" style="left:1006px;top:571.5px;width:15px;height:15px;background:#9b98d4;border-radius:50%"></div>
<svg style="position:absolute;left:1032px;top:573px;filter:blur(0.3px)" width="84" height="12"><rect x="0" y="0" width="4" height="4" fill="rgb(222,224,225)"/><rect x="0" y="4" width="4" height="4" fill="rgb(248,250,251)"/><rect x="0" y="8" width="4" height="4" fill="rgb(250,252,253)"/><rect x="4" y="0" width="4" height="4" fill="rgb(232,234,235)"/><rect x="4" y="4" width="4" height="4" fill="rgb(210,212,213)"/><rect x="4" y="8" width="4" height="4" fill="rgb(230,232,233)"/><rect x="8" y="0" width="4" height="4" fill="rgb(219,221,222)"/><rect x="8" y="4" width="4" height="4" fill="rgb(230,232,233)"/><rect x="8" y="8" width="4" height="4" fill="rgb(246,248,249)"/><rect x="12" y="0" width="4" height="4" fill="rgb(235,237,238)"/><rect x="12" y="4" width="4" height="4" fill="rgb(205,207,208)"/><rect x="12" y="8" width="4" height="4" fill="rgb(237,239,240)"/><rect x="16" y="0" width="4" height="4" fill="rgb(200,202,203)"/><rect x="16" y="4" width="4" height="4" fill="rgb(236,238,239)"/><rect x="16" y="8" width="4" height="4" fill="rgb(244,246,247)"/><rect x="20" y="0" width="4" height="4" fill="rgb(199,201,202)"/><rect x="20" y="4" width="4" height="4" fill="rgb(191,193,194)"/><rect x="20" y="8" width="4" height="4" fill="rgb(222,224,225)"/><rect x="24" y="8" width="4" height="4" fill="rgb(239,241,242)"/><rect x="28" y="0" width="4" height="4" fill="rgb(196,198,199)"/><rect x="28" y="4" width="4" height="4" fill="rgb(197,199,200)"/><rect x="28" y="8" width="4" height="4" fill="rgb(235,237,238)"/><rect x="32" y="0" width="4" height="4" fill="rgb(185,187,188)"/><rect x="32" y="4" width="4" height="4" fill="rgb(204,206,207)"/><rect x="32" y="8" width="4" height="4" fill="rgb(233,235,236)"/><rect x="36" y="0" width="4" height="4" fill="rgb(197,199,200)"/><rect x="36" y="4" width="4" height="4" fill="rgb(198,200,201)"/><rect x="36" y="8" width="4" height="4" fill="rgb(237,239,240)"/><rect x="40" y="0" width="4" height="4" fill="rgb(226,228,229)"/><rect x="40" y="4" width="4" height="4" fill="rgb(242,244,245)"/><rect x="40" y="8" width="4" height="4" fill="rgb(233,235,236)"/><rect x="44" y="0" width="4" height="4" fill="rgb(197,199,200)"/><rect x="44" y="4" width="4" height="4" fill="rgb(242,244,245)"/><rect x="44" y="8" width="4" height="4" fill="rgb(236,238,239)"/><rect x="48" y="0" width="4" height="4" fill="rgb(246,248,249)"/><rect x="48" y="4" width="4" height="4" fill="rgb(246,248,249)"/><rect x="48" y="8" width="4" height="4" fill="rgb(246,248,249)"/><rect x="52" y="0" width="4" height="4" fill="rgb(202,204,205)"/><rect x="52" y="4" width="4" height="4" fill="rgb(231,233,234)"/><rect x="52" y="8" width="4" height="4" fill="rgb(229,231,232)"/><rect x="56" y="0" width="4" height="4" fill="rgb(178,180,181)"/><rect x="56" y="4" width="4" height="4" fill="rgb(193,195,196)"/><rect x="56" y="8" width="4" height="4" fill="rgb(229,231,232)"/><rect x="60" y="0" width="4" height="4" fill="rgb(190,192,193)"/><rect x="60" y="4" width="4" height="4" fill="rgb(185,187,188)"/><rect x="60" y="8" width="4" height="4" fill="rgb(226,228,229)"/><rect x="64" y="0" width="4" height="4" fill="rgb(200,202,203)"/><rect x="64" y="4" width="4" height="4" fill="rgb(205,207,208)"/><rect x="64" y="8" width="4" height="4" fill="rgb(244,246,247)"/><rect x="68" y="0" width="4" height="4" fill="rgb(242,244,245)"/><rect x="68" y="4" width="4" height="4" fill="rgb(239,241,242)"/><rect x="68" y="8" width="4" height="4" fill="rgb(238,240,241)"/><rect x="72" y="0" width="4" height="4" fill="rgb(199,201,202)"/><rect x="72" y="4" width="4" height="4" fill="rgb(234,236,237)"/><rect x="72" y="8" width="4" height="4" fill="rgb(242,244,245)"/><rect x="76" y="0" width="4" height="4" fill="rgb(191,193,194)"/><rect x="76" y="4" width="4" height="4" fill="rgb(187,189,190)"/><rect x="76" y="8" width="4" height="4" fill="rgb(242,244,245)"/><rect x="80" y="0" width="4" height="4" fill="rgb(205,207,208)"/><rect x="80" y="4" width="4" height="4" fill="rgb(242,244,245)"/><rect x="80" y="8" width="4" height="4" fill="rgb(227,229,230)"/></svg>
<div class="t" style="right:605.0px;top:570.2px;height:19.6px;line-height:19.6px;font-size:14px;color:#37464b;font-weight:normal;">400 <span style="color:#9aa3a6">(4.36%)</span></div>
<div class="b" style="left:1006px;top:597.5px;width:15px;height:15px;background:#a990cb;border-radius:50%"></div>
<svg style="position:absolute;left:1032px;top:599px;filter:blur(0.3px)" width="84" height="12"><rect x="0" y="0" width="4" height="4" fill="rgb(222,224,225)"/><rect x="0" y="4" width="4" height="4" fill="rgb(248,250,251)"/><rect x="0" y="8" width="4" height="4" fill="rgb(250,252,253)"/><rect x="4" y="0" width="4" height="4" fill="rgb(174,176,177)"/><rect x="4" y="4" width="4" height="4" fill="rgb(239,241,242)"/><rect x="4" y="8" width="4" height="4" fill="rgb(245,247,248)"/><rect x="8" y="0" width="4" height="4" fill="rgb(181,183,184)"/><rect x="8" y="4" width="4" height="4" fill="rgb(207,209,210)"/><rect x="8" y="8" width="4" height="4" fill="rgb(228,230,231)"/><rect x="12" y="0" width="4" height="4" fill="rgb(191,193,194)"/><rect x="12" y="4" width="4" height="4" fill="rgb(237,239,240)"/><rect x="12" y="8" width="4" height="4" fill="rgb(243,245,246)"/><rect x="16" y="0" width="4" height="4" fill="rgb(235,237,238)"/><rect x="16" y="4" width="4" height="4" fill="rgb(185,187,188)"/><rect x="16" y="8" width="4" height="4" fill="rgb(234,236,237)"/><rect x="20" y="0" width="4" height="4" fill="rgb(228,230,231)"/><rect x="20" y="4" width="4" height="4" fill="rgb(200,202,203)"/><rect x="20" y="8" width="4" height="4" fill="rgb(238,240,241)"/><rect x="24" y="0" width="4" height="4" fill="rgb(247,249,250)"/><rect x="24" y="4" width="4" height="4" fill="rgb(247,249,250)"/><rect x="24" y="8" width="4" height="4" fill="rgb(245,247,248)"/><rect x="28" y="0" width="4" height="4" fill="rgb(186,188,189)"/><rect x="28" y="4" width="4" height="4" fill="rgb(186,188,189)"/><rect x="28" y="8" width="4" height="4" fill="rgb(227,229,230)"/><rect x="32" y="0" width="4" height="4" fill="rgb(194,196,197)"/><rect x="32" y="4" width="4" height="4" fill="rgb(206,208,209)"/><rect x="32" y="8" width="4" height="4" fill="rgb(226,228,229)"/><rect x="36" y="0" width="4" height="4" fill="rgb(200,202,203)"/><rect x="36" y="4" width="4" height="4" fill="rgb(197,199,200)"/><rect x="36" y="8" width="4" height="4" fill="rgb(240,242,243)"/><rect x="40" y="0" width="4" height="4" fill="rgb(210,212,213)"/><rect x="40" y="4" width="4" height="4" fill="rgb(189,191,192)"/><rect x="40" y="8" width="4" height="4" fill="rgb(245,247,248)"/><rect x="44" y="0" width="4" height="4" fill="rgb(188,190,191)"/><rect x="44" y="4" width="4" height="4" fill="rgb(197,199,200)"/><rect x="44" y="8" width="4" height="4" fill="rgb(229,231,232)"/><rect x="48" y="0" width="4" height="4" fill="rgb(222,224,225)"/><rect x="48" y="4" width="4" height="4" fill="rgb(191,193,194)"/><rect x="48" y="8" width="4" height="4" fill="rgb(228,230,231)"/><rect x="52" y="0" width="4" height="4" fill="rgb(191,193,194)"/><rect x="52" y="4" width="4" height="4" fill="rgb(190,192,193)"/><rect x="52" y="8" width="4" height="4" fill="rgb(230,232,233)"/><rect x="56" y="0" width="4" height="4" fill="rgb(193,195,196)"/><rect x="56" y="4" width="4" height="4" fill="rgb(201,203,204)"/><rect x="56" y="8" width="4" height="4" fill="rgb(222,224,225)"/><rect x="60" y="0" width="4" height="4" fill="rgb(253,255,256)"/><rect x="60" y="4" width="4" height="4" fill="rgb(241,243,244)"/><rect x="60" y="8" width="4" height="4" fill="rgb(248,250,251)"/><rect x="64" y="0" width="4" height="4" fill="rgb(207,209,210)"/><rect x="64" y="4" width="4" height="4" fill="rgb(234,236,237)"/><rect x="64" y="8" width="4" height="4" fill="rgb(228,230,231)"/><rect x="68" y="0" width="4" height="4" fill="rgb(201,203,204)"/><rect x="68" y="4" width="4" height="4" fill="rgb(202,204,205)"/><rect x="68" y="8" width="4" height="4" fill="rgb(232,234,235)"/><rect x="72" y="0" width="4" height="4" fill="rgb(209,211,212)"/><rect x="72" y="4" width="4" height="4" fill="rgb(224,226,227)"/><rect x="72" y="8" width="4" height="4" fill="rgb(223,225,226)"/><rect x="76" y="0" width="4" height="4" fill="rgb(207,209,210)"/><rect x="76" y="4" width="4" height="4" fill="rgb(208,210,211)"/><rect x="76" y="8" width="4" height="4" fill="rgb(229,231,232)"/><rect x="80" y="0" width="4" height="4" fill="rgb(191,193,194)"/><rect x="80" y="4" width="4" height="4" fill="rgb(238,240,241)"/><rect x="80" y="8" width="4" height="4" fill="rgb(230,232,233)"/></svg>
<div class="t" style="right:605.0px;top:596.2px;height:19.6px;line-height:19.6px;font-size:14px;color:#37464b;font-weight:normal;">365 <span style="color:#9aa3a6">(3.98%)</span></div>
<div class="b" style="left:1006px;top:623.5px;width:15px;height:15px;background:#c27ab8;border-radius:50%"></div>
<svg style="position:absolute;left:1032px;top:625px;filter:blur(0.3px)" width="84" height="12"><rect x="0" y="0" width="4" height="4" fill="rgb(222,224,225)"/><rect x="0" y="4" width="4" height="4" fill="rgb(248,250,251)"/><rect x="0" y="8" width="4" height="4" fill="rgb(250,252,253)"/><rect x="4" y="0" width="4" height="4" fill="rgb(233,235,236)"/><rect x="4" y="4" width="4" height="4" fill="rgb(185,187,188)"/><rect x="4" y="8" width="4" height="4" fill="rgb(226,228,229)"/><rect x="8" y="0" width="4" height="4" fill="rgb(191,193,194)"/><rect x="8" y="4" width="4" height="4" fill="rgb(193,195,196)"/><rect x="8" y="8" width="4" height="4" fill="rgb(229,231,232)"/><rect x="12" y="0" width="4" height="4" fill="rgb(208,210,211)"/><rect x="12" y="4" width="4" height="4" fill="rgb(204,206,207)"/><rect x="12" y="8" width="4" height="4" fill="rgb(243,245,246)"/><rect x="16" y="0" width="4" height="4" fill="rgb(198,200,201)"/><rect x="16" y="4" width="4" height="4" fill="rgb(192,194,195)"/><rect x="16" y="8" width="4" height="4" fill="rgb(232,234,235)"/><rect x="20" y="0" width="4" height="4" fill="rgb(176,178,179)"/><rect x="20" y="4" width="4" height="4" fill="rgb(207,209,210)"/><rect x="20" y="8" width="4" height="4" fill="rgb(245,247,248)"/><rect x="24" y="0" width="4" height="4" fill="rgb(185,187,188)"/><rect x="24" y="4" width="4" height="4" fill="rgb(190,192,193)"/><rect x="24" y="8" width="4" height="4" fill="rgb(241,243,244)"/><rect x="28" y="4" width="4" height="4" fill="rgb(251,253,254)"/><rect x="28" y="8" width="4" height="4" fill="rgb(239,241,242)"/><rect x="32" y="0" width="4" height="4" fill="rgb(234,236,237)"/><rect x="32" y="4" width="4" height="4" fill="rgb(194,196,197)"/><rect x="32" y="8" width="4" height="4" fill="rgb(230,232,233)"/><rect x="36" y="0" width="4" height="4" fill="rgb(187,189,190)"/><rect x="36" y="4" width="4" height="4" fill="rgb(231,233,234)"/><rect x="36" y="8" width="4" height="4" fill="rgb(237,239,240)"/><rect x="40" y="0" width="4" height="4" fill="rgb(197,199,200)"/><rect x="40" y="4" width="4" height="4" fill="rgb(224,226,227)"/><rect x="40" y="8" width="4" height="4" fill="rgb(245,247,248)"/><rect x="44" y="0" width="4" height="4" fill="rgb(193,195,196)"/><rect x="44" y="4" width="4" height="4" fill="rgb(231,233,234)"/><rect x="44" y="8" width="4" height="4" fill="rgb(238,240,241)"/><rect x="48" y="0" width="4" height="4" fill="rgb(190,192,193)"/><rect x="48" y="4" width="4" height="4" fill="rgb(193,195,196)"/><rect x="48" y="8" width="4" height="4" fill="rgb(236,238,239)"/><rect x="52" y="0" width="4" height="4" fill="rgb(205,207,208)"/><rect x="52" y="4" width="4" height="4" fill="rgb(185,187,188)"/><rect x="52" y="8" width="4" height="4" fill="rgb(230,232,233)"/><rect x="56" y="0" width="4" height="4" fill="rgb(223,225,226)"/><rect x="56" y="4" width="4" height="4" fill="rgb(190,192,193)"/><rect x="56" y="8" width="4" height="4" fill="rgb(244,246,247)"/><rect x="60" y="0" width="4" height="4" fill="rgb(186,188,189)"/><rect x="60" y="4" width="4" height="4" fill="rgb(209,211,212)"/><rect x="60" y="8" width="4" height="4" fill="rgb(231,233,234)"/><rect x="64" y="0" width="4" height="4" fill="rgb(248,250,251)"/><rect x="64" y="4" width="4" height="4" fill="rgb(250,252,253)"/><rect x="64" y="8" width="4" height="4" fill="rgb(241,243,244)"/><rect x="68" y="0" width="4" height="4" fill="rgb(179,181,182)"/><rect x="68" y="4" width="4" height="4" fill="rgb(202,204,205)"/><rect x="68" y="8" width="4" height="4" fill="rgb(229,231,232)"/><rect x="72" y="0" width="4" height="4" fill="rgb(220,222,223)"/><rect x="72" y="4" width="4" height="4" fill="rgb(193,195,196)"/><rect x="72" y="8" width="4" height="4" fill="rgb(228,230,231)"/><rect x="76" y="0" width="4" height="4" fill="rgb(207,209,210)"/><rect x="76" y="4" width="4" height="4" fill="rgb(195,197,198)"/><rect x="76" y="8" width="4" height="4" fill="rgb(226,228,229)"/><rect x="80" y="0" width="4" height="4" fill="rgb(203,205,206)"/><rect x="80" y="4" width="4" height="4" fill="rgb(203,205,206)"/><rect x="80" y="8" width="4" height="4" fill="rgb(239,241,242)"/></svg>
<div class="t" style="right:605.0px;top:622.2px;height:19.6px;line-height:19.6px;font-size:14px;color:#37464b;font-weight:normal;">280 <span style="color:#9aa3a6">(3.05%)</span></div>
<div class="b" style="left:1006px;top:657.5px;width:15px;height:15px;background:#cfd2d3;border-radius:50%"></div>
<div class="t " style="left:1033.0px;top:656.2px;height:19.6px;line-height:19.6px;font-size:14px;color:#9aa3a6;font-weight:normal;">Other (578 more)</div>
<div class="t" style="right:605.0px;top:656.2px;height:19.6px;line-height:19.6px;font-size:14px;color:#9aa3a6;font-weight:normal;">4,265 (46.49%)</div>
<div class="b" style="left:1401px;top:114px;width:506px;height:936px;background:#dfe3e6;border-radius:2px;box-shadow:1px 1px 4px rgba(0,0,0,.22)"></div>
<div class="b" style="left:1401px;top:114px;width:506px;height:48px;background:#f8f8f8;border-radius:2px 2px 0 0"></div>
<div class="b" style="left:1401px;top:162px;width:506px;height:5px;background:linear-gradient(rgba(0,0,0,.07),rgba(0,0,0,0))"></div>
<div class="t " style="left:1422.0px;top:125.8px;height:22.4px;line-height:22.4px;font-size:16px;color:#37464b;font-weight:normal;letter-spacing:0.25px">Statistics</div>
<div class="b" style="left:1703px;top:123px;width:118px;height:30px;background:#fff;border:1px solid #dcdfe0;border-radius:2px;box-sizing:border-box"></div>
<svg class="b" style="left:1711px;top:129px" width="18" height="18" viewBox="0 0 18 18"><circle cx="9" cy="9" r="8.5" fill="#4596c5"/><path d="M9 4.5V13.5M4.5 9H13.5" stroke="#fff" stroke-width="2.6"/></svg>
<div class="t " style="left:1735.0px;top:128.2px;height:19.6px;line-height:19.6px;font-size:14px;color:#4596c5;font-weight:normal;-webkit-text-stroke:0.3px #4596c5">Add Widget</div>
<div class="b" style="left:1833px;top:123px;width:30px;height:30px;background:#e6edf2;border:1px solid #8cc0e0;border-radius:2px;box-sizing:border-box"></div>
<svg class="b" style="left:1839px;top:129px" width="18" height="18" viewBox="0 0 18 18"><path d="M8 2A7.5 7.5 0 1 0 15.5 9.5H8Z" fill="#4596c5"/><path d="M10 0.5A7.5 7.5 0 0 1 17.5 8H10Z" fill="#4596c5"/></svg>
<svg class="b" style="left:1873px;top:129px" width="18" height="18" viewBox="0 0 18 18"><path d="M1.5 1.5L17 17M17 1.5L1.5 17" stroke="#9aa1a4" stroke-width="3"/></svg>
<div class="b" style="left:1422px;top:180px;width:465px;height:265px;background:#fff;border-radius:2px;box-shadow:0 1px 6px rgba(0,0,0,.13)"></div>
<div class="b" style="left:1422px;top:180px;width:465px;height:37px;background:#f8f8f8;border-bottom:1px solid #e0e3e4;box-sizing:border-box"></div>
<div class="t " style="left:1439.0px;top:187.8px;height:22.4px;line-height:22.4px;font-size:16px;color:#37464b;font-weight:normal;letter-spacing:-0.4px;-webkit-text-stroke:0.3px #37464b">Server IP</div>
<svg class="b" style="left:0;top:0" width="1920" height="1080"><path fill="#6db48a" d="M1451.04 306.80A5.00 5.00 0 0 1 1446.07 301.28A67.60 67.60 0 0 1 1564.89 264.61A5.00 5.00 0 0 1 1563.89 271.97L1552.16 279.98A5.00 5.00 0 0 1 1545.63 279.19A43.50 43.50 0 0 0 1470.19 302.47A5.00 5.00 0 0 1 1465.24 306.80Z"/><path fill="#8bc49d" d="M1565.58 274.45A5.00 5.00 0 0 1 1572.80 276.21A67.60 67.60 0 0 1 1561.89 355.29A5.00 5.00 0 0 1 1554.47 355.03L1545.34 344.15A5.00 5.00 0 0 1 1545.47 337.57A43.50 43.50 0 0 0 1552.20 288.82A5.00 5.00 0 0 1 1553.85 282.45Z"/><path fill="#a6d1b7" d="M1552.17 356.96A5.00 5.00 0 0 1 1551.14 364.32A67.60 67.60 0 0 1 1494.17 373.14A5.00 5.00 0 0 1 1490.96 366.44L1496.37 353.31A5.00 5.00 0 0 1 1502.26 350.38A43.50 43.50 0 0 0 1536.54 345.07A5.00 5.00 0 0 1 1543.04 346.08Z"/><path fill="#c5e2d0" d="M1488.19 365.29A5.00 5.00 0 0 1 1481.19 367.79A67.60 67.60 0 0 1 1458.44 347.80A5.00 5.00 0 0 1 1460.02 340.54L1472.34 333.49A5.00 5.00 0 0 1 1478.79 334.78A43.50 43.50 0 0 0 1491.48 345.93A5.00 5.00 0 0 1 1493.60 352.16Z"/><path fill="#e1efe6" d="M1458.53 337.94A5.00 5.00 0 0 1 1451.47 335.62A67.60 67.60 0 0 1 1446.07 315.32A5.00 5.00 0 0 1 1451.04 309.80L1465.24 309.80A5.00 5.00 0 0 1 1470.19 314.13A43.50 43.50 0 0 0 1473.00 324.66A5.00 5.00 0 0 1 1470.85 330.88Z"/></svg>
<div class="b" style="left:1621px;top:250.5px;width:15px;height:15px;background:#6db48a;border-radius:50%"></div>
<svg style="position:absolute;left:1648px;top:252px;filter:blur(0.3px)" width="84" height="12"><rect x="0" y="0" width="4" height="4" fill="rgb(222,224,225)"/><rect x="0" y="4" width="4" height="4" fill="rgb(248,250,251)"/><rect x="0" y="8" width="4" height="4" fill="rgb(250,252,253)"/><rect x="4" y="0" width="4" height="4" fill="rgb(217,219,220)"/><rect x="4" y="4" width="4" height="4" fill="rgb(207,209,210)"/><rect x="4" y="8" width="4" height="4" fill="rgb(223,225,226)"/><rect x="8" y="0" width="4" height="4" fill="rgb(188,190,191)"/><rect x="8" y="4" width="4" height="4" fill="rgb(230,232,233)"/><rect x="8" y="8" width="4" height="4" fill="rgb(226,228,229)"/><rect x="12" y="0" width="4" height="4" fill="rgb(178,180,181)"/><rect x="12" y="4" width="4" height="4" fill="rgb(196,198,199)"/><rect x="12" y="8" width="4" height="4" fill="rgb(226,228,229)"/><rect x="16" y="0" width="4" height="4" fill="rgb(192,194,195)"/><rect x="16" y="4" width="4" height="4" fill="rgb(204,206,207)"/><rect x="16" y="8" width="4" height="4" fill="rgb(227,229,230)"/><rect x="20" y="0" width="4" height="4" fill="rgb(246,248,249)"/><rect x="20" y="4" width="4" height="4" fill="rgb(239,241,242)"/><rect x="20" y="8" width="4" height="4" fill="rgb(241,243,244)"/><rect x="24" y="0" width="4" height="4" fill="rgb(225,227,228)"/><rect x="24" y="4" width="4" height="4" fill="rgb(234,236,237)"/><rect x="24" y="8" width="4" height="4" fill="rgb(228,230,231)"/><rect x="28" y="0" width="4" height="4" fill="rgb(209,211,212)"/><rect x="28" y="4" width="4" height="4" fill="rgb(210,212,213)"/><rect x="28" y="8" width="4" height="4" fill="rgb(237,239,240)"/><rect x="32" y="0" width="4" height="4" fill="rgb(195,197,198)"/><rect x="32" y="4" width="4" height="4" fill="rgb(199,201,202)"/><rect x="32" y="8" width="4" height="4" fill="rgb(243,245,246)"/><rect x="36" y="0" width="4" height="4" fill="rgb(226,228,229)"/><rect x="36" y="4" width="4" height="4" fill="rgb(201,203,204)"/><rect x="36" y="8" width="4" height="4" fill="rgb(244,246,247)"/><rect x="40" y="0" width="4" height="4" fill="rgb(193,195,196)"/><rect x="40" y="4" width="4" height="4" fill="rgb(187,189,190)"/><rect x="40" y="8" width="4" height="4" fill="rgb(228,230,231)"/><rect x="44" y="0" width="4" height="4" fill="rgb(190,192,193)"/><rect x="44" y="4" width="4" height="4" fill="rgb(186,188,189)"/><rect x="44" y="8" width="4" height="4" fill="rgb(226,228,229)"/><rect x="48" y="0" width="4" height="4" fill="rgb(227,229,230)"/><rect x="48" y="4" width="4" height="4" fill="rgb(184,186,187)"/><rect x="48" y="8" width="4" height="4" fill="rgb(246,248,249)"/><rect x="52" y="0" width="4" height="4" fill="rgb(242,244,245)"/><rect x="52" y="4" width="4" height="4" fill="rgb(247,249,250)"/><rect x="52" y="8" width="4" height="4" fill="rgb(240,242,243)"/><rect x="56" y="0" width="4" height="4" fill="rgb(219,221,222)"/><rect x="56" y="4" width="4" height="4" fill="rgb(203,205,206)"/><rect x="56" y="8" width="4" height="4" fill="rgb(245,247,248)"/><rect x="60" y="0" width="4" height="4" fill="rgb(197,199,200)"/><rect x="60" y="4" width="4" height="4" fill="rgb(224,226,227)"/><rect x="60" y="8" width="4" height="4" fill="rgb(231,233,234)"/><rect x="64" y="0" width="4" height="4" fill="rgb(205,207,208)"/><rect x="64" y="4" width="4" height="4" fill="rgb(187,189,190)"/><rect x="64" y="8" width="4" height="4" fill="rgb(237,239,240)"/><rect x="68" y="0" width="4" height="4" fill="rgb(207,209,210)"/><rect x="68" y="4" width="4" height="4" fill="rgb(191,193,194)"/><rect x="68" y="8" width="4" height="4" fill="rgb(222,224,225)"/><rect x="72" y="0" width="4" height="4" fill="rgb(196,198,199)"/><rect x="72" y="4" width="4" height="4" fill="rgb(187,189,190)"/><rect x="72" y="8" width="4" height="4" fill="rgb(233,235,236)"/><rect x="76" y="0" width="4" height="4" fill="rgb(180,182,183)"/><rect x="76" y="4" width="4" height="4" fill="rgb(210,212,213)"/><rect x="76" y="8" width="4" height="4" fill="rgb(244,246,247)"/><rect x="80" y="0" width="4" height="4" fill="rgb(217,219,220)"/><rect x="80" y="4" width="4" height="4" fill="rgb(200,202,203)"/><rect x="80" y="8" width="4" height="4" fill="rgb(231,233,234)"/></svg>
<div class="t" style="right:61.0px;top:249.2px;height:19.6px;line-height:19.6px;font-size:14px;color:#37464b;font-weight:normal;">740 <span style="color:#9aa3a6">(8.07%)</span></div>
<div class="b" style="left:1621px;top:276.5px;width:15px;height:15px;background:#8bc49d;border-radius:50%"></div>
<svg style="position:absolute;left:1648px;top:278px;filter:blur(0.3px)" width="80" height="12"><rect x="0" y="0" width="4" height="4" fill="rgb(222,224,225)"/><rect x="0" y="4" width="4" height="4" fill="rgb(248,250,251)"/><rect x="0" y="8" width="4" height="4" fill="rgb(250,252,253)"/><rect x="4" y="0" width="4" height="4" fill="rgb(180,182,183)"/><rect x="4" y="4" width="4" height="4" fill="rgb(209,211,212)"/><rect x="4" y="8" width="4" height="4" fill="rgb(224,226,227)"/><rect x="8" y="0" width="4" height="4" fill="rgb(233,235,236)"/><rect x="8" y="4" width="4" height="4" fill="rgb(203,205,206)"/><rect x="8" y="8" width="4" height="4" fill="rgb(232,234,235)"/><rect x="12" y="0" width="4" height="4" fill="rgb(204,206,207)"/><rect x="12" y="4" width="4" height="4" fill="rgb(203,205,206)"/><rect x="12" y="8" width="4" height="4" fill="rgb(231,233,234)"/><rect x="16" y="0" width="4" height="4" fill="rgb(195,197,198)"/><rect x="16" y="4" width="4" height="4" fill="rgb(226,228,229)"/><rect x="16" y="8" width="4" height="4" fill="rgb(243,245,246)"/><rect x="20" y="4" width="4" height="4" fill="rgb(239,241,242)"/><rect x="20" y="8" width="4" height="4" fill="rgb(247,249,250)"/><rect x="24" y="0" width="4" height="4" fill="rgb(203,205,206)"/><rect x="24" y="4" width="4" height="4" fill="rgb(205,207,208)"/><rect x="24" y="8" width="4" height="4" fill="rgb(242,244,245)"/><rect x="28" y="0" width="4" height="4" fill="rgb(225,227,228)"/><rect x="28" y="4" width="4" height="4" fill="rgb(192,194,195)"/><rect x="28" y="8" width="4" height="4" fill="rgb(228,230,231)"/><rect x="32" y="0" width="4" height="4" fill="rgb(193,195,196)"/><rect x="32" y="4" width="4" height="4" fill="rgb(201,203,204)"/><rect x="32" y="8" width="4" height="4" fill="rgb(241,243,244)"/><rect x="36" y="0" width="4" height="4" fill="rgb(222,224,225)"/><rect x="36" y="4" width="4" height="4" fill="rgb(229,231,232)"/><rect x="36" y="8" width="4" height="4" fill="rgb(235,237,238)"/><rect x="40" y="0" width="4" height="4" fill="rgb(249,251,252)"/><rect x="40" y="4" width="4" height="4" fill="rgb(252,254,255)"/><rect x="40" y="8" width="4" height="4" fill="rgb(242,244,245)"/><rect x="44" y="0" width="4" height="4" fill="rgb(182,184,185)"/><rect x="44" y="4" width="4" height="4" fill="rgb(195,197,198)"/><rect x="44" y="8" width="4" height="4" fill="rgb(233,235,236)"/><rect x="48" y="0" width="4" height="4" fill="rgb(235,237,238)"/><rect x="48" y="4" width="4" height="4" fill="rgb(196,198,199)"/><rect x="48" y="8" width="4" height="4" fill="rgb(223,225,226)"/><rect x="52" y="0" width="4" height="4" fill="rgb(190,192,193)"/><rect x="52" y="4" width="4" height="4" fill="rgb(208,210,211)"/><rect x="52" y="8" width="4" height="4" fill="rgb(226,228,229)"/><rect x="56" y="0" width="4" height="4" fill="rgb(203,205,206)"/><rect x="56" y="4" width="4" height="4" fill="rgb(201,203,204)"/><rect x="56" y="8" width="4" height="4" fill="rgb(236,238,239)"/><rect x="60" y="0" width="4" height="4" fill="rgb(191,193,194)"/><rect x="60" y="4" width="4" height="4" fill="rgb(200,202,203)"/><rect x="60" y="8" width="4" height="4" fill="rgb(229,231,232)"/><rect x="64" y="0" width="4" height="4" fill="rgb(242,244,245)"/><rect x="64" y="8" width="4" height="4" fill="rgb(235,237,238)"/><rect x="68" y="0" width="4" height="4" fill="rgb(222,224,225)"/><rect x="68" y="4" width="4" height="4" fill="rgb(191,193,194)"/><rect x="68" y="8" width="4" height="4" fill="rgb(229,231,232)"/><rect x="72" y="0" width="4" height="4" fill="rgb(225,227,228)"/><rect x="72" y="4" width="4" height="4" fill="rgb(184,186,187)"/><rect x="72" y="8" width="4" height="4" fill="rgb(243,245,246)"/><rect x="76" y="0" width="4" height="4" fill="rgb(194,196,197)"/><rect x="76" y="4" width="4" height="4" fill="rgb(193,195,196)"/><rect x="76" y="8" width="4" height="4" fill="rgb(239,241,242)"/></svg>
<div class="t" style="right:61.0px;top:275.2px;height:19.6px;line-height:19.6px;font-size:14px;color:#37464b;font-weight:normal;">700 <span style="color:#9aa3a6">(7.63%)</span></div>
<div class="b" style="left:1621px;top:302.5px;width:15px;height:15px;background:#a6d1b7;border-radius:50%"></div>
<svg style="position:absolute;left:1648px;top:304px;filter:blur(0.3px)" width="68" height="12"><rect x="0" y="0" width="4" height="4" fill="rgb(222,224,225)"/><rect x="0" y="4" width="4" height="4" fill="rgb(248,250,251)"/><rect x="0" y="8" width="4" height="4" fill="rgb(250,252,253)"/><rect x="4" y="0" width="4" height="4" fill="rgb(236,238,239)"/><rect x="4" y="4" width="4" height="4" fill="rgb(205,207,208)"/><rect x="4" y="8" width="4" height="4" fill="rgb(241,243,244)"/><rect x="8" y="0" width="4" height="4" fill="rgb(201,203,204)"/><rect x="8" y="4" width="4" height="4" fill="rgb(209,211,212)"/><rect x="8" y="8" width="4" height="4" fill="rgb(239,241,242)"/><rect x="12" y="0" width="4" height="4" fill="rgb(188,190,191)"/><rect x="12" y="4" width="4" height="4" fill="rgb(189,191,192)"/><rect x="12" y="8" width="4" height="4" fill="rgb(240,242,243)"/><rect x="16" y="0" width="4" height="4" fill="rgb(190,192,193)"/><rect x="16" y="4" width="4" height="4" fill="rgb(191,193,194)"/><rect x="16" y="8" width="4" height="4" fill="rgb(226,228,229)"/><rect x="20" y="0" width="4" height="4" fill="rgb(227,229,230)"/><rect x="20" y="4" width="4" height="4" fill="rgb(233,235,236)"/><rect x="20" y="8" width="4" height="4" fill="rgb(242,244,245)"/><rect x="24" y="0" width="4" height="4" fill="rgb(211,213,214)"/><rect x="24" y="4" width="4" height="4" fill="rgb(207,209,210)"/><rect x="24" y="8" width="4" height="4" fill="rgb(239,241,242)"/><rect x="28" y="0" width="4" height="4" fill="rgb(243,245,246)"/><rect x="28" y="4" width="4" height="4" fill="rgb(251,253,254)"/><rect x="28" y="8" width="4" height="4" fill="rgb(237,239,240)"/><rect x="32" y="0" width="4" height="4" fill="rgb(210,212,213)"/><rect x="32" y="4" width="4" height="4" fill="rgb(187,189,190)"/><rect x="32" y="8" width="4" height="4" fill="rgb(225,227,228)"/><rect x="36" y="0" width="4" height="4" fill="rgb(199,201,202)"/><rect x="36" y="4" width="4" height="4" fill="rgb(206,208,209)"/><rect x="36" y="8" width="4" height="4" fill="rgb(222,224,225)"/><rect x="40" y="0" width="4" height="4" fill="rgb(230,232,233)"/><rect x="40" y="4" width="4" height="4" fill="rgb(190,192,193)"/><rect x="40" y="8" width="4" height="4" fill="rgb(233,235,236)"/><rect x="44" y="0" width="4" height="4" fill="rgb(192,194,195)"/><rect x="44" y="4" width="4" height="4" fill="rgb(190,192,193)"/><rect x="44" y="8" width="4" height="4" fill="rgb(223,225,226)"/><rect x="48" y="0" width="4" height="4" fill="rgb(180,182,183)"/><rect x="48" y="4" width="4" height="4" fill="rgb(199,201,202)"/><rect x="48" y="8" width="4" height="4" fill="rgb(231,233,234)"/><rect x="52" y="0" width="4" height="4" fill="rgb(192,194,195)"/><rect x="52" y="4" width="4" height="4" fill="rgb(184,186,187)"/><rect x="52" y="8" width="4" height="4" fill="rgb(223,225,226)"/><rect x="56" y="0" width="4" height="4" fill="rgb(245,247,248)"/><rect x="56" y="4" width="4" height="4" fill="rgb(239,241,242)"/><rect x="56" y="8" width="4" height="4" fill="rgb(235,237,238)"/><rect x="60" y="0" width="4" height="4" fill="rgb(225,227,228)"/><rect x="60" y="4" width="4" height="4" fill="rgb(237,239,240)"/><rect x="60" y="8" width="4" height="4" fill="rgb(232,234,235)"/><rect x="64" y="0" width="4" height="4" fill="rgb(210,212,213)"/><rect x="64" y="4" width="4" height="4" fill="rgb(206,208,209)"/><rect x="64" y="8" width="4" height="4" fill="rgb(222,224,225)"/></svg>
<div class="t" style="right:61.0px;top:301.2px;height:19.6px;line-height:19.6px;font-size:14px;color:#37464b;font-weight:normal;">680 <span style="color:#9aa3a6">(7.41%)</span></div>
<div class="b" style="left:1621px;top:328.5px;width:15px;height:15px;background:#c5e2d0;border-radius:50%"></div>
<svg style="position:absolute;left:1648px;top:330px;filter:blur(0.3px)" width="84" height="12"><rect x="0" y="0" width="4" height="4" fill="rgb(222,224,225)"/><rect x="0" y="4" width="4" height="4" fill="rgb(248,250,251)"/><rect x="0" y="8" width="4" height="4" fill="rgb(250,252,253)"/><rect x="4" y="0" width="4" height="4" fill="rgb(198,200,201)"/><rect x="4" y="4" width="4" height="4" fill="rgb(201,203,204)"/><rect x="4" y="8" width="4" height="4" fill="rgb(242,244,245)"/><rect x="8" y="0" width="4" height="4" fill="rgb(174,176,177)"/><rect x="8" y="4" width="4" height="4" fill="rgb(211,213,214)"/><rect x="8" y="8" width="4" height="4" fill="rgb(224,226,227)"/><rect x="12" y="0" width="4" height="4" fill="rgb(221,223,224)"/><rect x="12" y="4" width="4" height="4" fill="rgb(191,193,194)"/><rect x="12" y="8" width="4" height="4" fill="rgb(245,247,248)"/><rect x="16" y="0" width="4" height="4" fill="rgb(194,196,197)"/><rect x="16" y="4" width="4" height="4" fill="rgb(189,191,192)"/><rect x="16" y="8" width="4" height="4" fill="rgb(222,224,225)"/><rect x="20" y="0" width="4" height="4" fill="rgb(230,232,233)"/><rect x="20" y="4" width="4" height="4" fill="rgb(194,196,197)"/><rect x="20" y="8" width="4" height="4" fill="rgb(238,240,241)"/><rect x="24" y="0" width="4" height="4" fill="rgb(191,193,194)"/><rect x="24" y="4" width="4" height="4" fill="rgb(192,194,195)"/><rect x="24" y="8" width="4" height="4" fill="rgb(226,228,229)"/><rect x="28" y="0" width="4" height="4" fill="rgb(198,200,201)"/><rect x="28" y="4" width="4" height="4" fill="rgb(226,228,229)"/><rect x="28" y="8" width="4" height="4" fill="rgb(242,244,245)"/><rect x="32" y="0" width="4" height="4" fill="rgb(252,254,255)"/><rect x="32" y="4" width="4" height="4" fill="rgb(248,250,251)"/><rect x="32" y="8" width="4" height="4" fill="rgb(240,242,243)"/><rect x="36" y="0" width="4" height="4" fill="rgb(220,222,223)"/><rect x="36" y="4" width="4" height="4" fill="rgb(208,210,211)"/><rect x="36" y="8" width="4" height="4" fill="rgb(233,235,236)"/><rect x="40" y="0" width="4" height="4" fill="rgb(196,198,199)"/><rect x="40" y="4" width="4" height="4" fill="rgb(233,235,236)"/><rect x="40" y="8" width="4" height="4" fill="rgb(226,228,229)"/><rect x="44" y="0" width="4" height="4" fill="rgb(229,231,232)"/><rect x="44" y="4" width="4" height="4" fill="rgb(240,242,243)"/><rect x="44" y="8" width="4" height="4" fill="rgb(224,226,227)"/><rect x="48" y="0" width="4" height="4" fill="rgb(226,228,229)"/><rect x="48" y="4" width="4" height="4" fill="rgb(208,210,211)"/><rect x="48" y="8" width="4" height="4" fill="rgb(239,241,242)"/><rect x="52" y="0" width="4" height="4" fill="rgb(208,210,211)"/><rect x="52" y="4" width="4" height="4" fill="rgb(209,211,212)"/><rect x="52" y="8" width="4" height="4" fill="rgb(236,238,239)"/><rect x="56" y="0" width="4" height="4" fill="rgb(209,211,212)"/><rect x="56" y="4" width="4" height="4" fill="rgb(235,237,238)"/><rect x="56" y="8" width="4" height="4" fill="rgb(244,246,247)"/><rect x="60" y="0" width="4" height="4" fill="rgb(196,198,199)"/><rect x="60" y="4" width="4" height="4" fill="rgb(191,193,194)"/><rect x="60" y="8" width="4" height="4" fill="rgb(226,228,229)"/><rect x="64" y="0" width="4" height="4" fill="rgb(196,198,199)"/><rect x="64" y="4" width="4" height="4" fill="rgb(223,225,226)"/><rect x="64" y="8" width="4" height="4" fill="rgb(227,229,230)"/><rect x="68" y="0" width="4" height="4" fill="rgb(251,253,254)"/><rect x="68" y="8" width="4" height="4" fill="rgb(239,241,242)"/><rect x="72" y="0" width="4" height="4" fill="rgb(234,236,237)"/><rect x="72" y="4" width="4" height="4" fill="rgb(242,244,245)"/><rect x="72" y="8" width="4" height="4" fill="rgb(228,230,231)"/><rect x="76" y="0" width="4" height="4" fill="rgb(198,200,201)"/><rect x="76" y="4" width="4" height="4" fill="rgb(191,193,194)"/><rect x="76" y="8" width="4" height="4" fill="rgb(229,231,232)"/><rect x="80" y="0" width="4" height="4" fill="rgb(189,191,192)"/><rect x="80" y="4" width="4" height="4" fill="rgb(200,202,203)"/><rect x="80" y="8" width="4" height="4" fill="rgb(224,226,227)"/></svg>
<div class="t" style="right:61.0px;top:327.2px;height:19.6px;line-height:19.6px;font-size:14px;color:#37464b;font-weight:normal;">665 <span style="color:#9aa3a6">(7.24%)</span></div>
<div class="b" style="left:1621px;top:354.5px;width:15px;height:15px;background:#e1efe6;border-radius:50%"></div>
<svg style="position:absolute;left:1648px;top:356px;filter:blur(0.3px)" width="84" height="12"><rect x="0" y="0" width="4" height="4" fill="rgb(222,224,225)"/><rect x="0" y="4" width="4" height="4" fill="rgb(248,250,251)"/><rect x="0" y="8" width="4" height="4" fill="rgb(250,252,253)"/><rect x="4" y="0" width="4" height="4" fill="rgb(191,193,194)"/><rect x="4" y="4" width="4" height="4" fill="rgb(194,196,197)"/><rect x="4" y="8" width="4" height="4" fill="rgb(231,233,234)"/><rect x="8" y="0" width="4" height="4" fill="rgb(221,223,224)"/><rect x="8" y="4" width="4" height="4" fill="rgb(201,203,204)"/><rect x="8" y="8" width="4" height="4" fill="rgb(228,230,231)"/><rect x="12" y="0" width="4" height="4" fill="rgb(234,236,237)"/><rect x="12" y="4" width="4" height="4" fill="rgb(184,186,187)"/><rect x="12" y="8" width="4" height="4" fill="rgb(227,229,230)"/><rect x="16" y="0" width="4" height="4" fill="rgb(227,229,230)"/><rect x="16" y="4" width="4" height="4" fill="rgb(188,190,191)"/><rect x="16" y="8" width="4" height="4" fill="rgb(224,226,227)"/><rect x="20" y="0" width="4" height="4" fill="rgb(220,222,223)"/><rect x="20" y="4" width="4" height="4" fill="rgb(185,187,188)"/><rect x="20" y="8" width="4" height="4" fill="rgb(228,230,231)"/><rect x="24" y="0" width="4" height="4" fill="rgb(237,239,240)"/><rect x="24" y="4" width="4" height="4" fill="rgb(189,191,192)"/><rect x="24" y="8" width="4" height="4" fill="rgb(231,233,234)"/><rect x="28" y="0" width="4" height="4" fill="rgb(194,196,197)"/><rect x="28" y="4" width="4" height="4" fill="rgb(188,190,191)"/><rect x="28" y="8" width="4" height="4" fill="rgb(230,232,233)"/><rect x="32" y="0" width="4" height="4" fill="rgb(249,251,252)"/><rect x="32" y="4" width="4" height="4" fill="rgb(239,241,242)"/><rect x="32" y="8" width="4" height="4" fill="rgb(237,239,240)"/><rect x="36" y="0" width="4" height="4" fill="rgb(191,193,194)"/><rect x="36" y="4" width="4" height="4" fill="rgb(204,206,207)"/><rect x="36" y="8" width="4" height="4" fill="rgb(245,247,248)"/><rect x="40" y="0" width="4" height="4" fill="rgb(199,201,202)"/><rect x="40" y="4" width="4" height="4" fill="rgb(208,210,211)"/><rect x="40" y="8" width="4" height="4" fill="rgb(241,243,244)"/><rect x="44" y="0" width="4" height="4" fill="rgb(192,194,195)"/><rect x="44" y="4" width="4" height="4" fill="rgb(231,233,234)"/><rect x="44" y="8" width="4" height="4" fill="rgb(222,224,225)"/><rect x="48" y="0" width="4" height="4" fill="rgb(204,206,207)"/><rect x="48" y="4" width="4" height="4" fill="rgb(194,196,197)"/><rect x="48" y="8" width="4" height="4" fill="rgb(223,225,226)"/><rect x="52" y="0" width="4" height="4" fill="rgb(236,238,239)"/><rect x="52" y="4" width="4" height="4" fill="rgb(227,229,230)"/><rect x="52" y="8" width="4" height="4" fill="rgb(230,232,233)"/><rect x="56" y="0" width="4" height="4" fill="rgb(243,245,246)"/><rect x="56" y="4" width="4" height="4" fill="rgb(253,255,256)"/><rect x="56" y="8" width="4" height="4" fill="rgb(246,248,249)"/><rect x="60" y="0" width="4" height="4" fill="rgb(208,210,211)"/><rect x="60" y="4" width="4" height="4" fill="rgb(231,233,234)"/><rect x="60" y="8" width="4" height="4" fill="rgb(244,246,247)"/><rect x="64" y="0" width="4" height="4" fill="rgb(195,197,198)"/><rect x="64" y="4" width="4" height="4" fill="rgb(203,205,206)"/><rect x="64" y="8" width="4" height="4" fill="rgb(236,238,239)"/><rect x="68" y="0" width="4" height="4" fill="rgb(193,195,196)"/><rect x="68" y="4" width="4" height="4" fill="rgb(210,212,213)"/><rect x="68" y="8" width="4" height="4" fill="rgb(240,242,243)"/><rect x="72" y="0" width="4" height="4" fill="rgb(198,200,201)"/><rect x="72" y="4" width="4" height="4" fill="rgb(197,199,200)"/><rect x="72" y="8" width="4" height="4" fill="rgb(224,226,227)"/><rect x="76" y="0" width="4" height="4" fill="rgb(176,178,179)"/><rect x="76" y="4" width="4" height="4" fill="rgb(184,186,187)"/><rect x="76" y="8" width="4" height="4" fill="rgb(246,248,249)"/><rect x="80" y="0" width="4" height="4" fill="rgb(217,219,220)"/><rect x="80" y="4" width="4" height="4" fill="rgb(185,187,188)"/><rect x="80" y="8" width="4" height="4" fill="rgb(233,235,236)"/></svg>
<div class="t" style="right:61.0px;top:353.2px;height:19.6px;line-height:19.6px;font-size:14px;color:#37464b;font-weight:normal;">500 <span style="color:#9aa3a6">(5.45%)</span></div>
<div class="b" style="left:1621px;top:391.5px;width:15px;height:15px;background:#cfd2d3;border-radius:50%"></div>
<div class="t " style="left:1648.0px;top:390.2px;height:19.6px;line-height:19.6px;font-size:14px;color:#9aa3a6;font-weight:normal;">Other (119 more)</div>
<div class="t" style="right:61.0px;top:390.2px;height:19.6px;line-height:19.6px;font-size:14px;color:#9aa3a6;font-weight:normal;">5,857 (5.45%)</div>
<div class="b" style="left:1422px;top:469px;width:465px;height:265px;background:#fff;border-radius:2px;box-shadow:0 1px 6px rgba(0,0,0,.13)"></div>
<div class="b" style="left:1422px;top:469px;width:465px;height:37px;background:#f8f8f8;border-bottom:1px solid #e0e3e4;box-sizing:border-box"></div>
<div class="t " style="left:1439.0px;top:476.8px;height:22.4px;line-height:22.4px;font-size:16px;color:#37464b;font-weight:normal;letter-spacing:-0.4px;-webkit-text-stroke:0.3px #37464b">Server Port</div>
<svg class="b" style="left:0;top:0" width="1920" height="1080"><path fill="#4fa2cb" d="M1451.04 595.80A5.00 5.00 0 0 1 1446.07 590.28A67.60 67.60 0 0 1 1564.89 553.61A5.00 5.00 0 0 1 1563.89 560.97L1552.16 568.98A5.00 5.00 0 0 1 1545.63 568.19A43.50 43.50 0 0 0 1470.19 591.47A5.00 5.00 0 0 1 1465.24 595.80Z"/><path fill="#72b2d6" d="M1565.58 563.45A5.00 5.00 0 0 1 1572.80 565.21A67.60 67.60 0 0 1 1561.89 644.29A5.00 5.00 0 0 1 1554.47 644.03L1545.34 633.15A5.00 5.00 0 0 1 1545.47 626.57A43.50 43.50 0 0 0 1552.20 577.82A5.00 5.00 0 0 1 1553.85 571.45Z"/><path fill="#93c4e0" d="M1552.17 645.96A5.00 5.00 0 0 1 1551.14 653.32A67.60 67.60 0 0 1 1494.17 662.14A5.00 5.00 0 0 1 1490.96 655.44L1496.37 642.31A5.00 5.00 0 0 1 1502.26 639.38A43.50 43.50 0 0 0 1536.54 634.07A5.00 5.00 0 0 1 1543.04 635.08Z"/><path fill="#b5d7ea" d="M1488.19 654.29A5.00 5.00 0 0 1 1481.19 656.79A67.60 67.60 0 0 1 1458.44 636.80A5.00 5.00 0 0 1 1460.02 629.54L1472.34 622.49A5.00 5.00 0 0 1 1478.79 623.78A43.50 43.50 0 0 0 1491.48 634.93A5.00 5.00 0 0 1 1493.60 641.16Z"/><path fill="#dbebf4" d="M1458.53 626.94A5.00 5.00 0 0 1 1451.47 624.62A67.60 67.60 0 0 1 1446.07 604.32A5.00 5.00 0 0 1 1451.04 598.80L1465.24 598.80A5.00 5.00 0 0 1 1470.19 603.13A43.50 43.50 0 0 0 1473.00 613.66A5.00 5.00 0 0 1 1470.85 619.88Z"/></svg>
<div class="b" style="left:1621px;top:539.5px;width:15px;height:15px;background:#4fa2cb;border-radius:50%"></div>
<svg style="position:absolute;left:1648px;top:541px;filter:blur(0.3px)" width="92" height="12"><rect x="0" y="0" width="4" height="4" fill="rgb(222,224,225)"/><rect x="0" y="4" width="4" height="4" fill="rgb(248,250,251)"/><rect x="0" y="8" width="4" height="4" fill="rgb(250,252,253)"/><rect x="4" y="0" width="4" height="4" fill="rgb(219,221,222)"/><rect x="4" y="4" width="4" height="4" fill="rgb(210,212,213)"/><rect x="4" y="8" width="4" height="4" fill="rgb(241,243,244)"/><rect x="8" y="0" width="4" height="4" fill="rgb(217,219,220)"/><rect x="8" y="4" width="4" height="4" fill="rgb(240,242,243)"/><rect x="8" y="8" width="4" height="4" fill="rgb(231,233,234)"/><rect x="12" y="0" width="4" height="4" fill="rgb(202,204,205)"/><rect x="12" y="4" width="4" height="4" fill="rgb(186,188,189)"/><rect x="12" y="8" width="4" height="4" fill="rgb(227,229,230)"/><rect x="16" y="0" width="4" height="4" fill="rgb(208,210,211)"/><rect x="16" y="4" width="4" height="4" fill="rgb(189,191,192)"/><rect x="16" y="8" width="4" height="4" fill="rgb(239,241,242)"/><rect x="20" y="0" width="4" height="4" fill="rgb(251,253,254)"/><rect x="20" y="4" width="4" height="4" fill="rgb(248,250,251)"/><rect x="20" y="8" width="4" height="4" fill="rgb(235,237,238)"/><rect x="24" y="0" width="4" height="4" fill="rgb(199,201,202)"/><rect x="24" y="4" width="4" height="4" fill="rgb(186,188,189)"/><rect x="24" y="8" width="4" height="4" fill="rgb(222,224,225)"/><rect x="28" y="0" width="4" height="4" fill="rgb(222,224,225)"/><rect x="28" y="4" width="4" height="4" fill="rgb(186,188,189)"/><rect x="28" y="8" width="4" height="4" fill="rgb(240,242,243)"/><rect x="32" y="0" width="4" height="4" fill="rgb(198,200,201)"/><rect x="32" y="4" width="4" height="4" fill="rgb(225,227,228)"/><rect x="32" y="8" width="4" height="4" fill="rgb(226,228,229)"/><rect x="36" y="0" width="4" height="4" fill="rgb(201,203,204)"/><rect x="36" y="4" width="4" height="4" fill="rgb(198,200,201)"/><rect x="36" y="8" width="4" height="4" fill="rgb(240,242,243)"/><rect x="40" y="0" width="4" height="4" fill="rgb(246,248,249)"/><rect x="40" y="4" width="4" height="4" fill="rgb(248,250,251)"/><rect x="40" y="8" width="4" height="4" fill="rgb(245,247,248)"/><rect x="44" y="0" width="4" height="4" fill="rgb(184,186,187)"/><rect x="44" y="4" width="4" height="4" fill="rgb(204,206,207)"/><rect x="44" y="8" width="4" height="4" fill="rgb(230,232,233)"/><rect x="48" y="0" width="4" height="4" fill="rgb(191,193,194)"/><rect x="48" y="4" width="4" height="4" fill="rgb(223,225,226)"/><rect x="48" y="8" width="4" height="4" fill="rgb(225,227,228)"/><rect x="52" y="0" width="4" height="4" fill="rgb(202,204,205)"/><rect x="52" y="4" width="4" height="4" fill="rgb(236,238,239)"/><rect x="52" y="8" width="4" height="4" fill="rgb(244,246,247)"/><rect x="56" y="0" width="4" height="4" fill="rgb(210,212,213)"/><rect x="56" y="4" width="4" height="4" fill="rgb(205,207,208)"/><rect x="56" y="8" width="4" height="4" fill="rgb(245,247,248)"/><rect x="60" y="0" width="4" height="4" fill="rgb(196,198,199)"/><rect x="60" y="4" width="4" height="4" fill="rgb(235,237,238)"/><rect x="60" y="8" width="4" height="4" fill="rgb(238,240,241)"/><rect x="64" y="0" width="4" height="4" fill="rgb(199,201,202)"/><rect x="64" y="4" width="4" height="4" fill="rgb(185,187,188)"/><rect x="64" y="8" width="4" height="4" fill="rgb(229,231,232)"/><rect x="68" y="0" width="4" height="4" fill="rgb(196,198,199)"/><rect x="68" y="4" width="4" height="4" fill="rgb(202,204,205)"/><rect x="68" y="8" width="4" height="4" fill="rgb(236,238,239)"/><rect x="72" y="0" width="4" height="4" fill="rgb(196,198,199)"/><rect x="72" y="4" width="4" height="4" fill="rgb(207,209,210)"/><rect x="72" y="8" width="4" height="4" fill="rgb(236,238,239)"/><rect x="76" y="0" width="4" height="4" fill="rgb(246,248,249)"/><rect x="76" y="4" width="4" height="4" fill="rgb(249,251,252)"/><rect x="76" y="8" width="4" height="4" fill="rgb(240,242,243)"/><rect x="80" y="0" width="4" height="4" fill="rgb(205,207,208)"/><rect x="80" y="4" width="4" height="4" fill="rgb(226,228,229)"/><rect x="80" y="8" width="4" height="4" fill="rgb(235,237,238)"/><rect x="84" y="0" width="4" height="4" fill="rgb(208,210,211)"/><rect x="84" y="4" width="4" height="4" fill="rgb(230,232,233)"/><rect x="84" y="8" width="4" height="4" fill="rgb(240,242,243)"/><rect x="88" y="0" width="4" height="4" fill="rgb(200,202,203)"/><rect x="88" y="4" width="4" height="4" fill="rgb(203,205,206)"/><rect x="88" y="8" width="4" height="4" fill="rgb(229,231,232)"/></svg>
<div class="t" style="right:61.0px;top:538.2px;height:19.6px;line-height:19.6px;font-size:14px;color:#37464b;font-weight:normal;">740 <span style="color:#9aa3a6">(8.07%)</span></div>
<div class="b" style="left:1621px;top:565.5px;width:15px;height:15px;background:#72b2d6;border-radius:50%"></div>
<svg style="position:absolute;left:1648px;top:567px;filter:blur(0.3px)" width="92" height="12"><rect x="0" y="0" width="4" height="4" fill="rgb(222,224,225)"/><rect x="0" y="4" width="4" height="4" fill="rgb(248,250,251)"/><rect x="0" y="8" width="4" height="4" fill="rgb(250,252,253)"/><rect x="4" y="0" width="4" height="4" fill="rgb(208,210,211)"/><rect x="4" y="4" width="4" height="4" fill="rgb(194,196,197)"/><rect x="4" y="8" width="4" height="4" fill="rgb(239,241,242)"/><rect x="8" y="0" width="4" height="4" fill="rgb(187,189,190)"/><rect x="8" y="4" width="4" height="4" fill="rgb(209,211,212)"/><rect x="8" y="8" width="4" height="4" fill="rgb(228,230,231)"/><rect x="12" y="0" width="4" height="4" fill="rgb(221,223,224)"/><rect x="12" y="4" width="4" height="4" fill="rgb(206,208,209)"/><rect x="12" y="8" width="4" height="4" fill="rgb(241,243,244)"/><rect x="16" y="0" width="4" height="4" fill="rgb(197,199,200)"/><rect x="16" y="4" width="4" height="4" fill="rgb(187,189,190)"/><rect x="16" y="8" width="4" height="4" fill="rgb(227,229,230)"/><rect x="20" y="0" width="4" height="4" fill="rgb(190,192,193)"/><rect x="20" y="4" width="4" height="4" fill="rgb(208,210,211)"/><rect x="20" y="8" width="4" height="4" fill="rgb(237,239,240)"/><rect x="24" y="0" width="4" height="4" fill="rgb(179,181,182)"/><rect x="24" y="4" width="4" height="4" fill="rgb(224,226,227)"/><rect x="24" y="8" width="4" height="4" fill="rgb(232,234,235)"/><rect x="28" y="0" width="4" height="4" fill="rgb(174,176,177)"/><rect x="28" y="4" width="4" height="4" fill="rgb(192,194,195)"/><rect x="28" y="8" width="4" height="4" fill="rgb(236,238,239)"/><rect x="32" y="0" width="4" height="4" fill="rgb(242,244,245)"/><rect x="32" y="4" width="4" height="4" fill="rgb(244,246,247)"/><rect x="32" y="8" width="4" height="4" fill="rgb(239,241,242)"/><rect x="36" y="0" width="4" height="4" fill="rgb(207,209,210)"/><rect x="36" y="4" width="4" height="4" fill="rgb(201,203,204)"/><rect x="36" y="8" width="4" height="4" fill="rgb(242,244,245)"/><rect x="40" y="0" width="4" height="4" fill="rgb(228,230,231)"/><rect x="40" y="4" width="4" height="4" fill="rgb(208,210,211)"/><rect x="40" y="8" width="4" height="4" fill="rgb(238,240,241)"/><rect x="44" y="0" width="4" height="4" fill="rgb(231,233,234)"/><rect x="44" y="4" width="4" height="4" fill="rgb(192,194,195)"/><rect x="44" y="8" width="4" height="4" fill="rgb(235,237,238)"/><rect x="48" y="0" width="4" height="4" fill="rgb(173,175,176)"/><rect x="48" y="4" width="4" height="4" fill="rgb(229,231,232)"/><rect x="48" y="8" width="4" height="4" fill="rgb(224,226,227)"/><rect x="52" y="0" width="4" height="4" fill="rgb(191,193,194)"/><rect x="52" y="4" width="4" height="4" fill="rgb(243,245,246)"/><rect x="52" y="8" width="4" height="4" fill="rgb(222,224,225)"/><rect x="56" y="0" width="4" height="4" fill="rgb(193,195,196)"/><rect x="56" y="4" width="4" height="4" fill="rgb(229,231,232)"/><rect x="56" y="8" width="4" height="4" fill="rgb(223,225,226)"/><rect x="60" y="0" width="4" height="4" fill="rgb(194,196,197)"/><rect x="60" y="4" width="4" height="4" fill="rgb(240,242,243)"/><rect x="60" y="8" width="4" height="4" fill="rgb(228,230,231)"/><rect x="64" y="0" width="4" height="4" fill="rgb(250,252,253)"/><rect x="64" y="4" width="4" height="4" fill="rgb(250,252,253)"/><rect x="64" y="8" width="4" height="4" fill="rgb(238,240,241)"/><rect x="68" y="0" width="4" height="4" fill="rgb(194,196,197)"/><rect x="68" y="4" width="4" height="4" fill="rgb(201,203,204)"/><rect x="68" y="8" width="4" height="4" fill="rgb(230,232,233)"/><rect x="72" y="0" width="4" height="4" fill="rgb(221,223,224)"/><rect x="72" y="4" width="4" height="4" fill="rgb(189,191,192)"/><rect x="72" y="8" width="4" height="4" fill="rgb(230,232,233)"/><rect x="76" y="0" width="4" height="4" fill="rgb(193,195,196)"/><rect x="76" y="4" width="4" height="4" fill="rgb(203,205,206)"/><rect x="76" y="8" width="4" height="4" fill="rgb(238,240,241)"/><rect x="80" y="0" width="4" height="4" fill="rgb(220,222,223)"/><rect x="80" y="4" width="4" height="4" fill="rgb(202,204,205)"/><rect x="80" y="8" width="4" height="4" fill="rgb(240,242,243)"/><rect x="84" y="0" width="4" height="4" fill="rgb(191,193,194)"/><rect x="84" y="4" width="4" height="4" fill="rgb(238,240,241)"/><rect x="84" y="8" width="4" height="4" fill="rgb(234,236,237)"/><rect x="88" y="0" width="4" height="4" fill="rgb(237,239,240)"/><rect x="88" y="4" width="4" height="4" fill="rgb(208,210,211)"/><rect x="88" y="8" width="4" height="4" fill="rgb(244,246,247)"/></svg>
<div class="t" style="right:61.0px;top:564.2px;height:19.6px;line-height:19.6px;font-size:14px;color:#37464b;font-weight:normal;">700 <span style="color:#9aa3a6">(7.63%)</span></div>
<div class="b" style="left:1621px;top:591.5px;width:15px;height:15px;background:#93c4e0;border-radius:50%"></div>
<svg style="position:absolute;left:1648px;top:593px;filter:blur(0.3px)" width="84" height="12"><rect x="0" y="0" width="4" height="4" fill="rgb(222,224,225)"/><rect x="0" y="4" width="4" height="4" fill="rgb(248,250,251)"/><rect x="0" y="8" width="4" height="4" fill="rgb(250,252,253)"/><rect x="4" y="0" width="4" height="4" fill="rgb(225,227,228)"/><rect x="4" y="4" width="4" height="4" fill="rgb(191,193,194)"/><rect x="4" y="8" width="4" height="4" fill="rgb(226,228,229)"/><rect x="8" y="0" width="4" height="4" fill="rgb(210,212,213)"/><rect x="8" y="4" width="4" height="4" fill="rgb(195,197,198)"/><rect x="8" y="8" width="4" height="4" fill="rgb(236,238,239)"/><rect x="12" y="0" width="4" height="4" fill="rgb(178,180,181)"/><rect x="12" y="4" width="4" height="4" fill="rgb(204,206,207)"/><rect x="12" y="8" width="4" height="4" fill="rgb(242,244,245)"/><rect x="16" y="0" width="4" height="4" fill="rgb(226,228,229)"/><rect x="16" y="4" width="4" height="4" fill="rgb(206,208,209)"/><rect x="16" y="8" width="4" height="4" fill="rgb(242,244,245)"/><rect x="20" y="0" width="4" height="4" fill="rgb(210,212,213)"/><rect x="20" y="4" width="4" height="4" fill="rgb(186,188,189)"/><rect x="20" y="8" width="4" height="4" fill="rgb(222,224,225)"/><rect x="24" y="0" width="4" height="4" fill="rgb(224,226,227)"/><rect x="24" y="4" width="4" height="4" fill="rgb(203,205,206)"/><rect x="24" y="8" width="4" height="4" fill="rgb(234,236,237)"/><rect x="28" y="0" width="4" height="4" fill="rgb(246,248,249)"/><rect x="28" y="4" width="4" height="4" fill="rgb(252,254,255)"/><rect x="28" y="8" width="4" height="4" fill="rgb(235,237,238)"/><rect x="32" y="0" width="4" height="4" fill="rgb(202,204,205)"/><rect x="32" y="4" width="4" height="4" fill="rgb(188,190,191)"/><rect x="32" y="8" width="4" height="4" fill="rgb(233,235,236)"/><rect x="36" y="0" width="4" height="4" fill="rgb(199,201,202)"/><rect x="36" y="4" width="4" height="4" fill="rgb(203,205,206)"/><rect x="36" y="8" width="4" height="4" fill="rgb(223,225,226)"/><rect x="40" y="0" width="4" height="4" fill="rgb(197,199,200)"/><rect x="40" y="4" width="4" height="4" fill="rgb(210,212,213)"/><rect x="40" y="8" width="4" height="4" fill="rgb(240,242,243)"/><rect x="44" y="0" width="4" height="4" fill="rgb(211,213,214)"/><rect x="44" y="4" width="4" height="4" fill="rgb(198,200,201)"/><rect x="44" y="8" width="4" height="4" fill="rgb(236,238,239)"/><rect x="48" y="0" width="4" height="4" fill="rgb(205,207,208)"/><rect x="48" y="4" width="4" height="4" fill="rgb(206,208,209)"/><rect x="48" y="8" width="4" height="4" fill="rgb(224,226,227)"/><rect x="52" y="0" width="4" height="4" fill="rgb(221,223,224)"/><rect x="52" y="4" width="4" height="4" fill="rgb(192,194,195)"/><rect x="52" y="8" width="4" height="4" fill="rgb(233,235,236)"/><rect x="56" y="0" width="4" height="4" fill="rgb(199,201,202)"/><rect x="56" y="4" width="4" height="4" fill="rgb(242,244,245)"/><rect x="56" y="8" width="4" height="4" fill="rgb(230,232,233)"/><rect x="60" y="0" width="4" height="4" fill="rgb(182,184,185)"/><rect x="60" y="4" width="4" height="4" fill="rgb(206,208,209)"/><rect x="60" y="8" width="4" height="4" fill="rgb(245,247,248)"/><rect x="64" y="4" width="4" height="4" fill="rgb(241,243,244)"/><rect x="64" y="8" width="4" height="4" fill="rgb(246,248,249)"/><rect x="68" y="0" width="4" height="4" fill="rgb(187,189,190)"/><rect x="68" y="4" width="4" height="4" fill="rgb(243,245,246)"/><rect x="68" y="8" width="4" height="4" fill="rgb(226,228,229)"/><rect x="72" y="0" width="4" height="4" fill="rgb(200,202,203)"/><rect x="72" y="4" width="4" height="4" fill="rgb(230,232,233)"/><rect x="72" y="8" width="4" height="4" fill="rgb(240,242,243)"/><rect x="76" y="0" width="4" height="4" fill="rgb(227,229,230)"/><rect x="76" y="4" width="4" height="4" fill="rgb(233,235,236)"/><rect x="76" y="8" width="4" height="4" fill="rgb(243,245,246)"/><rect x="80" y="0" width="4" height="4" fill="rgb(210,212,213)"/><rect x="80" y="4" width="4" height="4" fill="rgb(237,239,240)"/><rect x="80" y="8" width="4" height="4" fill="rgb(246,248,249)"/></svg>
<div class="t" style="right:61.0px;top:590.2px;height:19.6px;line-height:19.6px;font-size:14px;color:#37464b;font-weight:normal;">680 <span style="color:#9aa3a6">(7.41%)</span></div>
<div class="b" style="left:1621px;top:617.5px;width:15px;height:15px;background:#b5d7ea;border-radius:50%"></div>
<svg style="position:absolute;left:1648px;top:619px;filter:blur(0.3px)" width="84" height="12"><rect x="0" y="0" width="4" height="4" fill="rgb(222,224,225)"/><rect x="0" y="4" width="4" height="4" fill="rgb(248,250,251)"/><rect x="0" y="8" width="4" height="4" fill="rgb(250,252,253)"/><rect x="4" y="0" width="4" height="4" fill="rgb(180,182,183)"/><rect x="4" y="4" width="4" height="4" fill="rgb(189,191,192)"/><rect x="4" y="8" width="4" height="4" fill="rgb(242,244,245)"/><rect x="8" y="0" width="4" height="4" fill="rgb(181,183,184)"/><rect x="8" y="4" width="4" height="4" fill="rgb(199,201,202)"/><rect x="8" y="8" width="4" height="4" fill="rgb(234,236,237)"/><rect x="12" y="0" width="4" height="4" fill="rgb(192,194,195)"/><rect x="12" y="4" width="4" height="4" fill="rgb(192,194,195)"/><rect x="12" y="8" width="4" height="4" fill="rgb(235,237,238)"/><rect x="16" y="0" width="4" height="4" fill="rgb(210,212,213)"/><rect x="16" y="4" width="4" height="4" fill="rgb(192,194,195)"/><rect x="16" y="8" width="4" height="4" fill="rgb(232,234,235)"/><rect x="20" y="0" width="4" height="4" fill="rgb(196,198,199)"/><rect x="20" y="4" width="4" height="4" fill="rgb(206,208,209)"/><rect x="20" y="8" width="4" height="4" fill="rgb(243,245,246)"/><rect x="24" y="0" width="4" height="4" fill="rgb(182,184,185)"/><rect x="24" y="4" width="4" height="4" fill="rgb(184,186,187)"/><rect x="24" y="8" width="4" height="4" fill="rgb(239,241,242)"/><rect x="28" y="0" width="4" height="4" fill="rgb(175,177,178)"/><rect x="28" y="4" width="4" height="4" fill="rgb(208,210,211)"/><rect x="28" y="8" width="4" height="4" fill="rgb(238,240,241)"/><rect x="32" y="0" width="4" height="4" fill="rgb(251,253,254)"/><rect x="32" y="4" width="4" height="4" fill="rgb(251,253,254)"/><rect x="32" y="8" width="4" height="4" fill="rgb(248,250,251)"/><rect x="36" y="0" width="4" height="4" fill="rgb(196,198,199)"/><rect x="36" y="4" width="4" height="4" fill="rgb(208,210,211)"/><rect x="36" y="8" width="4" height="4" fill="rgb(243,245,246)"/><rect x="40" y="0" width="4" height="4" fill="rgb(186,188,189)"/><rect x="40" y="4" width="4" height="4" fill="rgb(202,204,205)"/><rect x="40" y="8" width="4" height="4" fill="rgb(243,245,246)"/><rect x="44" y="0" width="4" height="4" fill="rgb(191,193,194)"/><rect x="44" y="4" width="4" height="4" fill="rgb(243,245,246)"/><rect x="44" y="8" width="4" height="4" fill="rgb(234,236,237)"/><rect x="48" y="0" width="4" height="4" fill="rgb(235,237,238)"/><rect x="48" y="4" width="4" height="4" fill="rgb(189,191,192)"/><rect x="48" y="8" width="4" height="4" fill="rgb(240,242,243)"/><rect x="52" y="0" width="4" height="4" fill="rgb(198,200,201)"/><rect x="52" y="4" width="4" height="4" fill="rgb(207,209,210)"/><rect x="52" y="8" width="4" height="4" fill="rgb(240,242,243)"/><rect x="56" y="0" width="4" height="4" fill="rgb(206,208,209)"/><rect x="56" y="4" width="4" height="4" fill="rgb(200,202,203)"/><rect x="56" y="8" width="4" height="4" fill="rgb(223,225,226)"/><rect x="60" y="0" width="4" height="4" fill="rgb(242,244,245)"/><rect x="60" y="4" width="4" height="4" fill="rgb(248,250,251)"/><rect x="60" y="8" width="4" height="4" fill="rgb(249,251,252)"/><rect x="64" y="0" width="4" height="4" fill="rgb(192,194,195)"/><rect x="64" y="4" width="4" height="4" fill="rgb(207,209,210)"/><rect x="64" y="8" width="4" height="4" fill="rgb(242,244,245)"/><rect x="68" y="0" width="4" height="4" fill="rgb(203,205,206)"/><rect x="68" y="4" width="4" height="4" fill="rgb(224,226,227)"/><rect x="68" y="8" width="4" height="4" fill="rgb(222,224,225)"/><rect x="72" y="0" width="4" height="4" fill="rgb(194,196,197)"/><rect x="72" y="4" width="4" height="4" fill="rgb(206,208,209)"/><rect x="72" y="8" width="4" height="4" fill="rgb(239,241,242)"/><rect x="76" y="0" width="4" height="4" fill="rgb(207,209,210)"/><rect x="76" y="4" width="4" height="4" fill="rgb(239,241,242)"/><rect x="76" y="8" width="4" height="4" fill="rgb(244,246,247)"/><rect x="80" y="0" width="4" height="4" fill="rgb(204,206,207)"/><rect x="80" y="4" width="4" height="4" fill="rgb(198,200,201)"/><rect x="80" y="8" width="4" height="4" fill="rgb(223,225,226)"/></svg>
<div class="t" style="right:61.0px;top:616.2px;height:19.6px;line-height:19.6px;font-size:14px;color:#37464b;font-weight:normal;">665 <span style="color:#9aa3a6">(7.24%)</span></div>
<div class="b" style="left:1621px;top:643.5px;width:15px;height:15px;background:#dbebf4;border-radius:50%"></div>
<svg style="position:absolute;left:1648px;top:645px;filter:blur(0.3px)" width="92" height="12"><rect x="0" y="0" width="4" height="4" fill="rgb(222,224,225)"/><rect x="0" y="4" width="4" height="4" fill="rgb(248,250,251)"/><rect x="0" y="8" width="4" height="4" fill="rgb(250,252,253)"/><rect x="4" y="0" width="4" height="4" fill="rgb(184,186,187)"/><rect x="4" y="4" width="4" height="4" fill="rgb(223,225,226)"/><rect x="4" y="8" width="4" height="4" fill="rgb(230,232,233)"/><rect x="8" y="0" width="4" height="4" fill="rgb(198,200,201)"/><rect x="8" y="4" width="4" height="4" fill="rgb(223,225,226)"/><rect x="8" y="8" width="4" height="4" fill="rgb(242,244,245)"/><rect x="12" y="0" width="4" height="4" fill="rgb(174,176,177)"/><rect x="12" y="4" width="4" height="4" fill="rgb(205,207,208)"/><rect x="12" y="8" width="4" height="4" fill="rgb(234,236,237)"/><rect x="16" y="0" width="4" height="4" fill="rgb(191,193,194)"/><rect x="16" y="4" width="4" height="4" fill="rgb(199,201,202)"/><rect x="16" y="8" width="4" height="4" fill="rgb(234,236,237)"/><rect x="20" y="0" width="4" height="4" fill="rgb(246,248,249)"/><rect x="20" y="4" width="4" height="4" fill="rgb(248,250,251)"/><rect x="20" y="8" width="4" height="4" fill="rgb(248,250,251)"/><rect x="24" y="0" width="4" height="4" fill="rgb(224,226,227)"/><rect x="24" y="4" width="4" height="4" fill="rgb(230,232,233)"/><rect x="24" y="8" width="4" height="4" fill="rgb(238,240,241)"/><rect x="28" y="0" width="4" height="4" fill="rgb(238,240,241)"/><rect x="28" y="4" width="4" height="4" fill="rgb(199,201,202)"/><rect x="28" y="8" width="4" height="4" fill="rgb(225,227,228)"/><rect x="32" y="0" width="4" height="4" fill="rgb(209,211,212)"/><rect x="32" y="4" width="4" height="4" fill="rgb(200,202,203)"/><rect x="32" y="8" width="4" height="4" fill="rgb(228,230,231)"/><rect x="36" y="0" width="4" height="4" fill="rgb(202,204,205)"/><rect x="36" y="4" width="4" height="4" fill="rgb(206,208,209)"/><rect x="36" y="8" width="4" height="4" fill="rgb(235,237,238)"/><rect x="40" y="0" width="4" height="4" fill="rgb(218,220,221)"/><rect x="40" y="4" width="4" height="4" fill="rgb(191,193,194)"/><rect x="40" y="8" width="4" height="4" fill="rgb(228,230,231)"/><rect x="44" y="0" width="4" height="4" fill="rgb(227,229,230)"/><rect x="44" y="4" width="4" height="4" fill="rgb(211,213,214)"/><rect x="44" y="8" width="4" height="4" fill="rgb(227,229,230)"/><rect x="48" y="0" width="4" height="4" fill="rgb(190,192,193)"/><rect x="48" y="4" width="4" height="4" fill="rgb(222,224,225)"/><rect x="48" y="8" width="4" height="4" fill="rgb(227,229,230)"/><rect x="52" y="0" width="4" height="4" fill="rgb(250,252,253)"/><rect x="52" y="4" width="4" height="4" fill="rgb(246,248,249)"/><rect x="52" y="8" width="4" height="4" fill="rgb(239,241,242)"/><rect x="56" y="0" width="4" height="4" fill="rgb(192,194,195)"/><rect x="56" y="4" width="4" height="4" fill="rgb(199,201,202)"/><rect x="56" y="8" width="4" height="4" fill="rgb(225,227,228)"/><rect x="60" y="0" width="4" height="4" fill="rgb(199,201,202)"/><rect x="60" y="4" width="4" height="4" fill="rgb(225,227,228)"/><rect x="60" y="8" width="4" height="4" fill="rgb(224,226,227)"/><rect x="64" y="0" width="4" height="4" fill="rgb(237,239,240)"/><rect x="64" y="4" width="4" height="4" fill="rgb(234,236,237)"/><rect x="64" y="8" width="4" height="4" fill="rgb(240,242,243)"/><rect x="68" y="0" width="4" height="4" fill="rgb(206,208,209)"/><rect x="68" y="4" width="4" height="4" fill="rgb(194,196,197)"/><rect x="68" y="8" width="4" height="4" fill="rgb(226,228,229)"/><rect x="72" y="0" width="4" height="4" fill="rgb(208,210,211)"/><rect x="72" y="4" width="4" height="4" fill="rgb(238,240,241)"/><rect x="72" y="8" width="4" height="4" fill="rgb(243,245,246)"/><rect x="76" y="0" width="4" height="4" fill="rgb(192,194,195)"/><rect x="76" y="4" width="4" height="4" fill="rgb(223,225,226)"/><rect x="76" y="8" width="4" height="4" fill="rgb(228,230,231)"/><rect x="80" y="0" width="4" height="4" fill="rgb(210,212,213)"/><rect x="80" y="4" width="4" height="4" fill="rgb(225,227,228)"/><rect x="80" y="8" width="4" height="4" fill="rgb(240,242,243)"/><rect x="84" y="0" width="4" height="4" fill="rgb(228,230,231)"/><rect x="84" y="4" width="4" height="4" fill="rgb(197,199,200)"/><rect x="84" y="8" width="4" height="4" fill="rgb(225,227,228)"/><rect x="88" y="0" width="4" height="4" fill="rgb(184,186,187)"/><rect x="88" y="4" width="4" height="4" fill="rgb(209,211,212)"/><rect x="88" y="8" width="4" height="4" fill="rgb(243,245,246)"/></svg>
<div class="t" style="right:61.0px;top:642.2px;height:19.6px;line-height:19.6px;font-size:14px;color:#37464b;font-weight:normal;">500 <span style="color:#9aa3a6">(5.45%)</span></div>
<div class="b" style="left:1621px;top:680.5px;width:15px;height:15px;background:#cfd2d3;border-radius:50%"></div>
<div class="t " style="left:1648.0px;top:679.2px;height:19.6px;line-height:19.6px;font-size:14px;color:#9aa3a6;font-weight:normal;">Other (119 more)</div>
<div class="t" style="right:61.0px;top:679.2px;height:19.6px;line-height:19.6px;font-size:14px;color:#9aa3a6;font-weight:normal;">5,857 (5.45%)</div>
<div class="b" style="left:1422px;top:758px;width:465px;height:265px;background:#fff;border-radius:2px;box-shadow:0 1px 6px rgba(0,0,0,.13)"></div>
<div class="b" style="left:1422px;top:758px;width:465px;height:37px;background:#f8f8f8;border-bottom:1px solid #e0e3e4;box-sizing:border-box"></div>
<div class="t " style="left:1439.0px;top:765.8px;height:22.4px;line-height:22.4px;font-size:16px;color:#37464b;font-weight:normal;letter-spacing:-0.4px;-webkit-text-stroke:0.3px #37464b">Client IP</div>
<svg class="b" style="left:0;top:0" width="1920" height="1080"><path fill="#9891be" d="M1451.04 884.80A5.00 5.00 0 0 1 1446.07 879.28A67.60 67.60 0 0 1 1564.89 842.61A5.00 5.00 0 0 1 1563.89 849.97L1552.16 857.98A5.00 5.00 0 0 1 1545.63 857.19A43.50 43.50 0 0 0 1470.19 880.47A5.00 5.00 0 0 1 1465.24 884.80Z"/><path fill="#aba6cd" d="M1565.58 852.45A5.00 5.00 0 0 1 1572.80 854.21A67.60 67.60 0 0 1 1561.89 933.29A5.00 5.00 0 0 1 1554.47 933.03L1545.34 922.15A5.00 5.00 0 0 1 1545.47 915.57A43.50 43.50 0 0 0 1552.20 866.82A5.00 5.00 0 0 1 1553.85 860.45Z"/><path fill="#bfbad9" d="M1552.17 934.96A5.00 5.00 0 0 1 1551.14 942.32A67.60 67.60 0 0 1 1494.17 951.14A5.00 5.00 0 0 1 1490.96 944.44L1496.37 931.31A5.00 5.00 0 0 1 1502.26 928.38A43.50 43.50 0 0 0 1536.54 923.07A5.00 5.00 0 0 1 1543.04 924.08Z"/><path fill="#d5d2e6" d="M1488.19 943.29A5.00 5.00 0 0 1 1481.19 945.79A67.60 67.60 0 0 1 1458.44 925.80A5.00 5.00 0 0 1 1460.02 918.54L1472.34 911.49A5.00 5.00 0 0 1 1478.79 912.78A43.50 43.50 0 0 0 1491.48 923.93A5.00 5.00 0 0 1 1493.60 930.16Z"/><path fill="#e9e7f1" d="M1458.53 915.94A5.00 5.00 0 0 1 1451.47 913.62A67.60 67.60 0 0 1 1446.07 893.32A5.00 5.00 0 0 1 1451.04 887.80L1465.24 887.80A5.00 5.00 0 0 1 1470.19 892.13A43.50 43.50 0 0 0 1473.00 902.66A5.00 5.00 0 0 1 1470.85 908.88Z"/></svg>
<div class="b" style="left:1621px;top:828.5px;width:15px;height:15px;background:#9891be;border-radius:50%"></div>
<div class="t " style="left:1648.0px;top:827.2px;height:19.6px;line-height:19.6px;font-size:14px;color:#37464b;font-weight:normal;">5556</div>
<div class="t" style="right:61.0px;top:827.2px;height:19.6px;line-height:19.6px;font-size:14px;color:#37464b;font-weight:normal;">740 <span style="color:#9aa3a6">(8.07%)</span></div>
<div class="b" style="left:1621px;top:854.5px;width:15px;height:15px;background:#aba6cd;border-radius:50%"></div>
<div class="t " style="left:1648.0px;top:853.2px;height:19.6px;line-height:19.6px;font-size:14px;color:#37464b;font-weight:normal;">5556</div>
<div class="t" style="right:61.0px;top:853.2px;height:19.6px;line-height:19.6px;font-size:14px;color:#37464b;font-weight:normal;">700 <span style="color:#9aa3a6">(7.63%)</span></div>
<div class="b" style="left:1621px;top:880.5px;width:15px;height:15px;background:#bfbad9;border-radius:50%"></div>
<div class="t " style="left:1648.0px;top:879.2px;height:19.6px;line-height:19.6px;font-size:14px;color:#37464b;font-weight:normal;">5557</div>
<div class="t" style="right:61.0px;top:879.2px;height:19.6px;line-height:19.6px;font-size:14px;color:#37464b;font-weight:normal;">680 <span style="color:#9aa3a6">(7.41%)</span></div>
<div class="b" style="left:1621px;top:906.5px;width:15px;height:15px;background:#d5d2e6;border-radius:50%"></div>
<div class="t " style="left:1648.0px;top:905.2px;height:19.6px;line-height:19.6px;font-size:14px;color:#37464b;font-weight:normal;">53</div>
<div class="t" style="right:61.0px;top:905.2px;height:19.6px;line-height:19.6px;font-size:14px;color:#37464b;font-weight:normal;">665 <span style="color:#9aa3a6">(7.24%)</span></div>
<div class="b" style="left:1621px;top:932.5px;width:15px;height:15px;background:#e9e7f1;border-radius:50%"></div>
<div class="t " style="left:1648.0px;top:931.2px;height:19.6px;line-height:19.6px;font-size:14px;color:#37464b;font-weight:normal;">443</div>
<div class="t" style="right:61.0px;top:931.2px;height:19.6px;line-height:19.6px;font-size:14px;color:#37464b;font-weight:normal;">500 <span style="color:#9aa3a6">(5.45%)</span></div>
<div class="b" style="left:1621px;top:969.5px;width:15px;height:15px;background:#cfd2d3;border-radius:50%"></div>
<div class="t " style="left:1648.0px;top:968.2px;height:19.6px;line-height:19.6px;font-size:14px;color:#9aa3a6;font-weight:normal;">Other (119 more)</div>
<div class="t" style="right:61.0px;top:968.2px;height:19.6px;line-height:19.6px;font-size:14px;color:#9aa3a6;font-weight:normal;">5,857 (5.45%)</div>
</body></html>
